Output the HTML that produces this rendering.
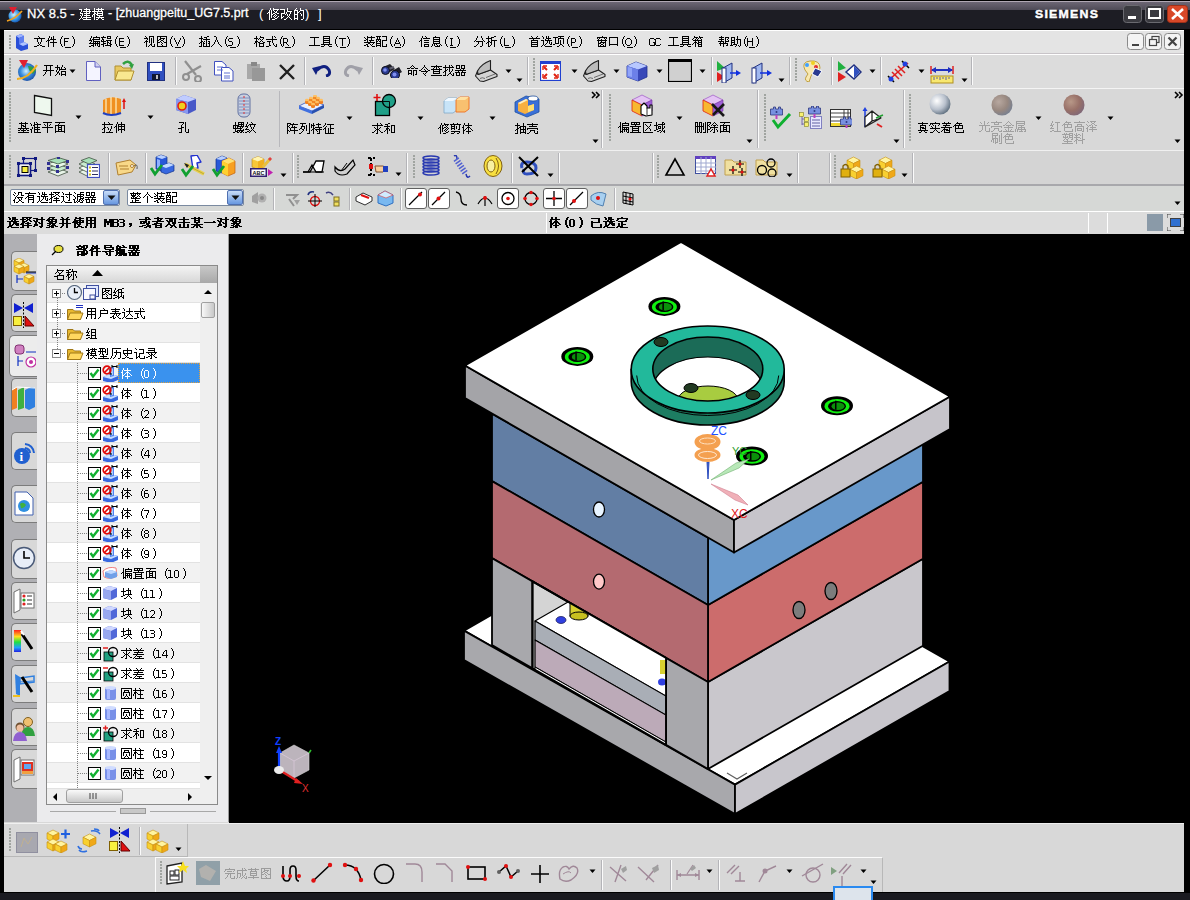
<!DOCTYPE html>
<html><head><meta charset="utf-8"><style>
html,body{margin:0;padding:0;width:1190px;height:900px;overflow:hidden;background:#000}
body>div,body>svg{position:absolute}
body{font-family:"Liberation Sans",sans-serif}
</style></head><body>
<div style="left:0px;top:0px;width:1190px;height:900px;background:#000"></div>
<div style="left:0px;top:1px;width:1190px;height:1px;background:#b0a8b4"></div>
<div style="left:0px;top:2px;width:1190px;height:8px;background:linear-gradient(#6c6674,#4e4a56)"></div>
<div style="left:0px;top:10px;width:1190px;height:19px;background:#1d1d24"></div>
<svg style="left:6px;top:6px;" width="17" height="17" viewBox="0 0 17 17"><defs><radialGradient id="nxg" cx="0.4" cy="0.4" r="0.7"><stop offset="0" stop-color="#c8f0ff"/><stop offset="0.6" stop-color="#3090e0"/><stop offset="1" stop-color="#1040a0"/></radialGradient></defs><circle cx="9" cy="10" r="6.5" fill="url(#nxg)"/><path d="M1 15 Q9 13 16 5" stroke="#f0a020" stroke-width="1.8" fill="none"/><path d="M3 1 L11 1 L7 8 z" fill="#e02030"/></svg>
<div style="left:27px;top:6px;white-space:nowrap;font:13px 'Liberation Sans',sans-serif;color:#fff;-webkit-text-stroke:0.3px #fff">NX 8.5 -</div>
<svg style="left:77px;top:4px" width="34" height="30"><path fill="#fff" d="M24 4h1v1h-1zM9 4h1v1h-1zM21 4h1v1h-1zM2 5h3v1h-3zM19 5h8v1h-8zM7 5h6v1h-6zM17 4h1v3h-1zM12 6h1v1h-1zM24 6h1v1h-1zM9 6h1v1h-1zM21 6h1v1h-1zM4 6h1v2h-1zM15 7h11v1h-11zM6 7h8v1h-8zM17 8h1v1h-1zM12 8h1v1h-1zM3 8h1v1h-1zM20 8h1v1h-1zM25 8h1v1h-1zM9 8h1v1h-1zM20 9h6v1h-6zM3 9h3v1h-3zM17 9h2v1h-2zM7 9h6v1h-6zM16 10h2v1h-2zM19 10h2v1h-2zM25 10h1v1h-1zM9 10h1v1h-1zM5 10h1v2h-1zM3 11h1v1h-1zM20 11h6v1h-6zM7 11h6v1h-6zM15 11h1v2h-1zM22 12h1v1h-1zM9 12h1v1h-1zM4 12h1v2h-1zM19 13h8v1h-8zM6 13h8v1h-8zM24 14h1v1h-1zM3 14h1v1h-1zM5 14h1v1h-1zM9 14h1v1h-1zM21 14h1v1h-1zM17 11h1v5h-1zM2 15h1v1h-1zM6 15h8v1h-8zM25 15h2v1h-2zM19 15h2v1h-2z"/></svg>
<div style="left:108px;top:6px;white-space:nowrap;font:12.5px 'Liberation Sans',sans-serif;color:#fff;-webkit-text-stroke:0.3px #fff">- [zhuangpeitu_UG7.5.prt</div>
<div style="left:259px;top:6px;white-space:nowrap;font:13px 'Liberation Sans',sans-serif;color:#fff;">(</div>
<svg style="left:265px;top:4px" width="47" height="30"><path fill="#fff" d="M8 4h1v1h-1zM31 4h1v1h-1zM35 4h1v2h-1zM5 4h1v2h-1zM15 5h5v1h-5zM30 5h1v1h-1zM8 5h6v1h-6zM22 4h1v3h-1zM29 6h4v1h-4zM12 6h1v1h-1zM35 6h4v1h-4zM8 6h1v1h-1zM4 6h1v2h-1zM11 7h1v1h-1zM34 7h1v1h-1zM22 7h5v1h-5zM32 7h1v1h-1zM9 7h1v1h-1zM19 6h1v3h-1zM10 8h2v1h-2zM3 8h2v1h-2zM32 8h2v1h-2zM6 6h1v4h-1zM29 7h1v3h-1zM25 8h1v2h-1zM21 8h1v2h-1zM2 9h1v1h-1zM32 9h1v1h-1zM35 9h1v1h-1zM16 9h4v1h-4zM12 9h2v1h-2zM8 9h2v1h-2zM6 10h2v1h-2zM29 10h4v1h-4zM20 10h1v1h-1zM10 10h1v1h-1zM24 10h1v2h-1zM22 10h1v2h-1zM36 10h1v2h-1zM11 11h1v1h-1zM9 11h1v1h-1zM16 10h1v3h-1zM23 12h1v1h-1zM18 12h1v1h-1zM13 12h1v1h-1zM8 12h1v1h-1zM10 12h1v1h-1zM29 11h1v3h-1zM32 11h1v3h-1zM6 11h1v3h-1zM12 13h1v1h-1zM24 13h1v1h-1zM22 13h1v1h-1zM16 13h2v1h-2zM9 13h1v1h-1zM38 7h1v8h-1zM29 14h4v1h-4zM10 14h2v1h-2zM25 14h1v1h-1zM21 14h1v1h-1zM16 14h1v1h-1zM4 9h1v7h-1zM26 15h1v1h-1zM29 15h1v1h-1zM32 15h1v1h-1zM7 15h3v1h-3zM19 15h2v1h-2zM36 15h2v1h-2z"/></svg>
<div style="left:305px;top:6px;white-space:nowrap;font:13px 'Liberation Sans',sans-serif;color:#fff;">)</div>
<div style="left:318px;top:6px;white-space:nowrap;font:13px 'Liberation Sans',sans-serif;color:#fff;">]</div>
<div style="left:1035px;top:8px;white-space:nowrap;font:bold 11px 'Liberation Sans',sans-serif;color:#fff;letter-spacing:1.1px;-webkit-text-stroke:0.4px #fff;transform:scaleX(1.12);transform-origin:0 0">SIEMENS</div>
<svg style="left:1120px;top:3px;" width="70" height="22" viewBox="0 0 70 22"><rect x="3.5" y="2.5" width="18" height="17" rx="3" fill="#3a3a40" stroke="#6a6a70"/><rect x="8" y="13" width="8" height="3" fill="#fff"/><rect x="25.5" y="2.5" width="18" height="17" rx="3" fill="#3a3a40" stroke="#6a6a70"/><rect x="29" y="6" width="11" height="9" fill="none" stroke="#fff" stroke-width="2"/><rect x="47.5" y="2.5" width="20" height="17" rx="3" fill="#d84828" stroke="#a03018"/><path d="M52 6 L63 16 M63 6 L52 16" stroke="#fff" stroke-width="2.6"/></svg>
<div style="left:4px;top:30px;width:1180px;height:862px;background:#d8d8d8"></div>
<div style="left:4px;top:30px;width:1180px;height:1px;background:#fff"></div>
<div style="left:4px;top:31px;width:1180px;height:22px;background:#e4e4e4"></div>
<div style="left:4px;top:53px;width:1180px;height:1px;background:#c8c4c8"></div>
<svg style="left:7px;top:33px;" width="24" height="18" viewBox="0 0 24 18"><rect x="2" y="2" width="2" height="2" fill="#a0a4a0"/><rect x="2" y="5" width="2" height="2" fill="#a0a4a0"/><rect x="2" y="8" width="2" height="2" fill="#a0a4a0"/><rect x="2" y="11" width="2" height="2" fill="#a0a4a0"/><rect x="2" y="14" width="2" height="2" fill="#a0a4a0"/><rect x="0" y="0" width="4" height="18" fill="none"/><path d="M9 3 L14 1 L17 3 L17 9 L21 11 L21 16 L14 18 L9 15 z" fill="#2a50d8"/><path d="M9 3 L14 1 L17 3 L12 5 z" fill="#9fb4ff"/><path d="M12 5 L17 3 L17 9 L12 11 z" fill="#6080f0"/><path d="M12 11 L17 9 L21 11 L16 13 z" fill="#b0c4ff"/></svg>
<svg style="left:32px;top:32px" width="50" height="28"><path fill="#000" d="M40 4h1v1h-1zM30 4h1v1h-1zM6 4h1v1h-1zM17 4h1v2h-1zM7 5h1v1h-1zM21 4h1v3h-1zM29 5h1v2h-1zM19 5h1v2h-1zM41 5h1v2h-1zM32 6h5v1h-5zM2 6h11v1h-11zM16 6h1v2h-1zM18 7h6v1h-6zM32 7h1v2h-1zM15 8h3v1h-3zM5 7h1v3h-1zM9 7h1v3h-1zM21 8h1v2h-1zM14 9h1v1h-1zM32 9h4v1h-4zM18 10h7v1h-7zM28 7h1v5h-1zM42 7h1v5h-1zM8 10h1v2h-1zM6 10h1v2h-1zM7 12h1v1h-1zM32 10h1v4h-1zM29 12h1v2h-1zM41 12h1v2h-1zM5 13h2v1h-2zM8 13h2v1h-2zM16 9h1v6h-1zM21 11h1v4h-1zM40 14h1v1h-1zM30 14h1v1h-1zM2 14h3v1h-3zM10 14h3v1h-3zM33 15h6v1h-6z"/></svg>
<svg style="left:87px;top:32px" width="50" height="28"><path fill="#000" d="M40 4h1v1h-1zM30 4h1v1h-1zM20 4h4v1h-4zM9 4h1v1h-1zM16 4h1v1h-1zM4 4h1v2h-1zM23 5h1v1h-1zM20 5h1v1h-1zM6 5h7v1h-7zM14 5h5v1h-5zM29 5h1v2h-1zM41 5h1v2h-1zM12 6h1v1h-1zM32 6h5v1h-5zM20 6h4v1h-4zM6 6h1v1h-1zM15 6h1v1h-1zM3 6h1v2h-1zM5 7h8v1h-8zM15 7h2v1h-2zM32 7h1v2h-1zM14 8h1v1h-1zM6 8h1v1h-1zM19 8h6v1h-6zM2 8h3v1h-3zM16 8h1v1h-1zM32 9h5v1h-5zM20 9h1v1h-1zM6 9h7v1h-7zM4 9h1v1h-1zM14 9h5v1h-5zM23 9h1v2h-1zM12 10h1v1h-1zM8 10h1v1h-1zM3 10h1v1h-1zM6 10h1v1h-1zM10 10h1v1h-1zM20 10h2v1h-2zM16 10h1v1h-1zM28 7h1v5h-1zM42 7h1v5h-1zM22 11h2v1h-2zM16 11h3v1h-3zM2 11h11v1h-11zM32 10h1v3h-1zM20 11h1v2h-1zM6 12h1v1h-1zM14 12h3v1h-3zM23 12h2v1h-2zM12 12h1v2h-1zM29 12h1v2h-1zM8 12h1v2h-1zM41 12h1v2h-1zM10 12h1v2h-1zM32 13h5v1h-5zM4 13h3v1h-3zM18 13h6v1h-6zM16 13h1v2h-1zM23 14h1v1h-1zM40 14h1v1h-1zM30 14h1v1h-1zM6 14h1v1h-1zM11 14h2v1h-2zM2 14h2v1h-2zM33 15h6v1h-6z"/></svg>
<svg style="left:142px;top:32px" width="50" height="28"><path fill="#000" d="M40 4h1v1h-1zM30 4h1v1h-1zM3 4h1v1h-1zM15 4h10v1h-10zM7 4h5v1h-5zM18 5h1v1h-1zM4 5h1v1h-1zM29 5h1v2h-1zM41 5h1v2h-1zM2 6h4v1h-4zM18 6h5v1h-5zM15 5h1v3h-1zM38 6h1v2h-1zM32 6h1v2h-1zM5 7h1v1h-1zM17 7h2v1h-2zM21 7h1v1h-1zM19 8h2v1h-2zM4 8h1v1h-1zM15 8h2v1h-2zM24 5h1v5h-1zM33 8h1v2h-1zM37 8h1v2h-1zM18 9h1v1h-1zM15 9h1v1h-1zM3 9h3v1h-3zM21 9h1v1h-1zM11 5h1v6h-1zM7 5h1v6h-1zM2 10h1v1h-1zM19 10h1v1h-1zM15 10h3v1h-3zM22 10h3v1h-3zM9 6h1v6h-1zM28 7h1v5h-1zM42 7h1v5h-1zM34 10h1v2h-1zM36 10h1v2h-1zM20 11h1v1h-1zM19 12h1v1h-1zM8 12h2v1h-2zM24 11h1v3h-1zM15 11h1v3h-1zM12 12h1v2h-1zM29 12h1v2h-1zM35 12h1v2h-1zM41 12h1v2h-1zM7 13h1v1h-1zM20 13h1v1h-1zM9 13h1v1h-1zM4 10h1v5h-1zM40 14h1v1h-1zM30 14h1v1h-1zM6 14h1v1h-1zM15 14h10v1h-10zM10 14h3v1h-3zM33 15h6v1h-6z"/></svg>
<svg style="left:197px;top:32px" width="50" height="28"><path fill="#000" d="M40 4h1v1h-1zM30 4h1v1h-1zM17 4h2v1h-2zM10 4h2v1h-2zM4 4h1v2h-1zM7 5h3v1h-3zM29 5h1v2h-1zM41 5h1v2h-1zM2 6h4v1h-4zM32 6h4v1h-4zM9 6h1v1h-1zM19 5h1v3h-1zM6 7h7v1h-7zM31 7h1v2h-1zM4 7h1v2h-1zM18 8h1v2h-1zM20 8h1v2h-1zM7 9h1v1h-1zM4 9h2v1h-2zM11 9h2v1h-2zM32 9h3v1h-3zM12 10h1v1h-1zM6 10h1v1h-1zM3 10h2v1h-2zM28 7h1v5h-1zM42 7h1v5h-1zM17 10h1v2h-1zM21 10h1v2h-1zM6 11h2v1h-2zM2 11h1v1h-1zM11 11h2v1h-2zM35 10h1v3h-1zM22 12h1v1h-1zM16 12h1v1h-1zM9 8h1v6h-1zM4 11h1v3h-1zM12 12h1v2h-1zM29 12h1v2h-1zM6 12h1v2h-1zM41 12h1v2h-1zM23 13h1v1h-1zM31 13h4v1h-4zM15 13h1v1h-1zM40 14h1v1h-1zM24 14h1v1h-1zM30 14h1v1h-1zM14 14h1v1h-1zM2 14h3v1h-3zM6 14h7v1h-7zM33 15h6v1h-6z"/></svg>
<svg style="left:252px;top:32px" width="50" height="28"><path fill="#000" d="M40 4h1v1h-1zM30 4h1v1h-1zM22 4h1v1h-1zM8 4h1v1h-1zM4 4h1v2h-1zM23 5h1v1h-1zM8 5h4v1h-4zM20 4h1v3h-1zM29 5h1v2h-1zM41 5h1v2h-1zM11 6h1v1h-1zM2 6h4v1h-4zM7 6h1v1h-1zM31 6h4v1h-4zM8 7h1v1h-1zM6 7h1v1h-1zM10 7h1v1h-1zM14 7h11v1h-11zM4 7h1v2h-1zM9 8h1v1h-1zM35 7h1v3h-1zM31 7h1v3h-1zM8 9h1v1h-1zM15 9h4v1h-4zM10 9h1v1h-1zM3 9h3v1h-3zM20 8h1v3h-1zM6 10h2v1h-2zM31 10h4v1h-4zM11 10h2v1h-2zM3 10h2v1h-2zM28 7h1v5h-1zM42 7h1v5h-1zM34 11h1v1h-1zM2 11h1v1h-1zM7 11h5v1h-5zM17 10h1v3h-1zM21 11h1v2h-1zM35 12h1v1h-1zM31 11h1v3h-1zM11 12h1v2h-1zM7 12h1v2h-1zM29 12h1v2h-1zM24 12h1v2h-1zM41 12h1v2h-1zM22 13h1v1h-1zM36 13h1v1h-1zM17 13h2v1h-2zM4 11h1v4h-1zM40 14h1v1h-1zM30 14h1v1h-1zM14 14h3v1h-3zM23 14h2v1h-2zM7 14h5v1h-5zM33 15h6v1h-6z"/></svg>
<svg style="left:307px;top:32px" width="50" height="28"><path fill="#000" d="M16 4h7v1h-7zM40 4h1v1h-1zM30 4h1v1h-1zM22 5h1v1h-1zM3 5h9v1h-9zM16 5h1v1h-1zM29 5h1v2h-1zM41 5h1v2h-1zM16 6h7v1h-7zM32 6h7v1h-7zM22 7h1v1h-1zM16 7h1v1h-1zM16 8h7v1h-7zM22 9h1v1h-1zM16 9h1v1h-1zM16 10h7v1h-7zM28 7h1v5h-1zM42 7h1v5h-1zM22 11h1v1h-1zM16 11h1v1h-1zM7 6h1v7h-1zM14 12h11v1h-11zM35 7h1v7h-1zM29 12h1v2h-1zM41 12h1v2h-1zM17 13h1v1h-1zM2 13h11v1h-11zM21 13h1v1h-1zM22 14h3v1h-3zM14 14h3v1h-3zM40 14h1v1h-1zM30 14h1v1h-1zM33 15h6v1h-6z"/></svg>
<svg style="left:362px;top:32px" width="50" height="28"><path fill="#000" d="M20 4h5v1h-5zM40 4h1v1h-1zM30 4h1v1h-1zM5 4h1v1h-1zM9 4h1v1h-1zM14 4h5v1h-5zM2 5h1v1h-1zM5 5h8v1h-8zM17 5h1v2h-1zM29 5h1v2h-1zM41 5h1v2h-1zM15 5h1v2h-1zM3 6h1v1h-1zM5 6h1v1h-1zM24 5h1v3h-1zM35 6h1v2h-1zM9 6h1v2h-1zM4 7h2v1h-2zM14 7h5v1h-5zM20 8h5v1h-5zM18 8h1v1h-1zM14 8h1v1h-1zM2 8h2v1h-2zM7 8h5v1h-5zM16 8h1v1h-1zM34 8h1v2h-1zM36 8h1v2h-1zM5 8h1v2h-1zM8 9h1v1h-1zM17 9h2v1h-2zM14 9h2v1h-2zM33 10h1v1h-1zM18 10h1v1h-1zM14 10h1v1h-1zM2 10h11v1h-11zM37 10h1v1h-1zM28 7h1v5h-1zM42 7h1v5h-1zM11 11h1v1h-1zM6 11h2v1h-2zM33 11h5v1h-5zM14 11h5v1h-5zM18 12h1v1h-1zM8 12h1v1h-1zM14 12h1v1h-1zM10 12h1v1h-1zM4 12h2v1h-2zM20 9h1v5h-1zM38 12h1v2h-1zM29 12h1v2h-1zM24 12h1v2h-1zM32 12h1v2h-1zM41 12h1v2h-1zM5 13h1v1h-1zM2 13h2v1h-2zM9 13h1v1h-1zM14 13h5v1h-5zM20 14h5v1h-5zM18 14h1v1h-1zM40 14h1v1h-1zM30 14h1v1h-1zM14 14h1v1h-1zM10 14h3v1h-3zM5 14h2v1h-2zM33 15h6v1h-6z"/></svg>
<svg style="left:417px;top:32px" width="50" height="28"><path fill="#000" d="M18 4h1v1h-1zM40 4h1v1h-1zM30 4h1v1h-1zM8 4h1v1h-1zM5 4h1v2h-1zM16 5h7v1h-7zM9 5h1v1h-1zM29 5h1v2h-1zM41 5h1v2h-1zM22 6h1v1h-1zM33 6h3v1h-3zM6 6h7v1h-7zM16 6h1v1h-1zM4 6h1v2h-1zM16 7h7v1h-7zM7 8h5v1h-5zM22 8h1v1h-1zM3 8h2v1h-2zM16 8h1v1h-1zM16 9h7v1h-7zM2 9h1v1h-1zM22 10h1v1h-1zM7 10h5v1h-5zM16 10h1v1h-1zM28 7h1v5h-1zM42 7h1v5h-1zM16 11h7v1h-7zM34 7h1v6h-1zM23 12h1v1h-1zM19 12h1v1h-1zM7 12h5v1h-5zM17 12h1v2h-1zM29 12h1v2h-1zM41 12h1v2h-1zM15 12h1v2h-1zM11 13h1v1h-1zM7 13h1v1h-1zM24 13h1v1h-1zM22 13h1v1h-1zM20 13h1v1h-1zM33 13h3v1h-3zM4 9h1v6h-1zM40 14h1v1h-1zM18 14h5v1h-5zM30 14h1v1h-1zM14 14h1v1h-1zM7 14h5v1h-5zM33 15h6v1h-6z"/></svg>
<svg style="left:472px;top:32px" width="50" height="28"><path fill="#000" d="M22 4h2v1h-2zM40 4h1v1h-1zM30 4h1v1h-1zM5 4h1v2h-1zM9 4h1v2h-1zM16 4h1v2h-1zM19 5h3v1h-3zM29 5h1v2h-1zM41 5h1v2h-1zM14 6h6v1h-6zM10 6h1v2h-1zM4 6h1v2h-1zM19 7h1v1h-1zM16 7h1v2h-1zM11 8h1v1h-1zM3 8h1v1h-1zM19 8h6v1h-6zM12 9h1v1h-1zM2 9h1v1h-1zM19 9h1v1h-1zM16 9h2v1h-2zM4 9h7v1h-7zM18 10h2v1h-2zM15 10h2v1h-2zM28 7h1v5h-1zM42 7h1v5h-1zM6 10h1v2h-1zM14 11h1v1h-1zM32 6h1v7h-1zM19 11h1v2h-1zM5 12h1v1h-1zM10 10h1v4h-1zM16 11h1v3h-1zM29 12h1v2h-1zM41 12h1v2h-1zM32 13h5v1h-5zM18 13h1v1h-1zM4 13h1v1h-1zM22 9h1v6h-1zM40 14h1v1h-1zM30 14h1v1h-1zM16 14h2v1h-2zM2 14h2v1h-2zM8 14h2v1h-2zM33 15h6v1h-6z"/></svg>
<svg style="left:527px;top:32px" width="62" height="28"><path fill="#000" d="M52 4h1v1h-1zM42 4h1v1h-1zM15 4h1v1h-1zM10 4h1v1h-1zM31 4h6v1h-6zM4 4h1v1h-1zM19 4h1v2h-1zM21 4h1v2h-1zM26 5h5v1h-5zM33 5h1v1h-1zM5 5h1v1h-1zM9 5h1v1h-1zM53 5h1v2h-1zM41 5h1v2h-1zM16 5h1v2h-1zM31 6h6v1h-6zM2 6h11v1h-11zM19 6h5v1h-5zM44 6h4v1h-4zM18 7h1v1h-1zM6 7h1v1h-1zM21 7h1v1h-1zM18 8h7v1h-7zM14 8h3v1h-3zM4 8h7v1h-7zM44 7h1v3h-1zM48 7h1v3h-1zM10 9h1v1h-1zM4 9h1v1h-1zM28 6h1v5h-1zM31 7h1v4h-1zM20 9h1v2h-1zM4 10h7v1h-7zM44 10h4v1h-4zM40 7h1v5h-1zM36 7h1v5h-1zM54 7h1v5h-1zM33 8h1v4h-1zM22 9h1v3h-1zM24 10h1v2h-1zM19 11h1v1h-1zM10 11h1v1h-1zM28 11h4v1h-4zM4 11h1v1h-1zM16 9h1v4h-1zM18 12h1v1h-1zM33 12h2v1h-2zM23 12h2v1h-2zM26 12h2v1h-2zM4 12h7v1h-7zM44 11h1v3h-1zM53 12h1v2h-1zM41 12h1v2h-1zM17 13h1v1h-1zM32 13h1v1h-1zM35 13h1v1h-1zM15 13h1v1h-1zM10 13h1v1h-1zM4 13h1v1h-1zM52 14h1v1h-1zM18 14h7v1h-7zM14 14h1v1h-1zM36 14h1v1h-1zM30 14h2v1h-2zM42 14h1v1h-1zM4 14h7v1h-7zM45 15h6v1h-6z"/></svg>
<svg style="left:594px;top:32px" width="50" height="28"><path fill="#000" d="M30 4h1v1h-1zM40 4h1v1h-1zM8 4h1v1h-1zM3 5h10v1h-10zM15 5h9v1h-9zM41 5h1v2h-1zM29 5h1v2h-1zM12 6h1v1h-1zM3 6h1v1h-1zM10 6h1v1h-1zM5 6h1v1h-1zM33 6h3v1h-3zM11 7h1v1h-1zM7 7h1v1h-1zM32 7h1v1h-1zM36 7h1v1h-1zM4 7h1v1h-1zM3 8h10v1h-10zM11 9h1v1h-1zM7 9h1v1h-1zM4 9h1v2h-1zM6 10h6v1h-6zM23 6h1v6h-1zM15 6h1v6h-1zM28 7h1v5h-1zM42 7h1v5h-1zM31 8h1v4h-1zM37 8h1v4h-1zM4 11h3v1h-3zM9 11h1v1h-1zM32 12h1v1h-1zM36 12h1v1h-1zM7 12h2v1h-2zM15 12h9v1h-9zM11 11h1v3h-1zM29 12h1v2h-1zM41 12h1v2h-1zM4 12h1v2h-1zM23 13h1v1h-1zM6 13h1v1h-1zM15 13h1v1h-1zM33 13h3v1h-3zM9 13h1v1h-1zM40 14h1v1h-1zM4 14h8v1h-8zM30 14h1v1h-1zM33 15h6v1h-6z"/></svg>
<svg style="left:716px;top:32px" width="50" height="28"><path fill="#000" d="M40 4h1v1h-1zM5 4h1v1h-1zM30 4h1v1h-1zM15 5h4v1h-4zM3 5h5v1h-5zM9 5h4v1h-4zM21 4h1v3h-1zM29 5h1v2h-1zM41 5h1v2h-1zM12 6h1v1h-1zM5 6h1v1h-1zM18 6h1v2h-1zM15 6h1v2h-1zM11 7h1v1h-1zM20 7h5v1h-5zM3 7h5v1h-5zM36 6h1v3h-1zM31 6h1v3h-1zM9 6h1v3h-1zM12 8h1v1h-1zM15 8h4v1h-4zM5 8h1v1h-1zM18 9h1v1h-1zM15 9h1v1h-1zM31 9h6v1h-6zM2 9h6v1h-6zM9 9h4v1h-4zM7 10h1v1h-1zM15 10h4v1h-4zM9 10h1v1h-1zM4 10h1v1h-1zM28 7h1v5h-1zM42 7h1v5h-1zM21 8h1v4h-1zM18 11h1v1h-1zM3 11h9v1h-9zM15 11h1v2h-1zM11 12h1v1h-1zM17 12h4v1h-4zM24 8h1v6h-1zM36 10h1v4h-1zM31 10h1v4h-1zM29 12h1v2h-1zM41 12h1v2h-1zM4 12h1v2h-1zM22 13h1v1h-1zM20 13h1v1h-1zM14 13h3v1h-3zM10 13h2v1h-2zM7 12h1v3h-1zM23 14h1v1h-1zM40 14h1v1h-1zM30 14h1v1h-1zM19 14h1v1h-1zM33 15h6v1h-6z"/></svg>
<svg style="left:648px;top:32px" width="62" height="28"><path fill="#000" d="M51 4h1v1h-1zM34 4h7v1h-7zM46 4h1v1h-1zM34 5h1v1h-1zM40 5h1v1h-1zM46 5h4v1h-4zM21 5h9v1h-9zM51 5h4v1h-4zM52 6h1v1h-1zM2 6h4v1h-4zM50 6h1v1h-1zM45 6h1v1h-1zM8 6h4v1h-4zM34 6h7v1h-7zM48 6h1v1h-1zM49 7h1v1h-1zM44 7h1v1h-1zM6 7h2v1h-2zM12 7h1v1h-1zM34 7h1v1h-1zM40 7h1v1h-1zM47 7h1v1h-1zM53 7h1v1h-1zM34 8h7v1h-7zM45 8h9v1h-9zM7 8h1v2h-1zM47 9h1v1h-1zM50 9h1v1h-1zM34 9h1v1h-1zM40 9h1v1h-1zM53 9h1v1h-1zM50 10h4v1h-4zM34 10h7v1h-7zM46 10h3v1h-3zM5 10h3v1h-3zM34 11h1v1h-1zM40 11h1v1h-1zM45 11h1v1h-1zM53 11h1v1h-1zM49 11h2v1h-2zM25 6h1v7h-1zM1 7h1v6h-1zM6 11h2v2h-2zM50 12h4v1h-4zM44 12h1v1h-1zM12 12h1v1h-1zM32 12h11v1h-11zM20 13h11v1h-11zM50 13h1v1h-1zM8 13h4v1h-4zM53 13h1v1h-1zM35 13h1v1h-1zM39 13h1v1h-1zM2 13h5v1h-5zM47 11h1v4h-1zM32 14h3v1h-3zM40 14h3v1h-3zM50 14h4v1h-4z"/></svg>
<svg style="left:1125px;top:31px;" width="60" height="22" viewBox="0 0 60 22"><rect x="2.5" y="2.5" width="16" height="16" rx="3" fill="#f4f4f4" stroke="#8a8a8a"/><rect x="20.5" y="2.5" width="16" height="16" rx="3" fill="#f4f4f4" stroke="#8a8a8a"/><rect x="39.5" y="2.5" width="16" height="16" rx="3" fill="#f4f4f4" stroke="#8a8a8a"/><rect x="7" y="13" width="7" height="2" fill="#444"/><rect x="27" y="5.5" width="7" height="6" fill="none" stroke="#444" stroke-width="1.2"/><rect x="24.5" y="8.5" width="7" height="6" fill="#f4f4f4" stroke="#444" stroke-width="1.2"/><path d="M43.5 6.5 L51.5 14.5 M51.5 6.5 L43.5 14.5" stroke="#444" stroke-width="2.2"/></svg>
<div style="left:4px;top:54px;width:1180px;height:1px;background:#fff"></div>
<div style="left:4px;top:55px;width:1180px;height:33px;background:#dcdcdc"></div>
<div style="left:4px;top:88px;width:1180px;height:1px;background:#f4f4f4"></div>
<div style="left:4px;top:89px;width:1180px;height:61px;background:#d8d8d8"></div>
<div style="left:4px;top:150px;width:1180px;height:1px;background:#f0f0f0"></div>
<div style="left:4px;top:151px;width:1180px;height:33px;background:#d4d4d4"></div>
<div style="left:4px;top:184px;width:1180px;height:2px;background:#a8a8ac"></div>
<div style="left:4px;top:186px;width:1180px;height:25px;background:#d6d8d6"></div>
<div style="left:4px;top:211px;width:1180px;height:1px;background:#fff"></div>
<div style="left:4px;top:212px;width:1180px;height:22px;background:#dcdcdc"></div>
<svg style="left:8px;top:58px" width="4" height="26" viewBox="0 0 4 26"><rect x="1" y="0" width="2" height="2" fill="#a0a4a0"/><rect x="1" y="3" width="2" height="2" fill="#a0a4a0"/><rect x="1" y="6" width="2" height="2" fill="#a0a4a0"/><rect x="1" y="9" width="2" height="2" fill="#a0a4a0"/><rect x="1" y="12" width="2" height="2" fill="#a0a4a0"/><rect x="1" y="15" width="2" height="2" fill="#a0a4a0"/><rect x="1" y="18" width="2" height="2" fill="#a0a4a0"/><rect x="1" y="21" width="2" height="2" fill="#a0a4a0"/></svg><svg style="left:16px;top:60px" width="22" height="22" viewBox="0 0 22 22"><defs><radialGradient id="stg" cx="0.45" cy="0.45" r="0.6"><stop offset="0" stop-color="#d0f0ff"/><stop offset="0.5" stop-color="#3a90e0"/><stop offset="1" stop-color="#1a4aa0"/></radialGradient></defs><circle cx="11" cy="12" r="9" fill="url(#stg)"/><path d="M12 6 Q17 6 20 10 L17 14 Q13 12 12 6z" fill="#30a040"/><path d="M1 19 Q12 19 21 5" stroke="#f0b020" stroke-width="2.2" fill="none"/><path d="M3 0 L12 0 L8 8 z" fill="#e02030"/></svg><svg style="left:41px;top:61px" width="32" height="28"><path fill="#000" d="M3 4h9v1h-9zM21 4h1v2h-1zM16 4h1v2h-1zM23 6h1v1h-1zM14 6h5v1h-5zM20 6h1v2h-1zM18 7h1v1h-1zM24 7h1v1h-1zM9 5h1v4h-1zM5 5h1v4h-1zM16 7h1v2h-1zM18 8h7v1h-7zM2 9h11v1h-11zM18 9h1v1h-1zM15 9h1v2h-1zM20 10h5v1h-5zM17 10h1v1h-1zM5 10h1v1h-1zM16 11h2v1h-2zM24 11h1v2h-1zM20 11h1v2h-1zM4 11h1v2h-1zM16 12h1v1h-1zM18 12h1v2h-1zM20 13h5v1h-5zM3 13h1v1h-1zM15 13h1v1h-1zM9 10h1v5h-1zM2 14h1v1h-1zM24 14h1v1h-1zM14 14h1v1h-1zM20 14h1v1h-1z"/></svg><svg style="left:69px;top:69px" width="7" height="5" viewBox="0 0 7 5"><path d="M0.5 0.5h6l-3 3.5z" fill="#000"/></svg><svg style="left:85px;top:61px" width="17" height="21" viewBox="0 0 17 21"><path d="M1.5 0.5 H10 L15.5 6 V19.5 H1.5 z" fill="#f4f4ff" stroke="#6060c0"/><path d="M10 0.5 V6 H15.5" fill="#d0d0f0" stroke="#6060c0"/></svg><svg style="left:114px;top:60px" width="21" height="22" viewBox="0 0 21 22"><path d="M1 6 H7 L9 8 H17 V20 H1 z" fill="#e8c860" stroke="#b09030"/><path d="M1 20 L4 11 H20 L17 20 z" fill="#f8e890" stroke="#b09030"/><path d="M9 4 Q14 -1 18 5" stroke="#30a040" stroke-width="2.5" fill="none"/><path d="M15 5 L20 4 L18 9z" fill="#30a040"/></svg><svg style="left:147px;top:62px" width="18" height="19" viewBox="0 0 18 19"><rect x="0.5" y="0.5" width="17" height="18" fill="#3050c0" stroke="#203080"/><rect x="3" y="1" width="12" height="8" fill="#fff"/><rect x="5" y="12" width="8" height="6" fill="#101830"/><rect x="9" y="13" width="2" height="4" fill="#c0c0c0"/></svg><div style="left:175px;top:57px;width:1px;height:28px;background:#b4b4b8"></div><div style="left:176px;top:57px;width:1px;height:28px;background:#fbfbfb"></div><svg style="left:181px;top:60px" width="24" height="22" viewBox="0 0 24 22"><path d="M4 1 L15 15 M20 6 L6 14" stroke="#909090" stroke-width="2.2"/><circle cx="5" cy="17" r="3" fill="none" stroke="#909090" stroke-width="2"/><circle cx="17" cy="19" r="3" fill="none" stroke="#909090" stroke-width="2"/></svg><svg style="left:214px;top:61px" width="20" height="21" viewBox="0 0 20 21"><path d="M0.5 0.5 H8 L12 4 V14 H0.5z" fill="#fff" stroke="#4050c0"/><path d="M7.5 6.5 H15 L19 10 V20 H7.5z" fill="#fff" stroke="#4050c0"/><path d="M3 6h6M3 9h6M10 12h6M10 15h6M10 17h6" stroke="#6070d0"/></svg><svg style="left:246px;top:61px" width="20" height="21" viewBox="0 0 20 21"><rect x="1" y="3" width="13" height="15" fill="#a8a8a8"/><rect x="6" y="7" width="13" height="13" fill="#989898"/><rect x="5" y="1" width="6" height="4" fill="#888"/></svg><svg style="left:278px;top:63px" width="18" height="18" viewBox="0 0 18 18"><path d="M2 2 L16 16 M16 2 L2 16" stroke="#202020" stroke-width="2.4"/></svg><div style="left:304px;top:57px;width:1px;height:28px;background:#b4b4b8"></div><div style="left:305px;top:57px;width:1px;height:28px;background:#fbfbfb"></div><svg style="left:312px;top:63px" width="21" height="14" viewBox="0 0 21 14"><path d="M5 7 Q13 0 17 7 Q19 12 14 13" stroke="#102080" stroke-width="3" fill="none"/><path d="M0 5 L8 3 L4 12z" fill="#102080"/></svg><svg style="left:343px;top:63px" width="21" height="14" viewBox="0 0 21 14"><path d="M15 7 Q7 0 3 7 Q1 12 6 13" stroke="#a0a0a8" stroke-width="3" fill="none"/><path d="M20 5 L12 3 L16 12z" fill="#a0a0a8"/></svg><div style="left:372px;top:57px;width:1px;height:28px;background:#b4b4b8"></div><div style="left:373px;top:57px;width:1px;height:28px;background:#fbfbfb"></div><svg style="left:380px;top:63px" width="22" height="15" viewBox="0 0 22 15"><path d="M3 4 L10 1 L15 6 L8 10z" fill="#202028"/><path d="M12 8 L19 4 L22 9 L15 13z" fill="#202028"/><path d="M9 6 L14 4" stroke="#606070" stroke-width="2"/><ellipse cx="5.5" cy="7.5" rx="4" ry="4" fill="#2a3a90" stroke="#101018"/><ellipse cx="15" cy="12" rx="4.5" ry="4.5" fill="#2a3a90" stroke="#101018"/><circle cx="5" cy="7" r="1.8" fill="#8090f0"/><circle cx="14.5" cy="11.5" r="2" fill="#8090f0"/></svg><svg style="left:405px;top:61px" width="68" height="28"><path fill="#000" d="M56 4h4v1h-4zM7 4h1v1h-1zM46 4h1v1h-1zM31 4h1v1h-1zM51 4h4v1h-4zM44 4h1v2h-1zM40 4h1v2h-1zM19 4h1v2h-1zM26 5h11v1h-11zM47 5h1v1h-1zM8 5h1v1h-1zM6 5h1v1h-1zM56 5h1v2h-1zM51 5h1v2h-1zM59 5h1v2h-1zM54 5h1v2h-1zM33 6h1v1h-1zM18 6h1v1h-1zM29 6h1v1h-1zM20 6h1v1h-1zM5 6h1v1h-1zM38 6h11v1h-11zM9 6h1v1h-1zM31 6h1v2h-1zM17 7h1v1h-1zM28 7h1v1h-1zM34 7h1v1h-1zM56 7h4v1h-4zM2 7h3v1h-3zM51 7h4v1h-4zM10 7h3v1h-3zM6 7h3v1h-3zM21 7h1v1h-1zM40 7h1v2h-1zM26 8h11v1h-11zM58 8h1v1h-1zM19 8h1v1h-1zM22 8h1v1h-1zM55 8h1v1h-1zM42 8h1v1h-1zM16 8h1v1h-1zM47 8h1v2h-1zM50 9h11v1h-11zM28 9h1v1h-1zM8 9h4v1h-4zM3 9h4v1h-4zM34 9h1v1h-1zM20 9h1v1h-1zM23 9h2v1h-2zM40 9h2v1h-2zM14 9h2v1h-2zM44 7h1v4h-1zM16 10h7v1h-7zM28 10h7v1h-7zM39 10h2v1h-2zM53 10h1v1h-1zM57 10h1v1h-1zM46 10h1v1h-1zM3 10h1v2h-1zM6 10h1v2h-1zM38 11h1v1h-1zM28 11h1v1h-1zM34 11h1v1h-1zM45 11h1v1h-1zM50 11h5v1h-5zM56 11h5v1h-5zM21 11h1v1h-1zM11 10h1v3h-1zM28 12h7v1h-7zM18 12h1v1h-1zM3 12h4v1h-4zM20 12h1v1h-1zM44 12h2v1h-2zM40 11h1v3h-1zM48 12h1v2h-1zM56 12h1v2h-1zM51 12h1v2h-1zM59 12h1v2h-1zM54 12h1v2h-1zM43 13h1v1h-1zM19 13h1v1h-1zM3 13h1v1h-1zM6 13h1v1h-1zM46 13h1v1h-1zM10 13h2v1h-2zM8 10h1v5h-1zM56 14h4v1h-4zM26 14h11v1h-11zM20 14h1v1h-1zM38 14h3v1h-3zM51 14h4v1h-4zM47 14h2v1h-2zM42 14h1v1h-1z"/></svg><svg style="left:472px;top:57px" width="28" height="28" viewBox="0 0 28 28"><path d="M3.5 19 L5.5 14 L6 17.5 L18.5 13 L25 17.5 L25 19.5 L11.5 24.5 L8 24 z" fill="#d4d4d4" stroke="#202020" stroke-width="1.1" stroke-linejoin="round"/><path d="M5.5 14 Q9 7 18.5 3.5 V13 L6 17.5 z" fill="#bcbcbc" stroke="#202020" stroke-width="1.1" stroke-linejoin="round"/><path d="M8 21.5 Q10 20 13 21.5 M14 20.5 L23 17" stroke="#505050" fill="none" stroke-width="0.8"/></svg><svg style="left:505px;top:69px" width="7" height="5" viewBox="0 0 7 5"><path d="M0.5 0.5h6l-3 3.5z" fill="#000"/></svg><svg style="left:516px;top:78px" width="7" height="5" viewBox="0 0 7 5"><path d="M0.5 0.5h6l-3 3.5z" fill="#000"/></svg><div style="left:527px;top:57px;width:1px;height:28px;background:#b4b4b8"></div><div style="left:528px;top:57px;width:1px;height:28px;background:#fbfbfb"></div><svg style="left:532px;top:58px" width="4" height="26" viewBox="0 0 4 26"><rect x="1" y="0" width="2" height="2" fill="#a0a4a0"/><rect x="1" y="3" width="2" height="2" fill="#a0a4a0"/><rect x="1" y="6" width="2" height="2" fill="#a0a4a0"/><rect x="1" y="9" width="2" height="2" fill="#a0a4a0"/><rect x="1" y="12" width="2" height="2" fill="#a0a4a0"/><rect x="1" y="15" width="2" height="2" fill="#a0a4a0"/><rect x="1" y="18" width="2" height="2" fill="#a0a4a0"/><rect x="1" y="21" width="2" height="2" fill="#a0a4a0"/></svg><svg style="left:540px;top:61px" width="21" height="20" viewBox="0 0 21 20"><rect x="0.5" y="0.5" width="20" height="19" fill="#fff" stroke="#2040d0" stroke-width="1.2"/><rect x="1" y="1" width="19" height="2" fill="#2040d0"/><path d="M4 6 L7 9 M17 6 L14 9 M4 16 L7 13 M17 16 L14 13" stroke="#e02010" stroke-width="2"/><path d="M3 5h4M3 5v4M18 5h-4M18 5v4M3 17h4M3 17v-4M18 17h-4M18 17v-4" stroke="#e02010" stroke-width="1.4"/></svg><svg style="left:571px;top:69px" width="7" height="5" viewBox="0 0 7 5"><path d="M0.5 0.5h6l-3 3.5z" fill="#000"/></svg><svg style="left:580px;top:57px" width="28" height="28" viewBox="0 0 28 28"><path d="M3.5 19 L5.5 14 L6 17.5 L18.5 13 L25 17.5 L25 19.5 L11.5 24.5 L8 24 z" fill="#d4d4d4" stroke="#202020" stroke-width="1.1" stroke-linejoin="round"/><path d="M5.5 14 Q9 7 18.5 3.5 V13 L6 17.5 z" fill="#bcbcbc" stroke="#202020" stroke-width="1.1" stroke-linejoin="round"/><path d="M8 21.5 Q10 20 13 21.5 M14 20.5 L23 17" stroke="#505050" fill="none" stroke-width="0.8"/></svg><svg style="left:613px;top:69px" width="7" height="5" viewBox="0 0 7 5"><path d="M0.5 0.5h6l-3 3.5z" fill="#000"/></svg><svg style="left:626px;top:60px" width="22" height="22" viewBox="0 0 22 22"><path d="M1 6 L10 2 L21 6 L21 17 L12 21 L1 17z" fill="#3848b8" stroke="#203090" stroke-width="0.8"/><path d="M1 6 L10 2 L21 6 L12 9.5z" fill="#b8c8ff"/><path d="M1 6 L12 9.5 L12 21 L1 17z" fill="#6c80e8"/><path d="M2 7 L6 8 L6 17 L2 16z" fill="#90a4f8"/></svg><svg style="left:656px;top:69px" width="7" height="5" viewBox="0 0 7 5"><path d="M0.5 0.5h6l-3 3.5z" fill="#000"/></svg><svg style="left:668px;top:59px" width="24" height="23" viewBox="0 0 24 23"><rect x="0.5" y="0.5" width="23" height="22" fill="#d0d0d0" stroke="#000" stroke-width="1.2"/><rect x="0" y="0" width="24" height="3" fill="#000"/></svg><svg style="left:699px;top:69px" width="7" height="5" viewBox="0 0 7 5"><path d="M0.5 0.5h6l-3 3.5z" fill="#000"/></svg><div style="left:711px;top:57px;width:1px;height:28px;background:#b4b4b8"></div><div style="left:712px;top:57px;width:1px;height:28px;background:#fbfbfb"></div><svg style="left:717px;top:61px" width="25" height="22" viewBox="0 0 25 22"><path d="M0 0 L8 7 L0 10z" fill="#20b040"/><path d="M0 11 L8 16 L0 21z" fill="#e02020"/><path d="M6 7 L15 2 L15 17 L6 22z" fill="#a0b8f0" stroke="#203080"/><rect x="5" y="7" width="4" height="15" fill="#fff" stroke="#203080"/><path d="M13 12 H22" stroke="#1030e0" stroke-width="1.5"/><path d="M24 12 L19 9 L19 15z" fill="#1030e0"/></svg><svg style="left:751px;top:62px" width="22" height="22" viewBox="0 0 22 22"><path d="M2 6 L11 1 L11 16 L2 21z" fill="#a0b8f0" stroke="#203080"/><rect x="1" y="6" width="4" height="15" fill="#fff" stroke="#203080"/><path d="M9 11 H18" stroke="#1030e0" stroke-width="1.5"/><path d="M21 11 L16 8 L16 14z" fill="#1030e0"/></svg><svg style="left:778px;top:78px" width="7" height="5" viewBox="0 0 7 5"><path d="M0.5 0.5h6l-3 3.5z" fill="#000"/></svg><div style="left:789px;top:57px;width:1px;height:28px;background:#b4b4b8"></div><div style="left:790px;top:57px;width:1px;height:28px;background:#fbfbfb"></div><svg style="left:794px;top:58px" width="4" height="26" viewBox="0 0 4 26"><rect x="1" y="0" width="2" height="2" fill="#a0a4a0"/><rect x="1" y="3" width="2" height="2" fill="#a0a4a0"/><rect x="1" y="6" width="2" height="2" fill="#a0a4a0"/><rect x="1" y="9" width="2" height="2" fill="#a0a4a0"/><rect x="1" y="12" width="2" height="2" fill="#a0a4a0"/><rect x="1" y="15" width="2" height="2" fill="#a0a4a0"/><rect x="1" y="18" width="2" height="2" fill="#a0a4a0"/><rect x="1" y="21" width="2" height="2" fill="#a0a4a0"/></svg><svg style="left:801px;top:60px" width="22" height="22" viewBox="0 0 22 22"><path d="M4 10 Q0 2 9 1 Q19 0 19 8 Q18 12 13 11 L10 16 L8 22 Q3 21 5 17 L7 14z" fill="#f8e8b0" stroke="#c0a040"/><circle cx="6" cy="5" r="2" fill="#40a0ff"/><circle cx="12" cy="3" r="2" fill="#f0d020"/><circle cx="15" cy="7" r="2" fill="#e03030"/><path d="M14 8 L21 11 L17 17 L11 14z" fill="#2a3a90" stroke="#fff"/></svg><div style="left:831px;top:57px;width:1px;height:28px;background:#b4b4b8"></div><div style="left:832px;top:57px;width:1px;height:28px;background:#fbfbfb"></div><svg style="left:838px;top:61px" width="24" height="22" viewBox="0 0 24 22"><path d="M0 0 L8 7 L0 10z" fill="#20b040"/><path d="M0 11 L8 16 L0 21z" fill="#e02020"/><path d="M8 11 L16 4 L23 11 L16 18z" fill="#fff" stroke="#203080" stroke-width="1.5"/><path d="M16 5 L22 11 L16 17z" fill="#3050c0"/></svg><svg style="left:869px;top:69px" width="7" height="5" viewBox="0 0 7 5"><path d="M0.5 0.5h6l-3 3.5z" fill="#000"/></svg><div style="left:880px;top:57px;width:1px;height:28px;background:#b4b4b8"></div><div style="left:881px;top:57px;width:1px;height:28px;background:#fbfbfb"></div><svg style="left:887px;top:60px" width="23" height="23" viewBox="0 0 23 23"><path d="M3 19 L21 3" stroke="#e02020" stroke-width="1.5"/><path d="M5 12 L12 19 M8 9 L15 16 M11 6 L18 13" stroke="#e02020" stroke-width="1.5"/><path d="M1 16 L7 22 M15 1 L22 8" stroke="#000" stroke-width="1.5"/><circle cx="4" cy="19" r="2.5" fill="#2040e0"/><circle cx="18" cy="4" r="2.5" fill="#2040e0"/></svg><svg style="left:918px;top:69px" width="7" height="5" viewBox="0 0 7 5"><path d="M0.5 0.5h6l-3 3.5z" fill="#000"/></svg><svg style="left:930px;top:65px" width="24" height="19" viewBox="0 0 24 19"><path d="M1 1 V9 M23 1 V9" stroke="#e02020" stroke-width="1.5"/><path d="M2 5 H22" stroke="#2030c0" stroke-width="2"/><path d="M1 5 L6 2 L6 8z M23 5 L18 2 L18 8z" fill="#2030c0"/><rect x="1" y="11" width="22" height="7" fill="#f8e870" stroke="#b09020"/><path d="M4 12v3M7 12v2M10 12v3M13 12v2M16 12v3M19 12v2" stroke="#6060a0"/></svg><svg style="left:961px;top:78px" width="7" height="5" viewBox="0 0 7 5"><path d="M0.5 0.5h6l-3 3.5z" fill="#000"/></svg><div style="left:971px;top:57px;width:1px;height:28px;background:#b4b4b8"></div><div style="left:972px;top:57px;width:1px;height:28px;background:#fbfbfb"></div>
<svg style="left:8px;top:92px" width="4" height="54" viewBox="0 0 4 54"><rect x="1" y="0" width="2" height="2" fill="#a0a4a0"/><rect x="1" y="3" width="2" height="2" fill="#a0a4a0"/><rect x="1" y="6" width="2" height="2" fill="#a0a4a0"/><rect x="1" y="9" width="2" height="2" fill="#a0a4a0"/><rect x="1" y="12" width="2" height="2" fill="#a0a4a0"/><rect x="1" y="15" width="2" height="2" fill="#a0a4a0"/><rect x="1" y="18" width="2" height="2" fill="#a0a4a0"/><rect x="1" y="21" width="2" height="2" fill="#a0a4a0"/><rect x="1" y="24" width="2" height="2" fill="#a0a4a0"/><rect x="1" y="27" width="2" height="2" fill="#a0a4a0"/><rect x="1" y="30" width="2" height="2" fill="#a0a4a0"/><rect x="1" y="33" width="2" height="2" fill="#a0a4a0"/><rect x="1" y="36" width="2" height="2" fill="#a0a4a0"/><rect x="1" y="39" width="2" height="2" fill="#a0a4a0"/><rect x="1" y="42" width="2" height="2" fill="#a0a4a0"/><rect x="1" y="45" width="2" height="2" fill="#a0a4a0"/><rect x="1" y="48" width="2" height="2" fill="#a0a4a0"/></svg><svg style="left:33px;top:94px" width="20" height="23" viewBox="0 0 20 23"><path d="M1.5 1.5 L18.5 4.5 L18.5 21.5 L1.5 18.5z" fill="#eef8ee" stroke="#101010" stroke-width="1.3"/></svg><svg style="left:16px;top:118px" width="56" height="28"><path fill="#000" d="M20 4h1v1h-1zM5 4h1v1h-1zM39 4h10v1h-10zM27 4h9v1h-9zM9 4h1v1h-1zM18 4h1v2h-1zM43 5h1v1h-1zM14 5h1v1h-1zM3 5h9v1h-9zM21 5h1v1h-1zM28 6h1v1h-1zM34 6h1v1h-1zM18 6h7v1h-7zM5 6h1v1h-1zM42 6h1v1h-1zM15 6h1v2h-1zM9 6h1v2h-1zM33 7h1v1h-1zM29 7h1v1h-1zM17 7h2v1h-2zM39 7h10v1h-10zM5 7h3v1h-3zM31 5h1v4h-1zM21 7h1v2h-1zM18 8h1v1h-1zM45 8h1v1h-1zM7 8h3v1h-3zM42 8h1v1h-1zM5 8h1v2h-1zM26 9h11v1h-11zM18 9h6v1h-6zM42 9h4v1h-4zM9 9h1v1h-1zM16 9h1v2h-1zM18 10h1v1h-1zM45 10h1v1h-1zM42 10h1v1h-1zM2 10h11v1h-11zM21 10h1v1h-1zM7 11h1v1h-1zM10 11h1v1h-1zM18 11h6v1h-6zM42 11h4v1h-4zM14 11h2v1h-2zM4 11h1v1h-1zM48 8h1v5h-1zM39 8h1v5h-1zM5 12h5v1h-5zM45 12h1v1h-1zM11 12h2v1h-2zM2 12h2v1h-2zM42 12h1v1h-1zM18 12h1v2h-1zM21 12h1v2h-1zM7 13h1v1h-1zM39 13h10v1h-10zM31 10h1v5h-1zM15 12h1v3h-1zM18 14h7v1h-7zM48 14h1v1h-1zM39 14h1v1h-1zM2 14h11v1h-11z"/></svg><svg style="left:75px;top:115px" width="7" height="5" viewBox="0 0 7 5"><path d="M0.5 0.5h6l-3 3.5z" fill="#000"/></svg><svg style="left:102px;top:95px" width="25" height="22" viewBox="0 0 25 22"><path d="M1 5 Q9 0 19 4 L19 18 Q9 22 1 18z" fill="#f09020"/><path d="M4 4 L4 19 M9 2 L9 20 M14 2 L14 20" stroke="#fff0c0" stroke-width="1.2"/><path d="M1 18 Q9 22 19 18" stroke="#2040c0" stroke-width="2" fill="none"/><path d="M22 6 V14" stroke="#e01010" stroke-width="1.5"/><path d="M22 3 L20 7 H24z" fill="#e01010"/></svg><svg style="left:100px;top:118px" width="32" height="28"><path fill="#000" d="M8 4h1v1h-1zM17 4h1v2h-1zM4 4h1v2h-1zM21 4h1v2h-1zM9 5h1v1h-1zM2 6h11v1h-11zM18 6h7v1h-7zM16 6h1v2h-1zM18 7h1v1h-1zM24 7h1v1h-1zM21 7h1v1h-1zM4 7h1v2h-1zM15 8h2v1h-2zM18 8h7v1h-7zM7 9h1v1h-1zM14 9h1v1h-1zM4 9h2v1h-2zM11 8h1v3h-1zM18 9h1v2h-1zM24 9h1v2h-1zM21 9h1v2h-1zM3 10h2v1h-2zM8 10h1v2h-1zM2 11h1v1h-1zM18 11h7v1h-7zM10 11h1v2h-1zM18 12h1v1h-1zM24 12h1v1h-1zM4 11h1v3h-1zM9 13h1v1h-1zM16 9h1v6h-1zM21 12h1v3h-1zM2 14h3v1h-3zM6 14h7v1h-7z"/></svg><svg style="left:147px;top:115px" width="7" height="5" viewBox="0 0 7 5"><path d="M0.5 0.5h6l-3 3.5z" fill="#000"/></svg><svg style="left:175px;top:94px" width="22" height="21" viewBox="0 0 22 21"><path d="M1 5 L9 1 L21 5 L21 16 L13 20 L1 16z" fill="#4858c8"/><path d="M1 5 L9 1 L21 5 L13 8z" fill="#c0ccff"/><path d="M1 5 L13 8 L13 20 L1 16z" fill="#8898f0"/><circle cx="7" cy="12" r="4" fill="#f0d020" stroke="#e02010" stroke-width="1.6"/></svg><svg style="left:176px;top:118px" width="20" height="28"><path fill="#000" d="M3 4h5v1h-5zM7 5h1v1h-1zM6 6h1v1h-1zM5 7h1v2h-1zM5 9h3v1h-3zM2 10h4v1h-4zM9 4h1v10h-1zM12 11h1v3h-1zM5 11h1v3h-1zM3 14h3v1h-3zM10 14h3v1h-3z"/></svg><svg style="left:237px;top:93px" width="14" height="25" viewBox="0 0 14 25"><rect x="1" y="1" width="12" height="23" rx="5" fill="#c8d0e0" stroke="#6070a0"/><path d="M2 5h10M2 8h10M2 11h10M2 14h10M2 17h10M2 20h10" stroke="#8090c0"/><path d="M7 3v19" stroke="#e03030" stroke-dasharray="2 2"/></svg><svg style="left:231px;top:118px" width="32" height="28"><path fill="#000" d="M20 4h1v1h-1zM7 4h6v1h-6zM16 4h1v2h-1zM12 5h1v1h-1zM7 5h1v1h-1zM10 5h1v1h-1zM21 5h1v1h-1zM4 4h1v3h-1zM7 6h6v1h-6zM18 6h7v1h-7zM15 6h1v2h-1zM17 7h1v1h-1zM12 7h1v1h-1zM10 7h1v1h-1zM2 7h6v1h-6zM23 7h1v2h-1zM19 7h1v2h-1zM6 8h7v1h-7zM14 8h3v1h-3zM2 8h1v2h-1zM4 8h1v2h-1zM11 9h1v1h-1zM6 9h1v1h-1zM9 9h1v1h-1zM16 9h1v1h-1zM22 9h1v2h-1zM20 9h1v2h-1zM2 10h9v1h-9zM15 10h1v1h-1zM12 11h1v1h-1zM14 11h4v1h-4zM9 11h1v1h-1zM21 11h1v1h-1zM4 11h1v2h-1zM18 12h1v1h-1zM22 12h1v1h-1zM20 12h1v1h-1zM6 12h7v1h-7zM23 13h1v1h-1zM8 13h1v1h-1zM19 13h1v1h-1zM4 13h3v1h-3zM16 13h2v1h-2zM10 13h2v1h-2zM6 14h2v1h-2zM12 14h1v1h-1zM18 14h1v1h-1zM24 14h1v1h-1zM9 14h2v1h-2zM2 14h2v1h-2zM14 14h2v1h-2z"/></svg><div style="left:279px;top:91px;width:1px;height:56px;background:#b8b8bc"></div><svg style="left:298px;top:95px" width="27" height="20" viewBox="0 0 27 20"><path d="M1 11 L13 5 L26 10 L14 16z" fill="#e8f0ff" stroke="#3050c0" stroke-width="0.8"/><path d="M1 11 L14 16 L14 19 L1 14z" fill="#4070e0"/><path d="M14 16 L26 10 L26 13 L14 19z" fill="#2850b0"/><rect x="7" y="5" width="4" height="4" rx="1.5" fill="#f08020"/><ellipse cx="9" cy="5" rx="2" ry="1.2" fill="#ffc060"/><rect x="11" y="3" width="4" height="4" rx="1.5" fill="#f08020"/><ellipse cx="13" cy="3" rx="2" ry="1.2" fill="#ffc060"/><rect x="15" y="1" width="4" height="4" rx="1.5" fill="#f08020"/><ellipse cx="17" cy="1" rx="2" ry="1.2" fill="#ffc060"/><rect x="10" y="7" width="4" height="4" rx="1.5" fill="#f08020"/><ellipse cx="12" cy="7" rx="2" ry="1.2" fill="#ffc060"/><rect x="14" y="5" width="4" height="4" rx="1.5" fill="#f08020"/><ellipse cx="16" cy="5" rx="2" ry="1.2" fill="#ffc060"/><rect x="18" y="3" width="4" height="4" rx="1.5" fill="#f08020"/><ellipse cx="20" cy="3" rx="2" ry="1.2" fill="#ffc060"/><rect x="13" y="9" width="4" height="4" rx="1.5" fill="#f08020"/><ellipse cx="15" cy="9" rx="2" ry="1.2" fill="#ffc060"/><rect x="17" y="7" width="4" height="4" rx="1.5" fill="#f08020"/><ellipse cx="19" cy="7" rx="2" ry="1.2" fill="#ffc060"/><rect x="21" y="5" width="4" height="4" rx="1.5" fill="#f08020"/><ellipse cx="23" cy="5" rx="2" ry="1.2" fill="#ffc060"/></svg><svg style="left:285px;top:119px" width="56" height="28"><path fill="#000" d="M33 4h1v1h-1zM2 4h4v1h-4zM8 4h1v1h-1zM15 4h6v1h-6zM28 4h1v2h-1zM40 4h1v2h-1zM31 5h5v1h-5zM26 5h1v1h-1zM5 5h8v1h-8zM42 5h7v1h-7zM17 5h1v2h-1zM2 5h1v2h-1zM26 6h4v1h-4zM39 6h1v1h-1zM4 6h1v1h-1zM33 6h1v2h-1zM7 6h1v2h-1zM38 7h1v1h-1zM41 7h1v1h-1zM2 7h2v1h-2zM9 7h1v1h-1zM16 7h4v1h-4zM45 6h1v3h-1zM28 7h1v2h-1zM26 7h1v2h-1zM30 8h7v1h-7zM40 8h1v1h-1zM6 8h6v1h-6zM4 8h1v1h-1zM16 8h1v1h-1zM19 8h1v2h-1zM45 9h4v1h-4zM39 9h2v1h-2zM34 9h1v1h-1zM28 9h2v1h-2zM15 9h2v1h-2zM2 8h1v3h-1zM5 9h1v2h-1zM9 9h1v2h-1zM27 10h2v1h-2zM38 10h1v1h-1zM14 10h1v1h-1zM30 10h7v1h-7zM17 10h2v1h-2zM21 6h1v6h-1zM18 11h1v1h-1zM26 11h1v1h-1zM5 11h8v1h-8zM31 11h1v1h-1zM2 11h2v1h-2zM17 12h1v1h-1zM32 12h1v1h-1zM4 12h1v1h-1zM24 4h1v10h-1zM43 9h1v5h-1zM45 10h1v4h-1zM40 10h1v4h-1zM34 11h1v3h-1zM16 13h1v1h-1zM28 11h1v4h-1zM2 12h1v3h-1zM9 12h1v3h-1zM14 14h2v1h-2zM40 14h9v1h-9zM32 14h3v1h-3zM22 14h3v1h-3z"/></svg><svg style="left:346px;top:116px" width="7" height="5" viewBox="0 0 7 5"><path d="M0.5 0.5h6l-3 3.5z" fill="#000"/></svg><svg style="left:373px;top:93px" width="24" height="24" viewBox="0 0 24 24"><path d="M4 1 V8 M0.5 4.5 H7.5" stroke="#e01010" stroke-width="1.6"/><rect x="2.5" y="8.5" width="14" height="14" fill="#20a088" stroke="#000" stroke-width="1.3"/><circle cx="16" cy="8" r="6.5" fill="#20a088" stroke="#000" stroke-width="1.3"/><path d="M10 8.5 H16.5 V15" fill="none" stroke="#000" stroke-width="0.9"/></svg><svg style="left:370px;top:119px" width="32" height="28"><path fill="#000" d="M10 4h1v1h-1zM18 4h2v1h-2zM7 4h1v2h-1zM11 5h1v1h-1zM15 5h3v1h-3zM17 6h1v1h-1zM21 6h4v1h-4zM2 6h11v1h-11zM14 7h6v1h-6zM17 8h1v1h-1zM10 8h1v1h-1zM4 8h1v1h-1zM7 7h1v3h-1zM16 9h3v1h-3zM5 9h1v1h-1zM9 9h1v1h-1zM16 10h2v1h-2zM6 10h3v1h-3zM19 10h1v2h-1zM15 11h1v1h-1zM5 11h1v1h-1zM9 11h1v1h-1zM24 7h1v6h-1zM21 7h1v6h-1zM14 12h1v1h-1zM10 12h1v1h-1zM4 12h1v1h-1zM7 11h1v3h-1zM11 13h2v1h-2zM2 13h2v1h-2zM21 13h4v1h-4zM17 11h1v4h-1zM6 14h2v1h-2z"/></svg><svg style="left:417px;top:116px" width="7" height="5" viewBox="0 0 7 5"><path d="M0.5 0.5h6l-3 3.5z" fill="#000"/></svg><svg style="left:442px;top:95px" width="28" height="20" viewBox="0 0 28 20"><path d="M2 6 L6 3 L15 3 L15 15 L11 18 L2 18z" fill="#c8e4f8" stroke="#80a8c8" stroke-width="0.8"/><path d="M2 6 L6 3 L15 3 L11 6z" fill="#f0f8ff"/><path d="M14 5 L18 2 L27 2 L27 14 L23 17 L14 17z" fill="#f8c070" stroke="#f07020" stroke-width="0.9"/><path d="M14 5 L18 2 L27 2 L23 5z" fill="#ffe0a0"/></svg><svg style="left:436px;top:119px" width="44" height="28"><path fill="#000" d="M17 4h1v1h-1zM8 4h1v1h-1zM21 4h1v1h-1zM28 4h1v2h-1zM32 4h1v2h-1zM5 4h1v2h-1zM8 5h5v1h-5zM14 5h11v1h-11zM11 6h1v1h-1zM6 6h2v1h-2zM18 6h1v1h-1zM29 6h7v1h-7zM15 6h1v1h-1zM9 6h1v1h-1zM27 6h1v2h-1zM4 6h1v2h-1zM32 7h1v1h-1zM15 7h4v1h-4zM10 7h1v1h-1zM6 7h1v2h-1zM11 8h1v1h-1zM18 8h1v1h-1zM15 8h1v1h-1zM31 8h3v1h-3zM8 8h2v1h-2zM3 8h2v1h-2zM26 8h2v1h-2zM23 6h1v4h-1zM20 7h1v3h-1zM6 9h2v1h-2zM12 9h1v1h-1zM2 9h1v1h-1zM15 9h4v1h-4zM30 9h1v1h-1zM34 9h1v1h-1zM10 9h1v1h-1zM27 9h1v2h-1zM11 10h1v1h-1zM22 10h2v1h-2zM18 10h1v1h-1zM29 10h1v1h-1zM35 10h1v1h-1zM15 10h1v1h-1zM9 10h1v1h-1zM32 9h1v3h-1zM27 11h2v1h-2zM8 11h1v1h-1zM36 11h1v1h-1zM10 11h1v1h-1zM6 10h1v3h-1zM12 12h1v1h-1zM15 12h9v1h-9zM9 12h1v1h-1zM30 12h5v1h-5zM23 13h1v1h-1zM18 13h1v1h-1zM10 13h2v1h-2zM4 9h1v6h-1zM27 12h1v3h-1zM32 13h1v2h-1zM7 14h3v1h-3zM21 14h2v1h-2zM15 14h3v1h-3z"/></svg><svg style="left:489px;top:116px" width="7" height="5" viewBox="0 0 7 5"><path d="M0.5 0.5h6l-3 3.5z" fill="#000"/></svg><svg style="left:514px;top:93px" width="26" height="25" viewBox="0 0 26 25"><path d="M1 9 L12 3 L25 6 L25 19 L13 24 L1 19z" fill="#3a70d8" stroke="#2050a0" stroke-width="0.8"/><path d="M4 10 L12 6 L14 7 L14 13 L20 11 L20 17 L11 21 L4 18z" fill="#f8b040"/><path d="M14 13 L20 11 L20 17 L14 19z" fill="#ffe070"/><path d="M4 10 L12 6 L14 7 L6 11z" fill="#fff0c0"/><ellipse cx="19" cy="5.5" rx="5" ry="2.5" fill="#fff" stroke="#2050a0" stroke-width="0.8"/></svg><svg style="left:513px;top:119px" width="32" height="28"><path fill="#000" d="M19 4h1v1h-1zM4 4h1v2h-1zM14 5h11v1h-11zM10 4h1v3h-1zM2 6h5v1h-5zM19 6h1v1h-1zM16 7h8v1h-8zM7 7h6v1h-6zM4 7h1v2h-1zM6 8h2v1h-2zM10 8h1v2h-1zM12 8h1v2h-1zM7 9h1v1h-1zM4 9h2v1h-2zM14 9h11v1h-11zM14 10h1v1h-1zM3 10h2v1h-2zM7 10h6v1h-6zM24 10h1v1h-1zM2 11h1v1h-1zM17 11h5v1h-5zM12 11h1v2h-1zM7 11h1v2h-1zM10 11h1v2h-1zM17 12h1v1h-1zM4 11h1v3h-1zM24 12h1v2h-1zM21 12h1v2h-1zM7 13h6v1h-6zM16 13h1v1h-1zM12 14h1v1h-1zM7 14h1v1h-1zM22 14h3v1h-3zM2 14h3v1h-3zM14 14h2v1h-2z"/></svg><svg style="left:591px;top:91px" width="10" height="9" viewBox="0 0 10 9"><path d="M1 1 L4 4 L1 7 M5 1 L8 4 L5 7" stroke="#000" stroke-width="1.6" fill="none"/></svg><svg style="left:592px;top:139px" width="7" height="5" viewBox="0 0 7 5"><path d="M0.5 0.5h6l-3 3.5z" fill="#000"/></svg><div style="left:601px;top:90px;width:1px;height:58px;background:#b4b4b8"></div><div style="left:602px;top:90px;width:1px;height:58px;background:#fbfbfb"></div><svg style="left:608px;top:94px" width="4" height="50" viewBox="0 0 4 50"><rect x="1" y="0" width="2" height="2" fill="#a0a4a0"/><rect x="1" y="3" width="2" height="2" fill="#a0a4a0"/><rect x="1" y="6" width="2" height="2" fill="#a0a4a0"/><rect x="1" y="9" width="2" height="2" fill="#a0a4a0"/><rect x="1" y="12" width="2" height="2" fill="#a0a4a0"/><rect x="1" y="15" width="2" height="2" fill="#a0a4a0"/><rect x="1" y="18" width="2" height="2" fill="#a0a4a0"/><rect x="1" y="21" width="2" height="2" fill="#a0a4a0"/><rect x="1" y="24" width="2" height="2" fill="#a0a4a0"/><rect x="1" y="27" width="2" height="2" fill="#a0a4a0"/><rect x="1" y="30" width="2" height="2" fill="#a0a4a0"/><rect x="1" y="33" width="2" height="2" fill="#a0a4a0"/><rect x="1" y="36" width="2" height="2" fill="#a0a4a0"/><rect x="1" y="39" width="2" height="2" fill="#a0a4a0"/><rect x="1" y="42" width="2" height="2" fill="#a0a4a0"/><rect x="1" y="45" width="2" height="2" fill="#a0a4a0"/></svg><svg style="left:631px;top:94px" width="23" height="23" viewBox="0 0 23 23"><path d="M1 6 L11 1 L21 6 L11 11z" fill="#e4c4f4" stroke="#9040c0" stroke-width="0.6"/><path d="M1 6 L11 11 L11 22 L1 17z" fill="#f8b830" stroke="#e02010" stroke-width="0.8"/><path d="M11 11 L21 6 L21 17 L11 22z" fill="#a060d8" stroke="#7030a0" stroke-width="0.6"/><path d="M10 12 L13 9 L16 12 V14 H19 V11 H21 V21 L15 22 L10 20z" fill="#fff" stroke="#000" stroke-width="1.1" stroke-linejoin="round"/><path d="M16 14 V21" stroke="#000" stroke-width="0.8"/></svg><svg style="left:616px;top:118px" width="56" height="28"><path fill="#000" d="M15 4h9v1h-9zM46 4h2v1h-2zM27 4h9v1h-9zM9 4h1v1h-1zM23 5h1v1h-1zM18 5h1v1h-1zM48 5h1v1h-1zM46 5h1v1h-1zM20 5h1v1h-1zM15 5h1v1h-1zM6 5h7v1h-7zM40 4h1v3h-1zM12 6h1v1h-1zM29 6h1v1h-1zM6 6h1v1h-1zM15 6h9v1h-9zM42 6h7v1h-7zM4 4h1v4h-1zM34 6h1v2h-1zM30 7h1v1h-1zM19 7h1v1h-1zM6 7h7v1h-7zM38 7h4v1h-4zM33 8h1v1h-1zM42 8h3v1h-3zM6 8h1v1h-1zM31 8h1v1h-1zM3 8h2v1h-2zM14 8h11v1h-11zM46 7h1v3h-1zM48 8h1v2h-1zM44 9h1v1h-1zM2 9h1v1h-1zM32 9h1v1h-1zM22 9h1v1h-1zM42 9h1v1h-1zM6 9h7v1h-7zM16 9h1v1h-1zM40 8h1v3h-1zM16 10h7v1h-7zM33 10h1v1h-1zM12 10h1v1h-1zM8 10h1v1h-1zM6 10h1v1h-1zM31 10h1v1h-1zM42 10h3v1h-3zM10 10h1v1h-1zM46 10h2v1h-2zM22 11h1v1h-1zM30 11h1v1h-1zM6 11h7v1h-7zM40 11h2v1h-2zM16 11h1v1h-1zM4 9h1v4h-1zM34 11h1v2h-1zM46 11h1v2h-1zM16 12h7v1h-7zM29 12h1v1h-1zM48 12h1v1h-1zM6 12h1v1h-1zM38 12h2v1h-2zM43 12h2v1h-2zM27 5h1v9h-1zM12 12h1v2h-1zM8 12h1v2h-1zM10 12h1v2h-1zM45 13h1v1h-1zM4 13h3v1h-3zM22 13h1v1h-1zM41 13h2v1h-2zM47 13h2v1h-2zM16 13h1v1h-1zM44 14h1v1h-1zM48 14h1v1h-1zM6 14h1v1h-1zM11 14h2v1h-2zM27 14h10v1h-10zM4 14h1v1h-1zM14 14h11v1h-11z"/></svg><svg style="left:676px;top:116px" width="7" height="5" viewBox="0 0 7 5"><path d="M0.5 0.5h6l-3 3.5z" fill="#000"/></svg><svg style="left:702px;top:94px" width="23" height="23" viewBox="0 0 23 23"><path d="M1 6 L11 1 L21 6 L11 11z" fill="#e4c4f4" stroke="#9040c0" stroke-width="0.6"/><path d="M1 6 L11 11 L11 22 L1 17z" fill="#f8b830" stroke="#e02010" stroke-width="0.8"/><path d="M11 11 L21 6 L21 17 L11 22z" fill="#a060d8" stroke="#7030a0" stroke-width="0.6"/><path d="M10 10 L22 22 M22 10 L11 21" stroke="#181818" stroke-width="2.6"/></svg><svg style="left:693px;top:118px" width="44" height="28"><path fill="#000" d="M14 4h4v1h-4zM2 4h3v1h-3zM27 4h10v1h-10zM6 4h3v1h-3zM21 4h1v1h-1zM17 5h1v1h-1zM20 5h1v1h-1zM22 5h1v1h-1zM31 5h1v1h-1zM14 5h1v2h-1zM23 6h1v1h-1zM19 6h1v1h-1zM30 6h1v1h-1zM16 6h1v1h-1zM2 5h1v3h-1zM8 5h1v3h-1zM6 5h1v3h-1zM10 5h1v3h-1zM4 5h1v3h-1zM18 7h1v1h-1zM24 7h1v1h-1zM27 7h10v1h-10zM20 7h3v1h-3zM14 7h2v1h-2zM33 8h1v1h-1zM30 8h1v1h-1zM2 8h9v1h-9zM21 8h1v1h-1zM16 8h1v1h-1zM30 9h4v1h-4zM17 9h8v1h-8zM14 8h1v3h-1zM33 10h1v1h-1zM17 10h1v1h-1zM30 10h1v1h-1zM10 9h1v3h-1zM23 11h1v1h-1zM30 11h4v1h-4zM19 11h1v1h-1zM14 11h3v1h-3zM27 8h1v5h-1zM36 8h1v5h-1zM33 12h1v1h-1zM18 12h1v1h-1zM30 12h1v1h-1zM12 4h1v10h-1zM8 9h1v5h-1zM6 9h1v5h-1zM4 9h1v5h-1zM21 10h1v4h-1zM24 12h1v2h-1zM17 13h1v1h-1zM27 13h10v1h-10zM2 9h1v6h-1zM14 12h1v3h-1zM27 14h1v1h-1zM36 14h1v1h-1zM4 14h2v1h-2zM7 14h2v1h-2zM10 14h3v1h-3zM20 14h2v1h-2z"/></svg><svg style="left:746px;top:139px" width="7" height="5" viewBox="0 0 7 5"><path d="M0.5 0.5h6l-3 3.5z" fill="#000"/></svg><div style="left:757px;top:90px;width:1px;height:58px;background:#b4b4b8"></div><div style="left:758px;top:90px;width:1px;height:58px;background:#fbfbfb"></div><svg style="left:763px;top:94px" width="4" height="50" viewBox="0 0 4 50"><rect x="1" y="0" width="2" height="2" fill="#a0a4a0"/><rect x="1" y="3" width="2" height="2" fill="#a0a4a0"/><rect x="1" y="6" width="2" height="2" fill="#a0a4a0"/><rect x="1" y="9" width="2" height="2" fill="#a0a4a0"/><rect x="1" y="12" width="2" height="2" fill="#a0a4a0"/><rect x="1" y="15" width="2" height="2" fill="#a0a4a0"/><rect x="1" y="18" width="2" height="2" fill="#a0a4a0"/><rect x="1" y="21" width="2" height="2" fill="#a0a4a0"/><rect x="1" y="24" width="2" height="2" fill="#a0a4a0"/><rect x="1" y="27" width="2" height="2" fill="#a0a4a0"/><rect x="1" y="30" width="2" height="2" fill="#a0a4a0"/><rect x="1" y="33" width="2" height="2" fill="#a0a4a0"/><rect x="1" y="36" width="2" height="2" fill="#a0a4a0"/><rect x="1" y="39" width="2" height="2" fill="#a0a4a0"/><rect x="1" y="42" width="2" height="2" fill="#a0a4a0"/><rect x="1" y="45" width="2" height="2" fill="#a0a4a0"/></svg><svg style="left:769px;top:106px" width="24" height="24" viewBox="0 0 24 24"><path d="M1.5 3 h3 v-2 h2 v2 h3 v-2 h2 v2 h2 v6 h-12z" fill="#7890e0" stroke="#303880" stroke-width="0.8"/><circle cx="7.5" cy="6" r="1" fill="#303880"/><rect x="6.5" y="9" width="2" height="4" fill="#c040c0"/><path d="M4 14 L9 21 L21 8" stroke="#10b030" stroke-width="3" fill="none"/></svg><svg style="left:799px;top:106px" width="24" height="24" viewBox="0 0 24 24"><path d="M3 8 V19 M3 13 H7 M3 18 H7" stroke="#6050a0" stroke-width="0.8"/><rect x="0.5" y="6.5" width="4" height="4" fill="#f8f070" stroke="#808020" stroke-width="0.6"/><rect x="5.5" y="11.5" width="4" height="4" fill="#f8f070" stroke="#808020" stroke-width="0.6"/><rect x="5.5" y="16.5" width="4" height="4" fill="#f8f070" stroke="#808020" stroke-width="0.6"/><rect x="11.5" y="10.5" width="11" height="12" fill="#e8e8ff" stroke="#8080c0"/><path d="M13 14h8M13 17h8M13 20h8" stroke="#6060a0"/><path d="M9.5 2 h3 v-2 h2 v2 h3 v-2 h2 v2 h2 v6 h-12z" fill="#7890e0" stroke="#303880" stroke-width="0.8"/><circle cx="15.5" cy="5" r="1" fill="#303880"/><rect x="14.5" y="8" width="2" height="4" fill="#c040c0"/></svg><svg style="left:830px;top:108px" width="22" height="20" viewBox="0 0 22 20"><rect x="0.5" y="1.5" width="20" height="17" fill="#fff" stroke="#303030"/><path d="M1 5h20M1 9h20M1 13h20M14 1v17M18 1v17" stroke="#303030" stroke-width="0.9"/><rect x="1" y="15" width="19" height="3" fill="#f0d830"/><path d="M10.5 11 h3 v-2 h2 v2 h3 v-2 h2 v2 h2 v6 h-12z" fill="#7890e0" stroke="#303880" stroke-width="0.8"/><circle cx="16.5" cy="14" r="1" fill="#303880"/><rect x="15.5" y="17" width="2" height="4" fill="#c040c0"/></svg><svg style="left:862px;top:107px" width="23" height="23" viewBox="0 0 23 23"><path d="M3 20 V3" stroke="#2040e0" stroke-width="1.5"/><path d="M3 0 L0.5 4 H5.5z" fill="#2040e0"/><path d="M3 10 L10 4 L10 14 L3 20z M10 4 L19 11 L10 14 M3 20 L19 11" fill="#fff" stroke="#202020" stroke-width="1.2" stroke-linejoin="round"/><path d="M14 11 L21 8" stroke="#20a030" stroke-width="1.5"/><path d="M15 17 L20 20" stroke="#e02020" stroke-width="2"/></svg><svg style="left:893px;top:139px" width="7" height="5" viewBox="0 0 7 5"><path d="M0.5 0.5h6l-3 3.5z" fill="#000"/></svg><div style="left:903px;top:90px;width:1px;height:58px;background:#b4b4b8"></div><div style="left:904px;top:90px;width:1px;height:58px;background:#fbfbfb"></div><svg style="left:908px;top:94px" width="4" height="50" viewBox="0 0 4 50"><rect x="1" y="0" width="2" height="2" fill="#a0a4a0"/><rect x="1" y="3" width="2" height="2" fill="#a0a4a0"/><rect x="1" y="6" width="2" height="2" fill="#a0a4a0"/><rect x="1" y="9" width="2" height="2" fill="#a0a4a0"/><rect x="1" y="12" width="2" height="2" fill="#a0a4a0"/><rect x="1" y="15" width="2" height="2" fill="#a0a4a0"/><rect x="1" y="18" width="2" height="2" fill="#a0a4a0"/><rect x="1" y="21" width="2" height="2" fill="#a0a4a0"/><rect x="1" y="24" width="2" height="2" fill="#a0a4a0"/><rect x="1" y="27" width="2" height="2" fill="#a0a4a0"/><rect x="1" y="30" width="2" height="2" fill="#a0a4a0"/><rect x="1" y="33" width="2" height="2" fill="#a0a4a0"/><rect x="1" y="36" width="2" height="2" fill="#a0a4a0"/><rect x="1" y="39" width="2" height="2" fill="#a0a4a0"/><rect x="1" y="42" width="2" height="2" fill="#a0a4a0"/><rect x="1" y="45" width="2" height="2" fill="#a0a4a0"/></svg><svg style="left:929px;top:93px" width="22" height="22" viewBox="0 0 22 22"><defs><radialGradient id="spb8c0cc" cx="0.35" cy="0.35" r="0.7"><stop offset="0" stop-color="#ffffff"/><stop offset="0.6" stop-color="#b8c0cc"/><stop offset="1" stop-color="#607080"/></radialGradient></defs><circle cx="11" cy="11" r="10.5" fill="url(#spb8c0cc)"/></svg><svg style="left:915px;top:118px" width="56" height="28"><path fill="#000" d="M33 4h1v1h-1zM7 4h1v1h-1zM29 4h1v1h-1zM20 4h1v1h-1zM42 4h1v1h-1zM15 5h10v1h-10zM27 5h9v1h-9zM3 5h10v1h-10zM41 5h6v1h-6zM44 6h1v1h-1zM17 6h1v1h-1zM7 6h1v1h-1zM40 6h1v1h-1zM24 6h1v1h-1zM31 6h1v1h-1zM15 6h1v1h-1zM23 7h1v1h-1zM18 7h1v1h-1zM28 7h7v1h-7zM14 7h1v1h-1zM5 7h6v1h-6zM39 7h9v1h-9zM38 8h1v1h-1zM30 8h1v1h-1zM5 8h1v1h-1zM16 8h1v1h-1zM20 7h1v3h-1zM47 8h1v2h-1zM40 8h1v2h-1zM43 8h1v2h-1zM10 8h1v2h-1zM17 9h1v1h-1zM26 9h11v1h-11zM5 9h4v1h-4zM7 10h4v1h-4zM29 10h1v1h-1zM15 10h10v1h-10zM40 10h8v1h-8zM34 10h1v2h-1zM5 10h1v2h-1zM20 11h1v1h-1zM10 11h1v1h-1zM28 11h5v1h-5zM27 12h1v1h-1zM19 12h1v1h-1zM31 12h4v1h-4zM3 12h10v1h-10zM21 12h1v1h-1zM40 11h1v3h-1zM29 12h1v2h-1zM48 12h1v2h-1zM18 13h1v1h-1zM26 13h1v1h-1zM34 13h1v1h-1zM22 13h1v1h-1zM6 13h1v1h-1zM9 13h1v1h-1zM41 14h8v1h-8zM29 14h6v1h-6zM4 14h2v1h-2zM23 14h2v1h-2zM15 14h3v1h-3zM10 14h2v1h-2z"/></svg><svg style="left:991px;top:94px" width="22" height="22" viewBox="0 0 22 22"><defs><radialGradient id="sp988880" cx="0.35" cy="0.35" r="0.7"><stop offset="0" stop-color="#b8a8a0"/><stop offset="0.6" stop-color="#988880"/><stop offset="1" stop-color="#788090"/></radialGradient></defs><circle cx="11" cy="11" r="10.5" fill="url(#sp988880)"/></svg><svg style="left:977px;top:117px" width="56" height="28"><path fill="#a0a0a0" d="M31 4h1v1h-1zM39 4h9v1h-9zM19 4h1v1h-1zM11 5h1v1h-1zM47 5h1v1h-1zM32 5h1v1h-1zM30 5h1v1h-1zM3 5h1v1h-1zM39 5h1v1h-1zM14 5h11v1h-11zM33 6h1v1h-1zM17 6h1v1h-1zM29 6h1v1h-1zM10 6h1v1h-1zM4 6h1v1h-1zM39 6h9v1h-9zM21 6h1v1h-1zM7 4h1v4h-1zM28 7h1v1h-1zM47 7h1v1h-1zM34 7h1v1h-1zM17 7h5v1h-5zM41 8h6v1h-6zM35 8h2v1h-2zM29 8h5v1h-5zM2 8h11v1h-11zM26 8h2v1h-2zM44 9h1v1h-1zM31 9h1v1h-1zM14 9h11v1h-11zM24 10h1v1h-1zM14 10h1v1h-1zM41 10h7v1h-7zM27 10h9v1h-9zM39 7h1v5h-1zM44 11h1v1h-1zM47 11h1v1h-1zM41 11h1v1h-1zM17 11h5v1h-5zM5 9h1v4h-1zM17 12h1v1h-1zM28 12h1v1h-1zM34 12h1v1h-1zM40 12h9v1h-9zM8 9h1v5h-1zM12 11h1v3h-1zM31 11h1v3h-1zM21 12h1v2h-1zM33 13h1v1h-1zM44 13h1v1h-1zM29 13h1v1h-1zM24 13h1v1h-1zM48 13h1v1h-1zM4 13h1v1h-1zM16 13h1v1h-1zM38 12h1v3h-1zM40 13h1v2h-1zM26 14h11v1h-11zM22 14h3v1h-3zM2 14h2v1h-2zM42 14h4v1h-4zM14 14h2v1h-2zM47 14h2v1h-2zM9 14h4v1h-4z"/></svg><svg style="left:989px;top:129px" width="32" height="28"><path fill="#a0a0a0" d="M18 4h1v1h-1zM3 4h6v1h-6zM3 5h1v1h-1zM17 5h6v1h-6zM8 5h1v1h-1zM20 6h1v1h-1zM3 6h6v1h-6zM16 6h1v1h-1zM15 7h9v1h-9zM3 7h1v2h-1zM6 7h1v2h-1zM14 8h1v1h-1zM23 8h1v2h-1zM19 8h1v2h-1zM16 8h1v2h-1zM3 9h6v1h-6zM16 10h8v1h-8zM3 10h2v1h-2zM10 6h1v7h-1zM8 10h1v3h-1zM6 10h1v3h-1zM2 11h1v2h-1zM12 4h1v10h-1zM4 11h1v3h-1zM16 11h1v3h-1zM24 12h1v2h-1zM6 13h3v1h-3zM6 14h1v1h-1zM17 14h8v1h-8zM10 14h3v1h-3z"/></svg><svg style="left:1035px;top:116px" width="7" height="5" viewBox="0 0 7 5"><path d="M0.5 0.5h6l-3 3.5z" fill="#000"/></svg><svg style="left:1063px;top:94px" width="22" height="22" viewBox="0 0 22 22"><defs><radialGradient id="sp987068" cx="0.35" cy="0.35" r="0.7"><stop offset="0" stop-color="#b89888"/><stop offset="0.6" stop-color="#987068"/><stop offset="1" stop-color="#806878"/></radialGradient></defs><circle cx="11" cy="11" r="10.5" fill="url(#sp987068)"/></svg><svg style="left:1048px;top:117px" width="56" height="28"><path fill="#a0a0a0" d="M18 4h1v1h-1zM39 4h1v1h-1zM31 4h1v1h-1zM42 4h6v1h-6zM4 4h1v2h-1zM26 5h11v1h-11zM40 5h1v1h-1zM43 5h1v1h-1zM46 5h1v1h-1zM17 5h6v1h-6zM7 5h5v1h-5zM20 6h1v1h-1zM44 6h2v1h-2zM16 6h1v1h-1zM3 6h1v2h-1zM38 7h1v1h-1zM43 7h1v1h-1zM46 7h1v1h-1zM5 7h1v1h-1zM29 7h5v1h-5zM15 7h9v1h-9zM33 8h1v1h-1zM29 8h1v1h-1zM14 8h1v1h-1zM39 8h1v1h-1zM2 8h3v1h-3zM47 8h2v1h-2zM41 8h2v1h-2zM44 8h1v2h-1zM23 8h1v2h-1zM19 8h1v2h-1zM16 8h1v2h-1zM40 9h1v1h-1zM27 9h9v1h-9zM4 9h1v1h-1zM3 10h1v1h-1zM39 10h1v1h-1zM42 10h6v1h-6zM16 10h8v1h-8zM44 11h1v1h-1zM2 11h4v1h-4zM38 11h2v1h-2zM29 11h5v1h-5zM33 12h1v1h-1zM41 12h8v1h-8zM29 12h1v1h-1zM9 6h1v8h-1zM35 10h1v4h-1zM16 11h1v3h-1zM24 12h1v2h-1zM4 13h2v1h-2zM29 13h5v1h-5zM27 10h1v5h-1zM39 12h1v3h-1zM44 13h1v2h-1zM6 14h7v1h-7zM34 14h2v1h-2zM2 14h2v1h-2zM17 14h8v1h-8z"/></svg><svg style="left:1060px;top:129px" width="32" height="28"><path fill="#a0a0a0" d="M6 4h1v1h-1zM9 4h4v1h-4zM4 4h1v1h-1zM16 4h1v2h-1zM12 5h1v1h-1zM2 5h8v1h-8zM14 5h1v1h-1zM18 5h2v1h-2zM20 6h1v1h-1zM15 6h3v1h-3zM9 6h4v1h-4zM5 6h1v2h-1zM12 7h1v1h-1zM7 7h1v1h-1zM3 7h1v1h-1zM9 7h1v1h-1zM16 7h1v1h-1zM14 8h6v1h-6zM3 8h5v1h-5zM9 8h4v1h-4zM22 4h1v6h-1zM12 9h1v1h-1zM8 9h1v1h-1zM20 9h1v1h-1zM5 9h1v1h-1zM16 9h1v1h-1zM6 10h2v1h-2zM16 10h2v1h-2zM11 10h2v1h-2zM22 10h3v1h-3zM4 10h1v1h-1zM3 11h1v1h-1zM18 11h5v1h-5zM7 11h1v1h-1zM15 11h2v1h-2zM14 12h1v1h-1zM4 12h8v1h-8zM7 13h1v1h-1zM22 12h1v3h-1zM16 12h1v3h-1zM2 14h11v1h-11z"/></svg><svg style="left:1107px;top:116px" width="7" height="5" viewBox="0 0 7 5"><path d="M0.5 0.5h6l-3 3.5z" fill="#000"/></svg><svg style="left:1174px;top:91px" width="10" height="9" viewBox="0 0 10 9"><path d="M1 1 L4 4 L1 7 M5 1 L8 4 L5 7" stroke="#000" stroke-width="1.6" fill="none"/></svg><svg style="left:1174px;top:139px" width="7" height="5" viewBox="0 0 7 5"><path d="M0.5 0.5h6l-3 3.5z" fill="#000"/></svg><svg style="left:8px;top:155px" width="4" height="26" viewBox="0 0 4 26"><rect x="1" y="0" width="2" height="2" fill="#a0a4a0"/><rect x="1" y="3" width="2" height="2" fill="#a0a4a0"/><rect x="1" y="6" width="2" height="2" fill="#a0a4a0"/><rect x="1" y="9" width="2" height="2" fill="#a0a4a0"/><rect x="1" y="12" width="2" height="2" fill="#a0a4a0"/><rect x="1" y="15" width="2" height="2" fill="#a0a4a0"/><rect x="1" y="18" width="2" height="2" fill="#a0a4a0"/><rect x="1" y="21" width="2" height="2" fill="#a0a4a0"/></svg><svg style="left:15px;top:155px" width="24" height="24" viewBox="0 0 24 24"><rect x="8.5" y="3.5" width="12" height="12" fill="none" stroke="#101880" stroke-width="1.2"/><rect x="3.5" y="8.5" width="12" height="12" fill="#f0f0f0" stroke="#101880" stroke-width="1.6"/><rect x="7" y="11.5" width="6" height="6" fill="#f8f040" stroke="#000" stroke-width="1"/><rect x="7" y="2" width="3" height="3" fill="#101880"/><rect x="19" y="2" width="3" height="3" fill="#101880"/><rect x="19" y="14" width="3" height="3" fill="#101880"/><rect x="2" y="7" width="3" height="3" fill="#101880"/><rect x="14" y="7" width="3" height="3" fill="#101880"/><rect x="2" y="19" width="3" height="3" fill="#101880"/><rect x="14" y="19" width="3" height="3" fill="#101880"/></svg><svg style="left:47px;top:157px" width="22" height="21" viewBox="0 0 22 21"><path d="M1 15 L11 11 L21 15 L11 19z" fill="#e8f4e8" stroke="#405040" stroke-width="0.8"/><path d="M1 11 L11 7 L21 11 L11 15z" fill="#c8ecd0" stroke="#405040" stroke-width="0.8"/><path d="M1 7 L11 3 L21 7 L11 11z" fill="#e8f8e8" stroke="#405040" stroke-width="0.8"/><path d="M1 3.5 L11 0.5 L21 3.5 L11 7z" fill="#a8e0b8" stroke="#405040" stroke-width="0.8"/><rect x="0" y="5" width="3" height="3" fill="#303090"/><rect x="19" y="3" width="3" height="3" fill="#303090"/><rect x="9" y="8" width="3" height="3" fill="#303090"/><rect x="0" y="10" width="3" height="3" fill="#303090"/><rect x="19" y="9" width="3" height="3" fill="#303090"/><rect x="9" y="13" width="3" height="3" fill="#303090"/><rect x="10" y="0" width="3" height="2" fill="#303090"/></svg><svg style="left:78px;top:157px" width="22" height="21" viewBox="0 0 22 21"><path d="M1 15 L9 11 L17 15 L9 19z" fill="#e8f4e8" stroke="#405040" stroke-width="0.8"/><path d="M1 11 L9 7 L17 11 L9 15z" fill="#f4fff4" stroke="#405040" stroke-width="0.8"/><path d="M1 7 L9 3 L17 7 L9 11z" fill="#c8ecd0" stroke="#405040" stroke-width="0.8"/><path d="M3 3.5 L11 0.5 L19 3.5 L11 7z" fill="#a8e0b8" stroke="#405040" stroke-width="0.8"/><rect x="9.5" y="7.5" width="12" height="13" fill="#fff" stroke="#4050c0" stroke-width="1.2"/><rect x="11" y="9.5" width="2" height="2" fill="#d0c020"/><rect x="11" y="13" width="2" height="2" fill="#d0c020"/><rect x="11" y="16.5" width="2" height="2" fill="#d0c020"/><path d="M14 10.5h6M14 14h6M14 17.5h6" stroke="#303060"/></svg><div style="left:108px;top:153px;width:1px;height:30px;background:#b4b4b8"></div><div style="left:109px;top:153px;width:1px;height:30px;background:#fbfbfb"></div><svg style="left:115px;top:157px" width="23" height="19" viewBox="0 0 23 19"><path d="M1 6 L15 3 L21 8 L17 15 L3 18z" fill="#f8d888" stroke="#b08030"/><path d="M4 9h9M5 12h9" stroke="#b08030"/><circle cx="17" cy="9" r="1.5" fill="#fff" stroke="#b08030"/><path d="M19 9 Q23 6 22 12" stroke="#606060" fill="none"/></svg><div style="left:145px;top:153px;width:1px;height:30px;background:#b4b4b8"></div><div style="left:146px;top:153px;width:1px;height:30px;background:#fbfbfb"></div><svg style="left:149px;top:154px" width="26" height="24" viewBox="0 0 26 24"><path d="M7 3 L12 1 L18 3 L18 15 L13 17 L7 15z" fill="#2858d8" stroke="#10308a" stroke-width="0.7"/><path d="M7 3 L12 1 L18 3 L13 5z" fill="#b8d0ff"/><path d="M8 5 L11 6 L11 15 L8 14z" fill="#90b0ff"/><path d="M12 12 L20 9 L25 11 L25 17 L17 20 L12 18z" fill="#3868e0" stroke="#10308a" stroke-width="0.7"/><path d="M12 12 L20 9 L25 11 L17 14z" fill="#c0d8ff"/><path d="M2 14 L6 20 L13 11" stroke="#10a030" stroke-width="2.8" fill="none"/></svg><svg style="left:180px;top:155px" width="26" height="24" viewBox="0 0 26 24"><path d="M11 1 L17 0 L21 7 L17 8 L18 13 L13 14z" fill="#fff" stroke="#2030d0" stroke-width="1.4" stroke-linejoin="round"/><path d="M5 9 L24 19" stroke="#e8d050" stroke-width="3.5"/><path d="M5 9 L24 19" stroke="#a09020" stroke-width="0.6"/><path d="M4 8 L9 10 L7 13" fill="#202020"/><path d="M2 14 L6 20 L13 11" stroke="#10a030" stroke-width="2.8" fill="none"/></svg><svg style="left:211px;top:155px" width="26" height="24" viewBox="0 0 26 24"><path d="M5 4 L11 1 L16 3 L16 16 L10 18 L5 16z" fill="#2858d8" stroke="#10308a" stroke-width="0.7"/><path d="M5 4 L11 1 L16 3 L10 5z" fill="#b8d0ff"/><path d="M11 6 L18 3 L24 6 L24 18 L17 21 L11 18z" fill="#f8a020" stroke="#c06010" stroke-width="0.7"/><path d="M11 6 L18 3 L24 6 L17 9z" fill="#ffe070"/><path d="M11 6 L17 9 L17 21 L11 18z" fill="#ffd030"/><path d="M2 14 L6 20 L13 11" stroke="#10a030" stroke-width="2.8" fill="none"/></svg><div style="left:242px;top:153px;width:1px;height:30px;background:#b4b4b8"></div><div style="left:243px;top:153px;width:1px;height:30px;background:#fbfbfb"></div><svg style="left:250px;top:156px" width="24" height="22" viewBox="0 0 24 22"><path d="M2 3 L8 0.5 L14 3 L14 11 L8 13.5 L2 11z" fill="#f8c838" stroke="#b08020" stroke-width="0.6"/><path d="M2 3 L8 0.5 L14 3 L8 5.5z" fill="#fff4b0"/><path d="M8 5.5 L14 3 L14 11 L8 13.5z" fill="#f0b020"/><path d="M13 11 L20 3" stroke="#e8c040" stroke-width="3"/><path d="M19 2 L21 4" stroke="#e04040" stroke-width="3"/><rect x="0.75" y="12.75" width="15.5" height="7.5" fill="#fff" stroke="#302070" stroke-width="1.5"/><text x="2.5" y="18.8" font-family="Liberation Sans" font-weight="bold" font-size="6" textLength="12" lengthAdjust="spacingAndGlyphs" fill="#101010">ABC</text><path d="M18 13 L23 16.5 L18 20z" fill="#c020b0"/></svg><svg style="left:280px;top:173px" width="7" height="5" viewBox="0 0 7 5"><path d="M0.5 0.5h6l-3 3.5z" fill="#000"/></svg><div style="left:292px;top:153px;width:1px;height:30px;background:#b4b4b8"></div><div style="left:293px;top:153px;width:1px;height:30px;background:#fbfbfb"></div><svg style="left:296px;top:155px" width="4" height="26" viewBox="0 0 4 26"><rect x="1" y="0" width="2" height="2" fill="#a0a4a0"/><rect x="1" y="3" width="2" height="2" fill="#a0a4a0"/><rect x="1" y="6" width="2" height="2" fill="#a0a4a0"/><rect x="1" y="9" width="2" height="2" fill="#a0a4a0"/><rect x="1" y="12" width="2" height="2" fill="#a0a4a0"/><rect x="1" y="15" width="2" height="2" fill="#a0a4a0"/><rect x="1" y="18" width="2" height="2" fill="#a0a4a0"/><rect x="1" y="21" width="2" height="2" fill="#a0a4a0"/></svg><svg style="left:302px;top:159px" width="23" height="15" viewBox="0 0 23 15"><path d="M1 13 L8 13 L14 2 L22 2 L20 13 L14 13 L10 6 L6 13" fill="#fff" stroke="#000" stroke-width="1.3"/><path d="M1 13 H22" stroke="#000"/></svg><svg style="left:333px;top:157px" width="24" height="20" viewBox="0 0 24 20"><path d="M2 10 Q7 16 12 12 L20 3 L22 8 L14 17 Q6 20 2 14z" fill="#d0d0d0" stroke="#000" stroke-width="1.2"/><path d="M8 14 L14 6" stroke="#000"/></svg><svg style="left:366px;top:157px" width="23" height="19" viewBox="0 0 23 19"><path d="M2 1h7M2 18h7M5 1v17" stroke="#000" stroke-width="2" stroke-dasharray="3 2"/><rect x="3" y="7" width="4" height="5" fill="#e01010"/><path d="M9 9 H17 L21 11 L17 15 H10z" fill="#f8d0a0" stroke="#805030"/><rect x="17" y="9" width="5" height="6" fill="#2040c0"/></svg><svg style="left:395px;top:172px" width="7" height="5" viewBox="0 0 7 5"><path d="M0.5 0.5h6l-3 3.5z" fill="#000"/></svg><div style="left:406px;top:153px;width:1px;height:30px;background:#b4b4b8"></div><div style="left:407px;top:153px;width:1px;height:30px;background:#fbfbfb"></div><svg style="left:412px;top:155px" width="4" height="26" viewBox="0 0 4 26"><rect x="1" y="0" width="2" height="2" fill="#a0a4a0"/><rect x="1" y="3" width="2" height="2" fill="#a0a4a0"/><rect x="1" y="6" width="2" height="2" fill="#a0a4a0"/><rect x="1" y="9" width="2" height="2" fill="#a0a4a0"/><rect x="1" y="12" width="2" height="2" fill="#a0a4a0"/><rect x="1" y="15" width="2" height="2" fill="#a0a4a0"/><rect x="1" y="18" width="2" height="2" fill="#a0a4a0"/><rect x="1" y="21" width="2" height="2" fill="#a0a4a0"/></svg><svg style="left:421px;top:155px" width="20" height="22" viewBox="0 0 20 22"><ellipse cx="10" cy="3" rx="8" ry="2" fill="none" stroke="#2838b0" stroke-width="1.6"/><ellipse cx="10" cy="6" rx="8" ry="2" fill="none" stroke="#2838b0" stroke-width="1.6"/><ellipse cx="10" cy="9" rx="8" ry="2" fill="none" stroke="#2838b0" stroke-width="1.6"/><ellipse cx="10" cy="12" rx="8" ry="2" fill="none" stroke="#2838b0" stroke-width="1.6"/><ellipse cx="10" cy="15" rx="8" ry="2" fill="none" stroke="#2838b0" stroke-width="1.6"/><ellipse cx="10" cy="18" rx="8" ry="2" fill="none" stroke="#2838b0" stroke-width="1.6"/></svg><svg style="left:451px;top:155px" width="21" height="24" viewBox="0 0 21 24"><path d="M3 1 Q6 -1 6 4" stroke="#2838b0" fill="none" stroke-width="1.5"/><path d="M5 4 L15 19" stroke="#5060d0" stroke-width="6" stroke-dasharray="1.5 1.5"/><path d="M15 19 Q16 24 19 21" stroke="#2838b0" fill="none" stroke-width="1.5"/></svg><svg style="left:482px;top:155px" width="22" height="22" viewBox="0 0 22 22"><ellipse cx="11" cy="11" rx="9" ry="10.5" fill="#f8e040" stroke="#806010"/><ellipse cx="9" cy="11" rx="4" ry="6" fill="#f8f0a0" stroke="#806010"/><path d="M14 3 Q19 11 14 19" stroke="#806010" fill="none"/></svg><div style="left:511px;top:153px;width:1px;height:30px;background:#b4b4b8"></div><div style="left:512px;top:153px;width:1px;height:30px;background:#fbfbfb"></div><svg style="left:518px;top:156px" width="22" height="22" viewBox="0 0 22 22"><path d="M4 12 Q2 6 9 6 Q18 6 18 12 Q18 18 9 18 Q4 18 6 13" stroke="#3050c0" stroke-width="3" fill="none"/><path d="M1 1 L20 20 M20 1 L4 16" stroke="#000" stroke-width="2"/></svg><svg style="left:547px;top:173px" width="7" height="5" viewBox="0 0 7 5"><path d="M0.5 0.5h6l-3 3.5z" fill="#000"/></svg><div style="left:558px;top:153px;width:1px;height:30px;background:#b4b4b8"></div><div style="left:559px;top:153px;width:1px;height:30px;background:#fbfbfb"></div><div style="left:652px;top:153px;width:1px;height:30px;background:#b4b4b8"></div><div style="left:653px;top:153px;width:1px;height:30px;background:#fbfbfb"></div><svg style="left:656px;top:155px" width="4" height="26" viewBox="0 0 4 26"><rect x="1" y="0" width="2" height="2" fill="#a0a4a0"/><rect x="1" y="3" width="2" height="2" fill="#a0a4a0"/><rect x="1" y="6" width="2" height="2" fill="#a0a4a0"/><rect x="1" y="9" width="2" height="2" fill="#a0a4a0"/><rect x="1" y="12" width="2" height="2" fill="#a0a4a0"/><rect x="1" y="15" width="2" height="2" fill="#a0a4a0"/><rect x="1" y="18" width="2" height="2" fill="#a0a4a0"/><rect x="1" y="21" width="2" height="2" fill="#a0a4a0"/></svg><svg style="left:664px;top:157px" width="23" height="20" viewBox="0 0 23 20"><path d="M2 18 L11 2 L20 18z" fill="none" stroke="#000" stroke-width="1.6"/></svg><svg style="left:695px;top:156px" width="22" height="22" viewBox="0 0 22 22"><rect x="0.5" y="0.5" width="20" height="17" fill="#fff" stroke="#4050a0"/><rect x="0" y="0" width="21" height="3" fill="#6040c0"/><path d="M1 7h20M1 11h20M1 15h20M6 1v17M11 1v17M16 1v17" stroke="#a0a8d0"/><path d="M12 20 L16 13 L20 20z" fill="#fff" stroke="#e02020" stroke-width="1.5"/></svg><svg style="left:724px;top:156px" width="24" height="21" viewBox="0 0 24 21"><path d="M1 4 H8 L10 6 H22 V19 H1z" fill="#f0e0a0" stroke="#c0a050"/><path d="M5 14h8M9 10v8M12 8h8M16 4v8M14 16h8M18 12v8" stroke="#000" stroke-width="1.2"/><circle cx="9" cy="14" r="1.6" fill="#e01010"/><circle cx="16" cy="8" r="1.6" fill="#e01010"/><circle cx="18" cy="16" r="1.6" fill="#e01010"/></svg><svg style="left:755px;top:156px" width="23" height="21" viewBox="0 0 23 21"><path d="M1 4 H8 L10 6 H22 V19 H1z" fill="#f0e0a0" stroke="#c0a050"/><circle cx="7" cy="14" r="4.5" fill="none" stroke="#000" stroke-width="1.3"/><circle cx="16" cy="7" r="4" fill="none" stroke="#000" stroke-width="1.3"/><circle cx="17" cy="17" r="4" fill="none" stroke="#000" stroke-width="1.3"/></svg><svg style="left:786px;top:173px" width="7" height="5" viewBox="0 0 7 5"><path d="M0.5 0.5h6l-3 3.5z" fill="#000"/></svg><div style="left:797px;top:153px;width:1px;height:30px;background:#b4b4b8"></div><div style="left:798px;top:153px;width:1px;height:30px;background:#fbfbfb"></div><div style="left:829px;top:153px;width:1px;height:30px;background:#b4b4b8"></div><div style="left:830px;top:153px;width:1px;height:30px;background:#fbfbfb"></div><svg style="left:833px;top:155px" width="4" height="26" viewBox="0 0 4 26"><rect x="1" y="0" width="2" height="2" fill="#a0a4a0"/><rect x="1" y="3" width="2" height="2" fill="#a0a4a0"/><rect x="1" y="6" width="2" height="2" fill="#a0a4a0"/><rect x="1" y="9" width="2" height="2" fill="#a0a4a0"/><rect x="1" y="12" width="2" height="2" fill="#a0a4a0"/><rect x="1" y="15" width="2" height="2" fill="#a0a4a0"/><rect x="1" y="18" width="2" height="2" fill="#a0a4a0"/><rect x="1" y="21" width="2" height="2" fill="#a0a4a0"/></svg><svg style="left:840px;top:156px" width="24" height="23" viewBox="0 0 24 23"><path d="M7 4.25 L13.5 1 L20.0 4.25 L13.5 7.5z" fill="#fff4a0" stroke="#c89010" stroke-width="0.6"/><path d="M7 4.25 L13.5 7.5 L13.5 14.0 L7 10.75z" fill="#f8d030" stroke="#c89010" stroke-width="0.6"/><path d="M13.5 7.5 L20.0 4.25 L20.0 10.75 L13.5 14.0z" fill="#f0a818" stroke="#c89010" stroke-width="0.6"/><path d="M10 13.25 L16.5 10 L23.0 13.25 L16.5 16.5z" fill="#fff4a0" stroke="#c89010" stroke-width="0.6"/><path d="M10 13.25 L16.5 16.5 L16.5 23.0 L10 19.75z" fill="#f8d030" stroke="#c89010" stroke-width="0.6"/><path d="M16.5 16.5 L23.0 13.25 L23.0 19.75 L16.5 23.0z" fill="#f0a818" stroke="#c89010" stroke-width="0.6"/><rect x="1" y="13" width="9" height="8" fill="#e0b010" stroke="#806000"/><path d="M3 13 V10 Q5.5 7 8 10 V13" stroke="#806000" fill="none" stroke-width="1.3"/></svg><svg style="left:872px;top:156px" width="24" height="23" viewBox="0 0 24 23"><path d="M7 4.25 L13.5 1 L20.0 4.25 L13.5 7.5z" fill="#fff4a0" stroke="#c89010" stroke-width="0.6"/><path d="M7 4.25 L13.5 7.5 L13.5 14.0 L7 10.75z" fill="#f8d030" stroke="#c89010" stroke-width="0.6"/><path d="M13.5 7.5 L20.0 4.25 L20.0 10.75 L13.5 14.0z" fill="#f0a818" stroke="#c89010" stroke-width="0.6"/><path d="M10 13.25 L16.5 10 L23.0 13.25 L16.5 16.5z" fill="#fff4a0" stroke="#c89010" stroke-width="0.6"/><path d="M10 13.25 L16.5 16.5 L16.5 23.0 L10 19.75z" fill="#f8d030" stroke="#c89010" stroke-width="0.6"/><path d="M16.5 16.5 L23.0 13.25 L23.0 19.75 L16.5 23.0z" fill="#f0a818" stroke="#c89010" stroke-width="0.6"/><rect x="1" y="13" width="9" height="8" fill="#e0b010" stroke="#806000"/><path d="M3 13 V10 Q5.5 7 8 10 V13" stroke="#806000" fill="none" stroke-width="1.3"/></svg><svg style="left:901px;top:173px" width="7" height="5" viewBox="0 0 7 5"><path d="M0.5 0.5h6l-3 3.5z" fill="#000"/></svg><div style="left:912px;top:153px;width:1px;height:30px;background:#b4b4b8"></div><div style="left:913px;top:153px;width:1px;height:30px;background:#fbfbfb"></div><div style="left:10px;top:189px;width:110px;height:17px;background:#fff;border:1px solid #7a8aa0;border-radius:2px;box-sizing:border-box"></div><div style="left:103px;top:190px;width:16px;height:15px;background:linear-gradient(#c8dcf8,#6898e0);border:1px solid #5070b0;border-radius:2px;box-sizing:border-box"></div><svg style="left:107px;top:195px" width="9" height="6" viewBox="0 0 9 6"><path d="M0.5 0.5 H8.5 L4.5 5z" fill="#101010"/></svg><svg style="left:11px;top:188px" width="92" height="28"><path fill="#000" d="M7 4h4v1h-4zM18 4h1v1h-1zM27 4h1v1h-1zM3 4h1v1h-1zM69 4h4v1h-4zM80 4h4v1h-4zM75 4h4v1h-4zM51 4h1v1h-1zM63 4h1v1h-1zM42 4h7v1h-7zM33 4h1v2h-1zM58 4h1v2h-1zM40 4h1v2h-1zM31 4h1v2h-1zM44 5h1v1h-1zM47 5h1v1h-1zM64 5h1v1h-1zM69 5h1v1h-1zM4 5h1v1h-1zM14 5h11v1h-11zM28 5h1v2h-1zM7 5h1v2h-1zM52 5h1v2h-1zM10 5h1v2h-1zM80 5h1v2h-1zM83 5h1v2h-1zM75 5h1v2h-1zM78 5h1v2h-1zM31 6h5v1h-5zM17 6h1v1h-1zM2 6h1v1h-1zM54 6h7v1h-7zM66 6h7v1h-7zM38 6h5v1h-5zM45 6h2v1h-2zM33 7h1v1h-1zM44 7h1v1h-1zM47 7h1v1h-1zM66 7h1v1h-1zM30 7h1v1h-1zM3 7h1v1h-1zM6 7h1v1h-1zM69 7h1v1h-1zM72 7h1v1h-1zM80 7h4v1h-4zM17 7h6v1h-6zM10 7h3v1h-3zM75 7h4v1h-4zM62 7h1v1h-1zM40 7h1v2h-1zM79 8h1v1h-1zM48 8h1v1h-1zM22 8h1v1h-1zM30 8h7v1h-7zM55 8h1v1h-1zM66 8h6v1h-6zM5 8h1v1h-1zM42 8h2v1h-2zM50 8h3v1h-3zM16 8h2v1h-2zM82 8h1v1h-1zM26 8h3v1h-3zM63 8h1v1h-1zM74 9h11v1h-11zM45 9h1v1h-1zM56 9h1v1h-1zM69 9h1v1h-1zM15 9h1v1h-1zM72 9h1v1h-1zM17 9h6v1h-6zM40 9h2v1h-2zM6 9h6v1h-6zM32 9h1v2h-1zM64 9h1v2h-1zM4 9h1v2h-1zM69 10h4v1h-4zM14 10h1v1h-1zM39 10h2v1h-2zM7 10h1v1h-1zM22 10h1v1h-1zM77 10h1v1h-1zM43 10h5v1h-5zM81 10h1v1h-1zM17 10h1v1h-1zM58 7h1v5h-1zM34 9h1v3h-1zM36 10h1v2h-1zM10 10h1v2h-1zM45 11h1v1h-1zM3 11h1v1h-1zM17 11h6v1h-6zM68 11h2v1h-2zM38 11h1v1h-1zM71 11h1v1h-1zM31 11h1v1h-1zM74 11h5v1h-5zM80 11h5v1h-5zM8 11h1v1h-1zM62 11h2v1h-2zM52 9h1v4h-1zM28 9h1v4h-1zM66 9h1v4h-1zM2 12h2v1h-2zM35 12h2v1h-2zM57 12h2v1h-2zM8 12h2v1h-2zM42 12h7v1h-7zM68 12h1v1h-1zM72 12h1v1h-1zM70 12h1v1h-1zM30 12h1v1h-1zM40 11h1v3h-1zM80 12h1v2h-1zM22 12h1v2h-1zM75 12h1v2h-1zM83 12h1v2h-1zM63 12h1v2h-1zM78 12h1v2h-1zM27 13h1v1h-1zM51 13h1v1h-1zM71 13h1v1h-1zM7 13h1v1h-1zM29 13h1v1h-1zM53 13h1v1h-1zM67 13h2v1h-2zM65 13h1v1h-1zM10 13h1v1h-1zM17 12h1v3h-1zM45 13h1v2h-1zM3 13h1v2h-1zM54 14h7v1h-7zM50 14h1v1h-1zM26 14h1v1h-1zM66 14h1v1h-1zM80 14h4v1h-4zM30 14h7v1h-7zM38 14h3v1h-3zM63 14h2v1h-2zM21 14h2v1h-2zM11 14h2v1h-2zM69 14h3v1h-3zM75 14h4v1h-4zM5 14h2v1h-2z"/></svg><div style="left:127px;top:189px;width:117px;height:17px;background:#fff;border:1px solid #7a8aa0;border-radius:2px;box-sizing:border-box"></div><div style="left:227px;top:190px;width:16px;height:15px;background:linear-gradient(#c8dcf8,#6898e0);border:1px solid #5070b0;border-radius:2px;box-sizing:border-box"></div><svg style="left:231px;top:195px" width="9" height="6" viewBox="0 0 9 6"><path d="M0.5 0.5 H8.5 L4.5 5z" fill="#101010"/></svg><svg style="left:128px;top:188px" width="56" height="28"><path fill="#000" d="M33 4h1v1h-1zM29 4h1v1h-1zM5 4h1v1h-1zM38 4h5v1h-5zM44 4h5v1h-5zM9 4h1v1h-1zM19 4h1v2h-1zM26 5h1v1h-1zM2 5h11v1h-11zM29 5h8v1h-8zM41 5h1v2h-1zM39 5h1v2h-1zM11 6h1v1h-1zM7 6h1v1h-1zM18 6h1v1h-1zM29 6h1v1h-1zM27 6h1v1h-1zM3 6h1v1h-1zM20 6h1v1h-1zM5 6h1v1h-1zM9 6h1v1h-1zM48 5h1v3h-1zM33 6h1v2h-1zM17 7h1v1h-1zM10 7h1v1h-1zM28 7h2v1h-2zM38 7h5v1h-5zM3 7h5v1h-5zM21 7h1v1h-1zM11 8h1v1h-1zM31 8h5v1h-5zM38 8h1v1h-1zM40 8h1v1h-1zM4 8h3v1h-3zM22 8h1v1h-1zM44 8h5v1h-5zM9 8h1v1h-1zM42 8h1v1h-1zM26 8h2v1h-2zM16 8h1v1h-1zM29 8h1v2h-1zM12 9h1v1h-1zM32 9h1v1h-1zM3 9h1v1h-1zM15 9h1v1h-1zM5 9h1v1h-1zM38 9h2v1h-2zM23 9h2v1h-2zM7 9h2v1h-2zM41 9h2v1h-2zM38 10h1v1h-1zM26 10h11v1h-11zM3 10h9v1h-9zM42 10h1v1h-1zM7 11h1v1h-1zM35 11h1v1h-1zM38 11h5v1h-5zM30 11h2v1h-2zM38 12h1v1h-1zM7 12h4v1h-4zM34 12h1v1h-1zM32 12h1v1h-1zM42 12h1v1h-1zM28 12h2v1h-2zM44 9h1v5h-1zM48 12h1v2h-1zM4 12h1v2h-1zM33 13h1v1h-1zM7 13h1v1h-1zM29 13h1v1h-1zM38 13h5v1h-5zM26 13h2v1h-2zM19 8h1v7h-1zM38 14h1v1h-1zM42 14h1v1h-1zM34 14h3v1h-3zM29 14h2v1h-2zM2 14h11v1h-11zM44 14h5v1h-5z"/></svg><svg style="left:250px;top:190px" width="17" height="17" viewBox="0 0 17 17"><path d="M2 6 L8 2 L8 14 L2 12z" fill="#a0a0a0"/><circle cx="12" cy="8" r="4.5" fill="#b0b0b0"/><circle cx="12" cy="8" r="2" fill="#888"/></svg><div style="left:273px;top:188px;width:1px;height:22px;background:#b4b4b8"></div><div style="left:274px;top:188px;width:1px;height:22px;background:#fbfbfb"></div><svg style="left:285px;top:190px" width="17" height="17" viewBox="0 0 17 17"><path d="M1 5 H12 L8 9 M4 9 L9 16" stroke="#909090" stroke-width="2" fill="none"/><path d="M9 10 L15 10 L12 15z" fill="#a0a0a0"/></svg><svg style="left:306px;top:190px" width="16" height="17" viewBox="0 0 16 17"><path d="M2 5 Q3 1 8 2" stroke="#203080" stroke-width="1.5" fill="none"/><circle cx="9" cy="11" r="4.5" fill="none" stroke="#e01010" stroke-width="1.4"/><path d="M9 4 V17 M2 11 H16" stroke="#000"/></svg><svg style="left:325px;top:190px" width="16" height="17" viewBox="0 0 16 17"><path d="M1 3 Q5 1 8 5" stroke="#404080" stroke-width="1.5" fill="none"/><rect x="9" y="7" width="5" height="4" fill="#f0e060" stroke="#807020"/><rect x="9" y="12" width="5" height="4" fill="#f0e060" stroke="#807020"/></svg><div style="left:349px;top:188px;width:1px;height:22px;background:#b4b4b8"></div><div style="left:350px;top:188px;width:1px;height:22px;background:#fbfbfb"></div><svg style="left:355px;top:191px" width="18" height="15" viewBox="0 0 18 15"><path d="M1 6 L8 2 L17 6 L17 10 L10 14 L1 10z" fill="#fff" stroke="#303030"/><path d="M6 4 L14 7" stroke="#e01010" stroke-width="2"/></svg><svg style="left:377px;top:190px" width="17" height="17" viewBox="0 0 17 17"><path d="M1 5 L8 1 L16 5 L16 13 L9 16 L1 13z" fill="#78b8f0" stroke="#3070c0"/><path d="M1 5 L8 1 L16 5 L9 8z" fill="#d0ecff" stroke="#e04040" stroke-width="0.6"/></svg><div style="left:400px;top:188px;width:1px;height:22px;background:#b4b4b8"></div><div style="left:401px;top:188px;width:1px;height:22px;background:#fbfbfb"></div><div style="left:405px;top:188px;width:22px;height:21px;background:#fff;border:1px solid #606060;border-radius:3px;box-sizing:border-box"></div><svg style="left:407px;top:190px" width="18" height="17" viewBox="0 0 18 17"><path d="M2 15 L15 2" stroke="#000" stroke-width="1.2"/><circle cx="13" cy="4.5" r="2" fill="#e01010"/></svg><div style="left:428px;top:188px;width:22px;height:21px;background:#fff;border:1px solid #606060;border-radius:3px;box-sizing:border-box"></div><svg style="left:430px;top:190px" width="18" height="17" viewBox="0 0 18 17"><path d="M2 15 L15 2" stroke="#000" stroke-width="1.2"/><circle cx="8.5" cy="8.5" r="2" fill="#e01010"/></svg><svg style="left:453px;top:190px" width="18" height="17" viewBox="0 0 18 17"><path d="M3 2 Q8 3 8 9 Q8 15 14 15" stroke="#000" stroke-width="1.3" fill="none"/></svg><svg style="left:476px;top:190px" width="18" height="17" viewBox="0 0 18 17"><path d="M2 14 Q9 2 16 14 M9 6 V16" stroke="#000" stroke-width="1.2" fill="none"/><circle cx="9" cy="8" r="2" fill="#e01010"/></svg><div style="left:497px;top:188px;width:22px;height:21px;background:#fff;border:1px solid #606060;border-radius:3px;box-sizing:border-box"></div><svg style="left:499px;top:190px" width="18" height="17" viewBox="0 0 18 17"><circle cx="9" cy="8.5" r="6" fill="none" stroke="#000" stroke-width="1.3"/><circle cx="9" cy="8.5" r="1.8" fill="#e01010"/></svg><svg style="left:522px;top:190px" width="18" height="17" viewBox="0 0 18 17"><circle cx="9" cy="8.5" r="6" fill="none" stroke="#000" stroke-width="1.3"/><circle cx="9" cy="2.5" r="1.8" fill="#e01010"/><circle cx="3" cy="8.5" r="1.8" fill="#e01010"/><circle cx="15" cy="8.5" r="1.8" fill="#e01010"/><circle cx="9" cy="14.5" r="1.8" fill="#e01010"/></svg><div style="left:543px;top:188px;width:22px;height:21px;background:#fff;border:1px solid #606060;border-radius:3px;box-sizing:border-box"></div><svg style="left:545px;top:190px" width="18" height="17" viewBox="0 0 18 17"><path d="M9 1 V16 M1 8.5 H17" stroke="#000" stroke-width="1.3"/><circle cx="9" cy="8.5" r="1.8" fill="#e01010"/></svg><div style="left:566px;top:188px;width:22px;height:21px;background:#fff;border:1px solid #606060;border-radius:3px;box-sizing:border-box"></div><svg style="left:568px;top:190px" width="18" height="17" viewBox="0 0 18 17"><path d="M2 15 L15 2" stroke="#000" stroke-width="1.2"/><circle cx="6" cy="11" r="2" fill="#e01010"/></svg><svg style="left:590px;top:190px" width="18" height="17" viewBox="0 0 18 17"><path d="M1 6 Q8 0 16 4 L13 16 Q6 15 1 10z" fill="#a8d0f0" stroke="#5080b0"/><circle cx="8" cy="8" r="2" fill="#e01010"/></svg><div style="left:614px;top:188px;width:1px;height:22px;background:#b4b4b8"></div><div style="left:615px;top:188px;width:1px;height:22px;background:#fbfbfb"></div><svg style="left:622px;top:190px" width="13" height="16" viewBox="0 0 13 16"><path d="M1 2 L11 4 L11 15 L1 13z M1 6 L11 8 M1 10 L11 12 M4 3 V14 M8 3.5 V15" fill="none" stroke="#000"/><circle cx="8" cy="9" r="1.5" fill="#e01010"/></svg><svg style="left:1174px;top:201px" width="7" height="5" viewBox="0 0 7 5"><path d="M0.5 0.5h6l-3 3.5z" fill="#000"/></svg><div style="left:1147px;top:214px;width:16px;height:17px;background:#8a9aa8"></div><svg style="left:1167px;top:214px" width="17" height="17" viewBox="0 0 17 17"><rect x="3.5" y="4.5" width="10" height="8" fill="#3070d0" stroke="#404040"/><path d="M0 4V0h4M13 0h4v4M0 13v4h4M13 17h4v-4" stroke="#404040" fill="none"/></svg>
<svg style="left:5px;top:213px" width="244" height="28"><path fill="#000" d="M152 4h2v1h-2zM193 4h2v1h-2zM17 4h10v1h-10zM140 4h4v1h-4zM44 4h6v1h-6zM81 4h10v1h-10zM70 4h2v1h-2zM189 4h2v1h-2zM56 4h2v1h-2zM228 4h6v1h-6zM62 4h2v1h-2zM74 4h2v1h-2zM3 4h2v1h-2zM7 4h4v2h-4zM220 4h2v2h-2zM36 4h2v2h-2zM178 4h2v2h-2zM231 5h2v1h-2zM143 5h2v1h-2zM70 5h9v1h-9zM149 5h9v1h-9zM160 5h12v1h-12zM24 5h2v1h-2zM57 5h2v1h-2zM186 5h12v1h-12zM17 5h2v1h-2zM61 5h2v1h-2zM28 5h5v1h-5zM140 5h2v1h-2zM43 5h2v1h-2zM21 5h2v1h-2zM47 5h2v1h-2zM212 5h5v1h-5zM227 5h2v1h-2zM81 5h2v2h-2zM4 5h2v2h-2zM85 5h2v2h-2zM89 5h2v2h-2zM152 6h2v1h-2zM134 6h12v1h-12zM215 6h9v1h-9zM114 6h5v1h-5zM189 6h2v1h-2zM193 6h2v1h-2zM174 6h10v1h-10zM55 6h10v1h-10zM74 6h2v1h-2zM42 6h10v1h-10zM104 6h9v1h-9zM7 6h6v1h-6zM31 6h9v1h-9zM155 6h2v1h-2zM22 6h3v1h-3zM69 6h2v1h-2zM226 6h10v1h-10zM15 6h6v1h-6zM99 6h3v2h-3zM164 6h4v2h-4zM9 7h2v1h-2zM69 7h10v1h-10zM24 7h2v1h-2zM46 7h2v1h-2zM6 7h2v1h-2zM225 7h4v1h-4zM152 7h4v1h-4zM17 7h2v1h-2zM28 7h2v1h-2zM50 7h2v1h-2zM215 7h2v1h-2zM140 7h2v1h-2zM81 7h10v1h-10zM21 7h2v1h-2zM230 7h2v1h-2zM212 7h2v1h-2zM41 7h4v1h-4zM189 7h6v1h-6zM234 7h2v1h-2zM104 7h5v1h-5zM161 7h2v1h-2zM31 7h2v1h-2zM169 6h2v3h-2zM112 7h2v2h-2zM178 7h2v2h-2zM118 7h2v2h-2zM77 8h2v1h-2zM135 8h7v1h-7zM162 8h6v1h-6zM43 8h9v1h-9zM68 8h5v1h-5zM189 8h2v1h-2zM193 8h2v1h-2zM29 8h4v1h-4zM17 8h5v1h-5zM74 8h2v1h-2zM99 8h10v1h-10zM227 8h9v1h-9zM208 8h2v1h-2zM213 8h4v1h-4zM25 8h2v1h-2zM2 8h12v1h-12zM147 8h12v1h-12zM57 7h2v3h-2zM220 7h2v3h-2zM61 7h2v3h-2zM36 7h2v3h-2zM143 8h2v2h-2zM81 8h2v2h-2zM85 8h2v2h-2zM89 8h2v2h-2zM22 9h2v1h-2zM17 9h3v1h-3zM33 9h2v1h-2zM173 9h12v1h-12zM99 9h14v1h-14zM115 9h4v1h-4zM199 9h12v1h-12zM50 9h2v1h-2zM67 9h12v1h-12zM151 9h2v1h-2zM44 9h4v1h-4zM217 9h2v1h-2zM135 9h2v1h-2zM138 9h4v1h-4zM8 9h4v1h-4zM228 9h4v1h-4zM189 9h6v1h-6zM234 9h2v1h-2zM163 9h2v2h-2zM30 9h2v2h-2zM167 9h4v2h-4zM214 9h2v2h-2zM34 10h4v1h-4zM69 10h4v1h-4zM8 10h6v1h-6zM226 10h9v1h-9zM141 10h4v1h-4zM218 10h4v1h-4zM54 10h12v1h-12zM191 10h2v1h-2zM149 10h8v1h-8zM74 10h2v1h-2zM16 10h3v1h-3zM81 10h10v1h-10zM20 10h6v1h-6zM135 10h5v1h-5zM42 10h9v1h-9zM4 9h2v3h-2zM124 10h3v2h-3zM102 10h2v2h-2zM22 11h2v1h-2zM44 11h2v1h-2zM186 11h12v1h-12zM147 11h5v1h-5zM47 11h3v1h-3zM228 11h2v1h-2zM15 11h4v1h-4zM72 11h4v1h-4zM141 11h3v1h-3zM155 11h2v1h-2zM231 11h3v1h-3zM168 11h2v1h-2zM10 11h4v1h-4zM162 11h4v1h-4zM7 11h2v1h-2zM112 10h2v3h-2zM118 10h2v3h-2zM105 10h4v3h-4zM57 11h2v2h-2zM220 11h2v2h-2zM81 11h2v2h-2zM29 11h4v2h-4zM36 11h2v2h-2zM213 11h4v2h-4zM226 12h3v1h-3zM165 12h5v1h-5zM46 12h5v1h-5zM137 12h4v1h-4zM150 12h7v1h-7zM125 12h2v1h-2zM230 12h5v1h-5zM4 12h4v1h-4zM17 12h10v1h-10zM42 12h3v1h-3zM11 12h3v1h-3zM189 12h6v1h-6zM73 12h2v1h-2zM161 12h2v1h-2zM142 12h4v1h-4zM99 10h2v4h-2zM178 10h2v4h-2zM174 11h2v3h-2zM182 11h2v3h-2zM89 11h2v3h-2zM69 11h2v3h-2zM34 13h4v1h-4zM3 13h4v1h-4zM50 13h3v1h-3zM44 13h5v1h-5zM114 13h5v1h-5zM169 13h2v1h-2zM72 13h5v1h-5zM218 13h4v1h-4zM28 13h2v1h-2zM17 13h2v1h-2zM105 13h8v1h-8zM160 13h2v1h-2zM228 13h5v1h-5zM234 13h3v1h-3zM56 13h2v1h-2zM134 13h4v1h-4zM155 13h2v1h-2zM166 13h2v1h-2zM124 13h2v1h-2zM188 13h2v1h-2zM212 13h2v1h-2zM150 13h2v1h-2zM194 13h2v1h-2zM141 13h5v1h-5zM61 11h2v4h-2zM85 11h2v4h-2zM22 13h2v2h-2zM191 13h2v2h-2zM80 13h2v2h-2zM55 14h2v1h-2zM69 14h4v1h-4zM195 14h3v1h-3zM76 14h3v1h-3zM186 14h3v1h-3zM165 14h2v1h-2zM2 14h2v1h-2zM35 14h2v1h-2zM225 14h4v1h-4zM230 14h3v1h-3zM6 14h8v1h-8zM150 14h7v1h-7zM174 14h10v1h-10zM219 14h2v1h-2zM15 14h4v1h-4zM139 14h3v1h-3zM144 14h2v1h-2zM41 14h4v1h-4zM88 14h3v1h-3zM46 14h3v1h-3zM170 14h2v1h-2z"/></svg>
<svg style="left:547px;top:213px" width="88" height="28"><path fill="#000" d="M74 4h2v1h-2zM20 4h2v1h-2zM57 4h2v1h-2zM32 4h2v1h-2zM61 4h4v2h-4zM4 4h2v2h-2zM8 4h2v2h-2zM44 5h9v1h-9zM70 5h11v1h-11zM33 5h2v2h-2zM58 5h2v2h-2zM19 5h2v2h-2zM23 6h4v1h-4zM61 6h6v1h-6zM3 6h10v1h-10zM70 6h2v1h-2zM79 6h2v1h-2zM60 7h2v1h-2zM78 7h2v1h-2zM63 7h2v1h-2zM8 7h2v1h-2zM3 7h2v1h-2zM69 7h2v1h-2zM51 6h2v3h-2zM7 8h4v1h-4zM71 8h9v1h-9zM2 8h3v1h-3zM44 8h2v1h-2zM56 8h12v1h-12zM62 9h4v1h-4zM44 9h9v1h-9zM6 9h6v1h-6zM3 9h2v1h-2zM74 9h2v2h-2zM3 10h4v1h-4zM62 10h6v1h-6zM11 10h2v1h-2zM18 7h2v5h-2zM34 7h2v5h-2zM58 9h2v3h-2zM8 10h2v2h-2zM64 11h4v1h-4zM3 11h3v1h-3zM12 11h2v1h-2zM61 11h2v1h-2zM74 11h5v1h-5zM22 7h2v6h-2zM26 7h2v6h-2zM71 10h2v3h-2zM58 12h4v1h-4zM65 12h3v1h-3zM6 12h6v1h-6zM74 12h2v1h-2zM44 10h2v4h-2zM53 11h2v3h-2zM33 12h2v2h-2zM19 12h2v2h-2zM23 13h4v1h-4zM57 13h4v1h-4zM70 13h6v1h-6zM3 12h2v3h-2zM8 13h2v2h-2zM60 14h8v1h-8zM73 14h8v1h-8zM69 14h2v1h-2zM45 14h10v1h-10zM56 14h2v1h-2zM20 14h2v1h-2zM32 14h2v1h-2z"/></svg>
<div style="left:546px;top:213px;width:1px;height:20px;background:#fff"></div>
<div style="left:1088px;top:213px;width:1px;height:20px;background:#fff"></div>
<div style="left:1107px;top:213px;width:1px;height:20px;background:#fff"></div>
<div style="left:4px;top:234px;width:33px;height:588px;background:#b0b0b4"></div><div style="left:11px;top:251px;width:26px;height:40px;background:#d8d8d8;border:1px solid #7c7c7c;border-right:none;border-radius:5px 0 0 5px;box-sizing:border-box"></div><div style="left:11px;top:294px;width:26px;height:38px;background:#d8d8d8;border:1px solid #7c7c7c;border-right:none;border-radius:5px 0 0 5px;box-sizing:border-box"></div><div style="left:9px;top:335px;width:28px;height:42px;background:#ececec;border:1px solid #7c7c7c;border-right:none;border-radius:5px 0 0 5px;box-sizing:border-box"></div><div style="left:11px;top:378px;width:26px;height:39px;background:#d8d8d8;border:1px solid #7c7c7c;border-right:none;border-radius:5px 0 0 5px;box-sizing:border-box"></div><div style="left:11px;top:432px;width:26px;height:38px;background:#d8d8d8;border:1px solid #7c7c7c;border-right:none;border-radius:5px 0 0 5px;box-sizing:border-box"></div><div style="left:11px;top:485px;width:26px;height:38px;background:#d8d8d8;border:1px solid #7c7c7c;border-right:none;border-radius:5px 0 0 5px;box-sizing:border-box"></div><div style="left:11px;top:539px;width:26px;height:40px;background:#d8d8d8;border:1px solid #7c7c7c;border-right:none;border-radius:5px 0 0 5px;box-sizing:border-box"></div><div style="left:11px;top:582px;width:26px;height:38px;background:#d8d8d8;border:1px solid #7c7c7c;border-right:none;border-radius:5px 0 0 5px;box-sizing:border-box"></div><div style="left:11px;top:623px;width:26px;height:38px;background:#d8d8d8;border:1px solid #7c7c7c;border-right:none;border-radius:5px 0 0 5px;box-sizing:border-box"></div><div style="left:11px;top:665px;width:26px;height:38px;background:#d8d8d8;border:1px solid #7c7c7c;border-right:none;border-radius:5px 0 0 5px;box-sizing:border-box"></div><div style="left:11px;top:708px;width:26px;height:38px;background:#d8d8d8;border:1px solid #7c7c7c;border-right:none;border-radius:5px 0 0 5px;box-sizing:border-box"></div><div style="left:11px;top:749px;width:26px;height:40px;background:#d8d8d8;border:1px solid #7c7c7c;border-right:none;border-radius:5px 0 0 5px;box-sizing:border-box"></div>
<svg style="left:12px;top:258px" width="24" height="28" viewBox="0 0 24 28"><path d="M2 2.5 L7 0 L12 2.5 L7 5.0z" fill="#fff4a0" stroke="#c89010" stroke-width="0.6"/><path d="M2 2.5 L7 5.0 L7 10.0 L2 7.5z" fill="#f8d030" stroke="#c89010" stroke-width="0.6"/><path d="M7 5.0 L12 2.5 L12 7.5 L7 10.0z" fill="#f0a818" stroke="#c89010" stroke-width="0.6"/><path d="M7 7.5 L12 5 L17 7.5 L12 10.0z" fill="#fff4a0" stroke="#c89010" stroke-width="0.6"/><path d="M7 7.5 L12 10.0 L12 15.0 L7 12.5z" fill="#f8d030" stroke="#c89010" stroke-width="0.6"/><path d="M12 10.0 L17 7.5 L17 12.5 L12 15.0z" fill="#f0a818" stroke="#c89010" stroke-width="0.6"/><path d="M2 8.5 L7 6 L12 8.5 L7 11.0z" fill="#fff4a0" stroke="#c89010" stroke-width="0.6"/><path d="M2 8.5 L7 11.0 L7 16.0 L2 13.5z" fill="#f8d030" stroke="#c89010" stroke-width="0.6"/><path d="M7 11.0 L12 8.5 L12 13.5 L7 16.0z" fill="#f0a818" stroke="#c89010" stroke-width="0.6"/><path d="M5 17 V25 M5 21 H11 M14 15 H24" stroke="#1030c0" stroke-width="1.2"/><path d="M14 14 H24" stroke="#000" stroke-width="1"/><path d="M12 18.5 L17 16 L22 18.5 L17 21.0z" fill="#fff4a0" stroke="#c89010" stroke-width="0.6"/><path d="M12 18.5 L17 21.0 L17 26.0 L12 23.5z" fill="#f8d030" stroke="#c89010" stroke-width="0.6"/><path d="M17 21.0 L22 18.5 L22 23.5 L17 26.0z" fill="#f0a818" stroke="#c89010" stroke-width="0.6"/></svg><svg style="left:12px;top:302px" width="24" height="26" viewBox="0 0 24 26"><path d="M2 1 L11 6 L2 11z M21 1 L12 6 L21 11z" fill="#1020d0"/><path d="M11.5 0 V26" stroke="#000" stroke-dasharray="2 1.5"/><rect x="1.5" y="14.5" width="8" height="9" fill="#f8f040" stroke="#806000"/><path d="M13 24 L13 14 L22 24z" fill="#e01010" stroke="#600000"/></svg><svg style="left:12px;top:344px" width="24" height="26" viewBox="0 0 24 26"><rect x="3" y="1" width="9" height="9" rx="3" fill="#d080c0" stroke="#803070"/><path d="M6 12 V22 M6 17 H11 M14 8 H24" stroke="#1030c0" stroke-width="1.2"/><circle cx="19" cy="18" r="5" fill="#fff" stroke="#c030a0" stroke-width="1.2"/><circle cx="19" cy="18" r="2" fill="#c030a0"/></svg><svg style="left:11px;top:384px" width="25" height="28" viewBox="0 0 25 28"><path d="M1 6 L6 3 L6 24 L1 26z" fill="#f08020"/><path d="M7 6 L13 3 L13 24 L7 26z" fill="#40b040"/><path d="M14 6 L20 3 L24 4 L24 23 L18 26 L14 24z" fill="#3080e0"/><path d="M1 6 L6 3 L24 4" stroke="#fff" fill="none"/></svg><svg style="left:12px;top:440px" width="24" height="26" viewBox="0 0 24 26"><circle cx="10" cy="16" r="8" fill="#2060d0"/><text x="7.5" y="21" font-family="Liberation Serif" font-weight="bold" font-size="13" fill="#fff">i</text><path d="M13 4 Q21 5 22 13 M13 8 Q18 9 18 13" stroke="#2060d0" stroke-width="2" fill="none"/></svg><svg style="left:13px;top:491px" width="22" height="26" viewBox="0 0 22 26"><path d="M2 1 H14 L20 7 V24 H2z" fill="#fff" stroke="#4060b0"/><circle cx="11" cy="15" r="6" fill="#3090e0"/><path d="M7 13 Q10 10 13 14 Q11 18 8 17z" fill="#40b040"/></svg><svg style="left:12px;top:545px" width="24" height="26" viewBox="0 0 24 26"><circle cx="12" cy="13" r="10.5" fill="#e8eef8" stroke="#4a5a78" stroke-width="1.5"/><path d="M12 6 V13 H18" stroke="#000" stroke-width="1.6" fill="none"/></svg><svg style="left:13px;top:588px" width="22" height="26" viewBox="0 0 22 26"><path d="M1 4 L7 1 L7 22 L1 25z" fill="#fff" stroke="#707070"/><rect x="8" y="5" width="13" height="15" fill="#fff" stroke="#707070"/><circle cx="11" cy="8" r="1.6" fill="#e02020"/><circle cx="11" cy="12" r="1.6" fill="#20a020"/><circle cx="11" cy="16" r="1.6" fill="#e02020"/><path d="M14 8h5M14 12h5M14 16h5" stroke="#303030"/></svg><svg style="left:12px;top:628px" width="24" height="28" viewBox="0 0 24 28"><defs><linearGradient id="rbw" x1="0" y1="0" x2="0" y2="1"><stop offset="0" stop-color="#ff2020"/><stop offset="0.3" stop-color="#ffe020"/><stop offset="0.55" stop-color="#20e040"/><stop offset="0.8" stop-color="#20a0ff"/><stop offset="1" stop-color="#2020e0"/></linearGradient></defs><rect x="2" y="2" width="7" height="22" fill="url(#rbw)"/><path d="M10 6 L20 21" stroke="#000" stroke-width="3"/><path d="M9 3 L12 7" stroke="#fff" stroke-width="2"/></svg><svg style="left:12px;top:672px" width="24" height="28" viewBox="0 0 24 28"><path d="M3 2 L8 5 L8 24 L4 22z" fill="#3080e0"/><path d="M8 6 L22 4 L22 10 L8 12z" fill="none" stroke="#3080e0" stroke-width="1.5"/><path d="M8 10 L21 9" stroke="#3080e0"/><path d="M10 5 L20 20" stroke="#000" stroke-width="3"/><path d="M1 24 L8 24" stroke="#f0c020" stroke-width="2"/></svg><svg style="left:12px;top:714px" width="24" height="28" viewBox="0 0 24 28"><circle cx="16" cy="8" r="4.5" fill="#f0c070" stroke="#806020"/><path d="M9 22 Q10 13 16 13 Q22 13 23 22z" fill="#30a040"/><circle cx="8" cy="13" r="4.5" fill="#705030"/><circle cx="8" cy="14" r="3.5" fill="#f0c0a0"/><path d="M1 27 Q2 18 8 18 Q14 18 15 27z" fill="#9060d0"/></svg><svg style="left:13px;top:755px" width="22" height="28" viewBox="0 0 22 28"><path d="M1 5 L7 2 L7 24 L1 27z" fill="#fff" stroke="#707070"/><rect x="8" y="5" width="13" height="15" fill="#fff" stroke="#707070"/><rect x="9" y="7" width="11" height="9" fill="#e03020"/><path d="M11 9h7v5h-7z" fill="#60a8f0"/><rect x="9" y="16" width="11" height="3" fill="#f0a040"/></svg>
<div style="left:37px;top:234px;width:192px;height:588px;background:#ebebed"></div><div style="left:228px;top:234px;width:1px;height:588px;background:#9a9a9a"></div><svg style="left:51px;top:244px" width="13" height="12" viewBox="0 0 13 12"><ellipse cx="7.5" cy="5" rx="4.5" ry="3.5" fill="#e8e040" stroke="#000"/><path d="M1 11 L5 7" stroke="#000" stroke-width="1.2"/></svg><svg style="left:74px;top:241px" width="73" height="28"><path fill="#000" d="M30 4h8v1h-8zM22 4h2v1h-2zM9 4h5v1h-5zM43 4h2v1h-2zM55 4h10v1h-10zM18 4h2v1h-2zM48 4h2v1h-2zM5 4h2v1h-2zM2 5h9v1h-9zM42 5h5v1h-5zM18 5h6v1h-6zM49 5h2v1h-2zM30 5h2v1h-2zM36 5h2v1h-2zM55 5h2v2h-2zM58 5h4v2h-4zM63 5h2v2h-2zM12 5h2v2h-2zM7 6h4v1h-4zM20 6h4v1h-4zM30 6h10v1h-10zM42 6h2v1h-2zM17 6h2v1h-2zM3 6h2v1h-2zM45 6h8v1h-8zM4 7h4v1h-4zM17 7h9v1h-9zM38 7h2v1h-2zM42 7h5v1h-5zM55 7h10v1h-10zM30 7h2v1h-2zM9 7h4v1h-4zM42 8h9v1h-9zM2 8h10v1h-10zM59 8h2v1h-2zM31 8h9v1h-9zM62 8h2v1h-2zM16 8h4v1h-4zM22 8h2v2h-2zM15 9h4v1h-4zM41 9h10v1h-10zM54 9h12v1h-12zM35 9h2v1h-2zM9 9h4v1h-4zM3 10h8v1h-8zM17 10h10v1h-10zM45 10h6v1h-6zM42 10h2v1h-2zM28 10h12v1h-12zM61 10h2v1h-2zM57 10h2v1h-2zM12 10h2v2h-2zM7 11h4v1h-4zM42 11h9v1h-9zM54 11h12v1h-12zM31 11h2v1h-2zM3 11h2v2h-2zM7 12h7v1h-7zM42 12h11v1h-11zM35 11h2v3h-2zM55 12h2v2h-2zM58 12h4v2h-4zM63 12h2v2h-2zM32 12h2v2h-2zM3 13h10v1h-10zM42 13h2v1h-2zM45 13h8v1h-8zM22 11h2v4h-2zM17 11h2v4h-2zM7 14h4v1h-4zM41 14h2v1h-2zM34 14h3v1h-3zM55 14h10v1h-10zM3 14h2v1h-2zM49 14h4v1h-4zM44 14h4v1h-4z"/></svg><div style="left:46px;top:265px;width:172px;height:540px;background:#f6f6f6;border:1px solid #8a8a8a;box-sizing:border-box"></div><div style="left:47px;top:266px;width:153px;height:17px;background:linear-gradient(#f4f4f4,#d8d8d8);border-bottom:1px solid #b8b8b8;box-sizing:border-box"></div><div style="left:200px;top:266px;width:17px;height:17px;background:linear-gradient(#c8c8c8,#a8a8a8)"></div><svg style="left:52px;top:265px" width="32" height="28"><path fill="#000" d="M17 4h2v1h-2zM5 4h1v1h-1zM20 4h1v2h-1zM14 5h3v1h-3zM5 5h7v1h-7zM19 6h6v1h-6zM10 6h1v1h-1zM5 6h1v1h-1zM16 6h1v1h-1zM24 7h1v1h-1zM6 7h1v1h-1zM9 7h1v1h-1zM4 7h1v1h-1zM14 7h5v1h-5zM3 8h1v1h-1zM7 8h2v1h-2zM16 8h1v1h-1zM7 9h1v1h-1zM15 9h3v1h-3zM23 9h1v2h-1zM19 9h1v2h-1zM5 10h7v1h-7zM15 10h2v1h-2zM2 11h4v1h-4zM18 11h1v1h-1zM14 11h1v1h-1zM16 11h1v1h-1zM24 11h1v2h-1zM16 12h2v1h-2zM21 7h1v7h-1zM11 11h1v3h-1zM5 12h1v2h-1zM16 13h1v2h-1zM20 14h2v1h-2zM5 14h7v1h-7z"/></svg><svg style="left:91px;top:269px" width="13" height="8" viewBox="0 0 13 8"><path d="M1 7 L6.5 1 L12 7z" fill="#000"/></svg><div style="left:47px;top:283px;width:153px;height:20px;background:#f2f2f2;border-bottom:1px solid #e2e2e2;box-sizing:border-box"></div><div style="left:47px;top:303px;width:153px;height:20px;background:#ffffff;border-bottom:1px solid #e2e2e2;box-sizing:border-box"></div><div style="left:47px;top:323px;width:153px;height:20px;background:#f2f2f2;border-bottom:1px solid #e2e2e2;box-sizing:border-box"></div><div style="left:47px;top:343px;width:153px;height:20px;background:#ffffff;border-bottom:1px solid #e2e2e2;box-sizing:border-box"></div><div style="left:47px;top:363px;width:153px;height:20px;background:#f2f2f2;border-bottom:1px solid #e2e2e2;box-sizing:border-box"></div><div style="left:47px;top:383px;width:153px;height:20px;background:#ffffff;border-bottom:1px solid #e2e2e2;box-sizing:border-box"></div><div style="left:47px;top:403px;width:153px;height:20px;background:#f2f2f2;border-bottom:1px solid #e2e2e2;box-sizing:border-box"></div><div style="left:47px;top:423px;width:153px;height:20px;background:#ffffff;border-bottom:1px solid #e2e2e2;box-sizing:border-box"></div><div style="left:47px;top:443px;width:153px;height:20px;background:#f2f2f2;border-bottom:1px solid #e2e2e2;box-sizing:border-box"></div><div style="left:47px;top:463px;width:153px;height:20px;background:#ffffff;border-bottom:1px solid #e2e2e2;box-sizing:border-box"></div><div style="left:47px;top:483px;width:153px;height:20px;background:#f2f2f2;border-bottom:1px solid #e2e2e2;box-sizing:border-box"></div><div style="left:47px;top:503px;width:153px;height:20px;background:#ffffff;border-bottom:1px solid #e2e2e2;box-sizing:border-box"></div><div style="left:47px;top:523px;width:153px;height:20px;background:#f2f2f2;border-bottom:1px solid #e2e2e2;box-sizing:border-box"></div><div style="left:47px;top:543px;width:153px;height:20px;background:#ffffff;border-bottom:1px solid #e2e2e2;box-sizing:border-box"></div><div style="left:47px;top:563px;width:153px;height:20px;background:#f2f2f2;border-bottom:1px solid #e2e2e2;box-sizing:border-box"></div><div style="left:47px;top:583px;width:153px;height:20px;background:#ffffff;border-bottom:1px solid #e2e2e2;box-sizing:border-box"></div><div style="left:47px;top:603px;width:153px;height:20px;background:#f2f2f2;border-bottom:1px solid #e2e2e2;box-sizing:border-box"></div><div style="left:47px;top:623px;width:153px;height:20px;background:#ffffff;border-bottom:1px solid #e2e2e2;box-sizing:border-box"></div><div style="left:47px;top:643px;width:153px;height:20px;background:#f2f2f2;border-bottom:1px solid #e2e2e2;box-sizing:border-box"></div><div style="left:47px;top:663px;width:153px;height:20px;background:#ffffff;border-bottom:1px solid #e2e2e2;box-sizing:border-box"></div><div style="left:47px;top:683px;width:153px;height:20px;background:#f2f2f2;border-bottom:1px solid #e2e2e2;box-sizing:border-box"></div><div style="left:47px;top:703px;width:153px;height:20px;background:#ffffff;border-bottom:1px solid #e2e2e2;box-sizing:border-box"></div><div style="left:47px;top:723px;width:153px;height:20px;background:#f2f2f2;border-bottom:1px solid #e2e2e2;box-sizing:border-box"></div><div style="left:47px;top:743px;width:153px;height:20px;background:#ffffff;border-bottom:1px solid #e2e2e2;box-sizing:border-box"></div><div style="left:47px;top:763px;width:153px;height:20px;background:#f2f2f2;border-bottom:1px solid #e2e2e2;box-sizing:border-box"></div><div style="left:47px;top:783px;width:153px;height:6px;background:#ffffff;border-bottom:1px solid #e2e2e2;box-sizing:border-box"></div><svg style="left:47px;top:283px" width="153" height="506" viewBox="0 0 153 506"><rect x="10" y="15" width="1" height="1" fill="#808080"/><rect x="10" y="17" width="1" height="1" fill="#808080"/><rect x="10" y="19" width="1" height="1" fill="#808080"/><rect x="10" y="21" width="1" height="1" fill="#808080"/><rect x="10" y="23" width="1" height="1" fill="#808080"/><rect x="10" y="25" width="1" height="1" fill="#808080"/><rect x="10" y="27" width="1" height="1" fill="#808080"/><rect x="10" y="29" width="1" height="1" fill="#808080"/><rect x="10" y="31" width="1" height="1" fill="#808080"/><rect x="10" y="33" width="1" height="1" fill="#808080"/><rect x="10" y="35" width="1" height="1" fill="#808080"/><rect x="10" y="37" width="1" height="1" fill="#808080"/><rect x="10" y="39" width="1" height="1" fill="#808080"/><rect x="10" y="41" width="1" height="1" fill="#808080"/><rect x="10" y="43" width="1" height="1" fill="#808080"/><rect x="10" y="45" width="1" height="1" fill="#808080"/><rect x="10" y="47" width="1" height="1" fill="#808080"/><rect x="10" y="49" width="1" height="1" fill="#808080"/><rect x="10" y="51" width="1" height="1" fill="#808080"/><rect x="10" y="53" width="1" height="1" fill="#808080"/><rect x="10" y="55" width="1" height="1" fill="#808080"/><rect x="10" y="57" width="1" height="1" fill="#808080"/><rect x="10" y="59" width="1" height="1" fill="#808080"/><rect x="10" y="61" width="1" height="1" fill="#808080"/><rect x="10" y="63" width="1" height="1" fill="#808080"/><rect x="10" y="65" width="1" height="1" fill="#808080"/><rect x="10" y="67" width="1" height="1" fill="#808080"/><rect x="10" y="69" width="1" height="1" fill="#808080"/><rect x="15" y="10" width="1" height="1" fill="#808080"/><rect x="17" y="10" width="1" height="1" fill="#808080"/><rect x="15" y="30" width="1" height="1" fill="#808080"/><rect x="17" y="30" width="1" height="1" fill="#808080"/><rect x="15" y="50" width="1" height="1" fill="#808080"/><rect x="17" y="50" width="1" height="1" fill="#808080"/><rect x="15" y="70" width="1" height="1" fill="#808080"/><rect x="17" y="70" width="1" height="1" fill="#808080"/><rect x="30" y="80" width="1" height="1" fill="#808080"/><rect x="30" y="82" width="1" height="1" fill="#808080"/><rect x="30" y="84" width="1" height="1" fill="#808080"/><rect x="30" y="86" width="1" height="1" fill="#808080"/><rect x="30" y="88" width="1" height="1" fill="#808080"/><rect x="30" y="90" width="1" height="1" fill="#808080"/><rect x="30" y="92" width="1" height="1" fill="#808080"/><rect x="30" y="94" width="1" height="1" fill="#808080"/><rect x="30" y="96" width="1" height="1" fill="#808080"/><rect x="30" y="98" width="1" height="1" fill="#808080"/><rect x="30" y="100" width="1" height="1" fill="#808080"/><rect x="30" y="102" width="1" height="1" fill="#808080"/><rect x="30" y="104" width="1" height="1" fill="#808080"/><rect x="30" y="106" width="1" height="1" fill="#808080"/><rect x="30" y="108" width="1" height="1" fill="#808080"/><rect x="30" y="110" width="1" height="1" fill="#808080"/><rect x="30" y="112" width="1" height="1" fill="#808080"/><rect x="30" y="114" width="1" height="1" fill="#808080"/><rect x="30" y="116" width="1" height="1" fill="#808080"/><rect x="30" y="118" width="1" height="1" fill="#808080"/><rect x="30" y="120" width="1" height="1" fill="#808080"/><rect x="30" y="122" width="1" height="1" fill="#808080"/><rect x="30" y="124" width="1" height="1" fill="#808080"/><rect x="30" y="126" width="1" height="1" fill="#808080"/><rect x="30" y="128" width="1" height="1" fill="#808080"/><rect x="30" y="130" width="1" height="1" fill="#808080"/><rect x="30" y="132" width="1" height="1" fill="#808080"/><rect x="30" y="134" width="1" height="1" fill="#808080"/><rect x="30" y="136" width="1" height="1" fill="#808080"/><rect x="30" y="138" width="1" height="1" fill="#808080"/><rect x="30" y="140" width="1" height="1" fill="#808080"/><rect x="30" y="142" width="1" height="1" fill="#808080"/><rect x="30" y="144" width="1" height="1" fill="#808080"/><rect x="30" y="146" width="1" height="1" fill="#808080"/><rect x="30" y="148" width="1" height="1" fill="#808080"/><rect x="30" y="150" width="1" height="1" fill="#808080"/><rect x="30" y="152" width="1" height="1" fill="#808080"/><rect x="30" y="154" width="1" height="1" fill="#808080"/><rect x="30" y="156" width="1" height="1" fill="#808080"/><rect x="30" y="158" width="1" height="1" fill="#808080"/><rect x="30" y="160" width="1" height="1" fill="#808080"/><rect x="30" y="162" width="1" height="1" fill="#808080"/><rect x="30" y="164" width="1" height="1" fill="#808080"/><rect x="30" y="166" width="1" height="1" fill="#808080"/><rect x="30" y="168" width="1" height="1" fill="#808080"/><rect x="30" y="170" width="1" height="1" fill="#808080"/><rect x="30" y="172" width="1" height="1" fill="#808080"/><rect x="30" y="174" width="1" height="1" fill="#808080"/><rect x="30" y="176" width="1" height="1" fill="#808080"/><rect x="30" y="178" width="1" height="1" fill="#808080"/><rect x="30" y="180" width="1" height="1" fill="#808080"/><rect x="30" y="182" width="1" height="1" fill="#808080"/><rect x="30" y="184" width="1" height="1" fill="#808080"/><rect x="30" y="186" width="1" height="1" fill="#808080"/><rect x="30" y="188" width="1" height="1" fill="#808080"/><rect x="30" y="190" width="1" height="1" fill="#808080"/><rect x="30" y="192" width="1" height="1" fill="#808080"/><rect x="30" y="194" width="1" height="1" fill="#808080"/><rect x="30" y="196" width="1" height="1" fill="#808080"/><rect x="30" y="198" width="1" height="1" fill="#808080"/><rect x="30" y="200" width="1" height="1" fill="#808080"/><rect x="30" y="202" width="1" height="1" fill="#808080"/><rect x="30" y="204" width="1" height="1" fill="#808080"/><rect x="30" y="206" width="1" height="1" fill="#808080"/><rect x="30" y="208" width="1" height="1" fill="#808080"/><rect x="30" y="210" width="1" height="1" fill="#808080"/><rect x="30" y="212" width="1" height="1" fill="#808080"/><rect x="30" y="214" width="1" height="1" fill="#808080"/><rect x="30" y="216" width="1" height="1" fill="#808080"/><rect x="30" y="218" width="1" height="1" fill="#808080"/><rect x="30" y="220" width="1" height="1" fill="#808080"/><rect x="30" y="222" width="1" height="1" fill="#808080"/><rect x="30" y="224" width="1" height="1" fill="#808080"/><rect x="30" y="226" width="1" height="1" fill="#808080"/><rect x="30" y="228" width="1" height="1" fill="#808080"/><rect x="30" y="230" width="1" height="1" fill="#808080"/><rect x="30" y="232" width="1" height="1" fill="#808080"/><rect x="30" y="234" width="1" height="1" fill="#808080"/><rect x="30" y="236" width="1" height="1" fill="#808080"/><rect x="30" y="238" width="1" height="1" fill="#808080"/><rect x="30" y="240" width="1" height="1" fill="#808080"/><rect x="30" y="242" width="1" height="1" fill="#808080"/><rect x="30" y="244" width="1" height="1" fill="#808080"/><rect x="30" y="246" width="1" height="1" fill="#808080"/><rect x="30" y="248" width="1" height="1" fill="#808080"/><rect x="30" y="250" width="1" height="1" fill="#808080"/><rect x="30" y="252" width="1" height="1" fill="#808080"/><rect x="30" y="254" width="1" height="1" fill="#808080"/><rect x="30" y="256" width="1" height="1" fill="#808080"/><rect x="30" y="258" width="1" height="1" fill="#808080"/><rect x="30" y="260" width="1" height="1" fill="#808080"/><rect x="30" y="262" width="1" height="1" fill="#808080"/><rect x="30" y="264" width="1" height="1" fill="#808080"/><rect x="30" y="266" width="1" height="1" fill="#808080"/><rect x="30" y="268" width="1" height="1" fill="#808080"/><rect x="30" y="270" width="1" height="1" fill="#808080"/><rect x="30" y="272" width="1" height="1" fill="#808080"/><rect x="30" y="274" width="1" height="1" fill="#808080"/><rect x="30" y="276" width="1" height="1" fill="#808080"/><rect x="30" y="278" width="1" height="1" fill="#808080"/><rect x="30" y="280" width="1" height="1" fill="#808080"/><rect x="30" y="282" width="1" height="1" fill="#808080"/><rect x="30" y="284" width="1" height="1" fill="#808080"/><rect x="30" y="286" width="1" height="1" fill="#808080"/><rect x="30" y="288" width="1" height="1" fill="#808080"/><rect x="30" y="290" width="1" height="1" fill="#808080"/><rect x="30" y="292" width="1" height="1" fill="#808080"/><rect x="30" y="294" width="1" height="1" fill="#808080"/><rect x="30" y="296" width="1" height="1" fill="#808080"/><rect x="30" y="298" width="1" height="1" fill="#808080"/><rect x="30" y="300" width="1" height="1" fill="#808080"/><rect x="30" y="302" width="1" height="1" fill="#808080"/><rect x="30" y="304" width="1" height="1" fill="#808080"/><rect x="30" y="306" width="1" height="1" fill="#808080"/><rect x="30" y="308" width="1" height="1" fill="#808080"/><rect x="30" y="310" width="1" height="1" fill="#808080"/><rect x="30" y="312" width="1" height="1" fill="#808080"/><rect x="30" y="314" width="1" height="1" fill="#808080"/><rect x="30" y="316" width="1" height="1" fill="#808080"/><rect x="30" y="318" width="1" height="1" fill="#808080"/><rect x="30" y="320" width="1" height="1" fill="#808080"/><rect x="30" y="322" width="1" height="1" fill="#808080"/><rect x="30" y="324" width="1" height="1" fill="#808080"/><rect x="30" y="326" width="1" height="1" fill="#808080"/><rect x="30" y="328" width="1" height="1" fill="#808080"/><rect x="30" y="330" width="1" height="1" fill="#808080"/><rect x="30" y="332" width="1" height="1" fill="#808080"/><rect x="30" y="334" width="1" height="1" fill="#808080"/><rect x="30" y="336" width="1" height="1" fill="#808080"/><rect x="30" y="338" width="1" height="1" fill="#808080"/><rect x="30" y="340" width="1" height="1" fill="#808080"/><rect x="30" y="342" width="1" height="1" fill="#808080"/><rect x="30" y="344" width="1" height="1" fill="#808080"/><rect x="30" y="346" width="1" height="1" fill="#808080"/><rect x="30" y="348" width="1" height="1" fill="#808080"/><rect x="30" y="350" width="1" height="1" fill="#808080"/><rect x="30" y="352" width="1" height="1" fill="#808080"/><rect x="30" y="354" width="1" height="1" fill="#808080"/><rect x="30" y="356" width="1" height="1" fill="#808080"/><rect x="30" y="358" width="1" height="1" fill="#808080"/><rect x="30" y="360" width="1" height="1" fill="#808080"/><rect x="30" y="362" width="1" height="1" fill="#808080"/><rect x="30" y="364" width="1" height="1" fill="#808080"/><rect x="30" y="366" width="1" height="1" fill="#808080"/><rect x="30" y="368" width="1" height="1" fill="#808080"/><rect x="30" y="370" width="1" height="1" fill="#808080"/><rect x="30" y="372" width="1" height="1" fill="#808080"/><rect x="30" y="374" width="1" height="1" fill="#808080"/><rect x="30" y="376" width="1" height="1" fill="#808080"/><rect x="30" y="378" width="1" height="1" fill="#808080"/><rect x="30" y="380" width="1" height="1" fill="#808080"/><rect x="30" y="382" width="1" height="1" fill="#808080"/><rect x="30" y="384" width="1" height="1" fill="#808080"/><rect x="30" y="386" width="1" height="1" fill="#808080"/><rect x="30" y="388" width="1" height="1" fill="#808080"/><rect x="30" y="390" width="1" height="1" fill="#808080"/><rect x="30" y="392" width="1" height="1" fill="#808080"/><rect x="30" y="394" width="1" height="1" fill="#808080"/><rect x="30" y="396" width="1" height="1" fill="#808080"/><rect x="30" y="398" width="1" height="1" fill="#808080"/><rect x="30" y="400" width="1" height="1" fill="#808080"/><rect x="30" y="402" width="1" height="1" fill="#808080"/><rect x="30" y="404" width="1" height="1" fill="#808080"/><rect x="30" y="406" width="1" height="1" fill="#808080"/><rect x="30" y="408" width="1" height="1" fill="#808080"/><rect x="30" y="410" width="1" height="1" fill="#808080"/><rect x="30" y="412" width="1" height="1" fill="#808080"/><rect x="30" y="414" width="1" height="1" fill="#808080"/><rect x="30" y="416" width="1" height="1" fill="#808080"/><rect x="30" y="418" width="1" height="1" fill="#808080"/><rect x="30" y="420" width="1" height="1" fill="#808080"/><rect x="30" y="422" width="1" height="1" fill="#808080"/><rect x="30" y="424" width="1" height="1" fill="#808080"/><rect x="30" y="426" width="1" height="1" fill="#808080"/><rect x="30" y="428" width="1" height="1" fill="#808080"/><rect x="30" y="430" width="1" height="1" fill="#808080"/><rect x="30" y="432" width="1" height="1" fill="#808080"/><rect x="30" y="434" width="1" height="1" fill="#808080"/><rect x="30" y="436" width="1" height="1" fill="#808080"/><rect x="30" y="438" width="1" height="1" fill="#808080"/><rect x="30" y="440" width="1" height="1" fill="#808080"/><rect x="30" y="442" width="1" height="1" fill="#808080"/><rect x="30" y="444" width="1" height="1" fill="#808080"/><rect x="30" y="446" width="1" height="1" fill="#808080"/><rect x="30" y="448" width="1" height="1" fill="#808080"/><rect x="30" y="450" width="1" height="1" fill="#808080"/><rect x="30" y="452" width="1" height="1" fill="#808080"/><rect x="30" y="454" width="1" height="1" fill="#808080"/><rect x="30" y="456" width="1" height="1" fill="#808080"/><rect x="30" y="458" width="1" height="1" fill="#808080"/><rect x="30" y="460" width="1" height="1" fill="#808080"/><rect x="30" y="462" width="1" height="1" fill="#808080"/><rect x="30" y="464" width="1" height="1" fill="#808080"/><rect x="30" y="466" width="1" height="1" fill="#808080"/><rect x="30" y="468" width="1" height="1" fill="#808080"/><rect x="30" y="470" width="1" height="1" fill="#808080"/><rect x="30" y="472" width="1" height="1" fill="#808080"/><rect x="30" y="474" width="1" height="1" fill="#808080"/><rect x="30" y="476" width="1" height="1" fill="#808080"/><rect x="30" y="478" width="1" height="1" fill="#808080"/><rect x="30" y="480" width="1" height="1" fill="#808080"/><rect x="30" y="482" width="1" height="1" fill="#808080"/><rect x="30" y="484" width="1" height="1" fill="#808080"/><rect x="30" y="486" width="1" height="1" fill="#808080"/><rect x="30" y="488" width="1" height="1" fill="#808080"/><rect x="30" y="490" width="1" height="1" fill="#808080"/><rect x="30" y="492" width="1" height="1" fill="#808080"/><rect x="30" y="494" width="1" height="1" fill="#808080"/><rect x="30" y="496" width="1" height="1" fill="#808080"/><rect x="30" y="498" width="1" height="1" fill="#808080"/><rect x="30" y="500" width="1" height="1" fill="#808080"/><rect x="30" y="502" width="1" height="1" fill="#808080"/><rect x="30" y="504" width="1" height="1" fill="#808080"/><rect x="31" y="90" width="1" height="1" fill="#808080"/><rect x="33" y="90" width="1" height="1" fill="#808080"/><rect x="35" y="90" width="1" height="1" fill="#808080"/><rect x="37" y="90" width="1" height="1" fill="#808080"/><rect x="39" y="90" width="1" height="1" fill="#808080"/><rect x="31" y="110" width="1" height="1" fill="#808080"/><rect x="33" y="110" width="1" height="1" fill="#808080"/><rect x="35" y="110" width="1" height="1" fill="#808080"/><rect x="37" y="110" width="1" height="1" fill="#808080"/><rect x="39" y="110" width="1" height="1" fill="#808080"/><rect x="31" y="130" width="1" height="1" fill="#808080"/><rect x="33" y="130" width="1" height="1" fill="#808080"/><rect x="35" y="130" width="1" height="1" fill="#808080"/><rect x="37" y="130" width="1" height="1" fill="#808080"/><rect x="39" y="130" width="1" height="1" fill="#808080"/><rect x="31" y="150" width="1" height="1" fill="#808080"/><rect x="33" y="150" width="1" height="1" fill="#808080"/><rect x="35" y="150" width="1" height="1" fill="#808080"/><rect x="37" y="150" width="1" height="1" fill="#808080"/><rect x="39" y="150" width="1" height="1" fill="#808080"/><rect x="31" y="170" width="1" height="1" fill="#808080"/><rect x="33" y="170" width="1" height="1" fill="#808080"/><rect x="35" y="170" width="1" height="1" fill="#808080"/><rect x="37" y="170" width="1" height="1" fill="#808080"/><rect x="39" y="170" width="1" height="1" fill="#808080"/><rect x="31" y="190" width="1" height="1" fill="#808080"/><rect x="33" y="190" width="1" height="1" fill="#808080"/><rect x="35" y="190" width="1" height="1" fill="#808080"/><rect x="37" y="190" width="1" height="1" fill="#808080"/><rect x="39" y="190" width="1" height="1" fill="#808080"/><rect x="31" y="210" width="1" height="1" fill="#808080"/><rect x="33" y="210" width="1" height="1" fill="#808080"/><rect x="35" y="210" width="1" height="1" fill="#808080"/><rect x="37" y="210" width="1" height="1" fill="#808080"/><rect x="39" y="210" width="1" height="1" fill="#808080"/><rect x="31" y="230" width="1" height="1" fill="#808080"/><rect x="33" y="230" width="1" height="1" fill="#808080"/><rect x="35" y="230" width="1" height="1" fill="#808080"/><rect x="37" y="230" width="1" height="1" fill="#808080"/><rect x="39" y="230" width="1" height="1" fill="#808080"/><rect x="31" y="250" width="1" height="1" fill="#808080"/><rect x="33" y="250" width="1" height="1" fill="#808080"/><rect x="35" y="250" width="1" height="1" fill="#808080"/><rect x="37" y="250" width="1" height="1" fill="#808080"/><rect x="39" y="250" width="1" height="1" fill="#808080"/><rect x="31" y="270" width="1" height="1" fill="#808080"/><rect x="33" y="270" width="1" height="1" fill="#808080"/><rect x="35" y="270" width="1" height="1" fill="#808080"/><rect x="37" y="270" width="1" height="1" fill="#808080"/><rect x="39" y="270" width="1" height="1" fill="#808080"/><rect x="31" y="290" width="1" height="1" fill="#808080"/><rect x="33" y="290" width="1" height="1" fill="#808080"/><rect x="35" y="290" width="1" height="1" fill="#808080"/><rect x="37" y="290" width="1" height="1" fill="#808080"/><rect x="39" y="290" width="1" height="1" fill="#808080"/><rect x="31" y="310" width="1" height="1" fill="#808080"/><rect x="33" y="310" width="1" height="1" fill="#808080"/><rect x="35" y="310" width="1" height="1" fill="#808080"/><rect x="37" y="310" width="1" height="1" fill="#808080"/><rect x="39" y="310" width="1" height="1" fill="#808080"/><rect x="31" y="330" width="1" height="1" fill="#808080"/><rect x="33" y="330" width="1" height="1" fill="#808080"/><rect x="35" y="330" width="1" height="1" fill="#808080"/><rect x="37" y="330" width="1" height="1" fill="#808080"/><rect x="39" y="330" width="1" height="1" fill="#808080"/><rect x="31" y="350" width="1" height="1" fill="#808080"/><rect x="33" y="350" width="1" height="1" fill="#808080"/><rect x="35" y="350" width="1" height="1" fill="#808080"/><rect x="37" y="350" width="1" height="1" fill="#808080"/><rect x="39" y="350" width="1" height="1" fill="#808080"/><rect x="31" y="370" width="1" height="1" fill="#808080"/><rect x="33" y="370" width="1" height="1" fill="#808080"/><rect x="35" y="370" width="1" height="1" fill="#808080"/><rect x="37" y="370" width="1" height="1" fill="#808080"/><rect x="39" y="370" width="1" height="1" fill="#808080"/><rect x="31" y="390" width="1" height="1" fill="#808080"/><rect x="33" y="390" width="1" height="1" fill="#808080"/><rect x="35" y="390" width="1" height="1" fill="#808080"/><rect x="37" y="390" width="1" height="1" fill="#808080"/><rect x="39" y="390" width="1" height="1" fill="#808080"/><rect x="31" y="410" width="1" height="1" fill="#808080"/><rect x="33" y="410" width="1" height="1" fill="#808080"/><rect x="35" y="410" width="1" height="1" fill="#808080"/><rect x="37" y="410" width="1" height="1" fill="#808080"/><rect x="39" y="410" width="1" height="1" fill="#808080"/><rect x="31" y="430" width="1" height="1" fill="#808080"/><rect x="33" y="430" width="1" height="1" fill="#808080"/><rect x="35" y="430" width="1" height="1" fill="#808080"/><rect x="37" y="430" width="1" height="1" fill="#808080"/><rect x="39" y="430" width="1" height="1" fill="#808080"/><rect x="31" y="450" width="1" height="1" fill="#808080"/><rect x="33" y="450" width="1" height="1" fill="#808080"/><rect x="35" y="450" width="1" height="1" fill="#808080"/><rect x="37" y="450" width="1" height="1" fill="#808080"/><rect x="39" y="450" width="1" height="1" fill="#808080"/><rect x="31" y="470" width="1" height="1" fill="#808080"/><rect x="33" y="470" width="1" height="1" fill="#808080"/><rect x="35" y="470" width="1" height="1" fill="#808080"/><rect x="37" y="470" width="1" height="1" fill="#808080"/><rect x="39" y="470" width="1" height="1" fill="#808080"/><rect x="31" y="490" width="1" height="1" fill="#808080"/><rect x="33" y="490" width="1" height="1" fill="#808080"/><rect x="35" y="490" width="1" height="1" fill="#808080"/><rect x="37" y="490" width="1" height="1" fill="#808080"/><rect x="39" y="490" width="1" height="1" fill="#808080"/></svg><svg style="left:52px;top:289px" width="9" height="9" viewBox="0 0 9 9"><rect x="0.5" y="0.5" width="8" height="8" fill="#fff" stroke="#8c8c8c"/><path d="M2 4.5h5" stroke="#000"/><path d="M4.5 2v5" stroke="#000"/></svg><svg style="left:67px;top:285px" width="16" height="16" viewBox="0 0 16 16"><circle cx="7.5" cy="7.5" r="7" fill="#e8eef8" stroke="#5a6a80" stroke-width="1.2"/><path d="M7.5 3 V7.5 H11" stroke="#000" stroke-width="1.3" fill="none"/></svg><svg style="left:83px;top:285px" width="17" height="16" viewBox="0 0 17 16"><rect x="3.5" y="0.5" width="12" height="11" fill="#e0e8ff" stroke="#4050a0"/><rect x="0.5" y="3.5" width="12" height="11" fill="#f8f8ff" stroke="#4050a0"/><rect x="7" y="10" width="5" height="4" fill="none" stroke="#4050a0"/></svg><svg style="left:99px;top:284px" width="32" height="28"><path fill="#000" d="M23 4h2v1h-2zM3 4h10v1h-10zM16 4h1v2h-1zM19 5h4v1h-4zM6 5h1v1h-1zM6 6h5v1h-5zM18 6h2v1h-2zM3 5h1v3h-1zM22 6h1v2h-1zM15 6h1v2h-1zM17 7h1v1h-1zM19 7h1v1h-1zM9 7h1v1h-1zM5 7h2v1h-2zM19 8h6v1h-6zM14 8h3v1h-3zM7 8h2v1h-2zM3 8h2v1h-2zM12 5h1v5h-1zM3 9h1v1h-1zM6 9h1v1h-1zM9 9h1v1h-1zM16 9h1v1h-1zM7 10h1v1h-1zM15 10h1v1h-1zM3 10h3v1h-3zM10 10h3v1h-3zM19 9h1v3h-1zM22 9h1v3h-1zM14 11h4v1h-4zM8 11h1v1h-1zM24 11h1v2h-1zM7 12h1v1h-1zM21 12h2v1h-2zM18 12h2v1h-2zM12 11h1v3h-1zM3 11h1v3h-1zM8 13h1v1h-1zM16 13h2v1h-2zM23 13h2v1h-2zM19 13h2v1h-2zM14 14h2v1h-2zM3 14h10v1h-10zM24 14h1v1h-1zM19 14h1v1h-1z"/></svg><svg style="left:52px;top:309px" width="9" height="9" viewBox="0 0 9 9"><rect x="0.5" y="0.5" width="8" height="8" fill="#fff" stroke="#8c8c8c"/><path d="M2 4.5h5" stroke="#000"/><path d="M4.5 2v5" stroke="#000"/></svg><svg style="left:67px;top:306px" width="17" height="15" viewBox="0 0 17 15"><path d="M0.5 3.5 H6 L7.5 5 H13.5 V13.5 H0.5z" fill="#e8b830" stroke="#a07818"/><path d="M0.5 13.5 L3 7 H16 L13.5 13.5z" fill="#ffd860" stroke="#a07818"/></svg><svg style="left:76px;top:305px" width="8" height="4" viewBox="0 0 8 4"><path d="M0 0.5h7M0 2.5h7" stroke="#2030c0"/></svg><svg style="left:84px;top:304px" width="68" height="28"><path fill="#000" d="M58 4h1v1h-1zM19 4h1v1h-1zM39 4h1v1h-1zM31 4h1v1h-1zM3 4h9v1h-9zM20 5h1v1h-1zM27 5h9v1h-9zM59 5h1v1h-1zM45 4h1v3h-1zM56 4h1v3h-1zM11 5h1v2h-1zM7 5h1v2h-1zM40 5h1v2h-1zM3 5h1v2h-1zM31 6h1v1h-1zM16 6h8v1h-8zM28 7h7v1h-7zM3 7h9v1h-9zM50 7h11v1h-11zM42 7h7v1h-7zM23 7h1v2h-1zM16 7h1v2h-1zM31 8h1v1h-1zM38 8h3v1h-3zM11 8h1v2h-1zM7 8h1v2h-1zM45 8h1v2h-1zM3 8h1v2h-1zM26 9h11v1h-11zM51 9h4v1h-4zM16 9h8v1h-8zM56 8h1v3h-1zM44 10h1v1h-1zM35 10h1v1h-1zM30 10h1v1h-1zM46 10h1v1h-1zM3 10h9v1h-9zM32 10h1v2h-1zM47 11h1v1h-1zM29 11h1v1h-1zM34 11h1v1h-1zM43 11h1v1h-1zM40 9h1v4h-1zM53 10h1v3h-1zM16 10h1v3h-1zM57 11h1v2h-1zM3 11h1v2h-1zM33 12h1v1h-1zM48 12h1v1h-1zM28 12h2v1h-2zM42 12h1v1h-1zM11 11h1v3h-1zM60 12h1v2h-1zM58 13h1v1h-1zM29 13h1v1h-1zM34 13h1v1h-1zM41 13h1v1h-1zM31 13h1v1h-1zM15 13h1v1h-1zM39 13h1v1h-1zM53 13h2v1h-2zM26 13h2v1h-2zM7 11h1v4h-1zM2 13h1v2h-1zM38 14h1v1h-1zM14 14h1v1h-1zM50 14h3v1h-3zM59 14h2v1h-2zM29 14h2v1h-2zM35 14h2v1h-2zM42 14h7v1h-7zM10 14h2v1h-2z"/></svg><svg style="left:52px;top:329px" width="9" height="9" viewBox="0 0 9 9"><rect x="0.5" y="0.5" width="8" height="8" fill="#fff" stroke="#8c8c8c"/><path d="M2 4.5h5" stroke="#000"/><path d="M4.5 2v5" stroke="#000"/></svg><svg style="left:67px;top:326px" width="17" height="15" viewBox="0 0 17 15"><path d="M0.5 3.5 H6 L7.5 5 H13.5 V13.5 H0.5z" fill="#e8b830" stroke="#a07818"/><path d="M0.5 13.5 L3 7 H16 L13.5 13.5z" fill="#ffd860" stroke="#a07818"/></svg><svg style="left:84px;top:324px" width="20" height="28"><path fill="#000" d="M4 4h1v2h-1zM7 5h5v1h-5zM3 6h1v2h-1zM7 6h1v2h-1zM11 6h1v2h-1zM5 7h1v1h-1zM2 8h3v1h-3zM7 8h5v1h-5zM4 9h1v1h-1zM11 9h1v2h-1zM7 9h1v2h-1zM3 10h1v1h-1zM2 11h4v1h-4zM7 11h5v1h-5zM11 12h1v2h-1zM7 12h1v2h-1zM4 13h2v1h-2zM6 14h7v1h-7zM2 14h2v1h-2z"/></svg><svg style="left:52px;top:349px" width="9" height="9" viewBox="0 0 9 9"><rect x="0.5" y="0.5" width="8" height="8" fill="#fff" stroke="#8c8c8c"/><path d="M2 4.5h5" stroke="#000"/></svg><svg style="left:67px;top:346px" width="17" height="15" viewBox="0 0 17 15"><path d="M0.5 3.5 H6 L7.5 5 H13.5 V13.5 H0.5z" fill="#e8b830" stroke="#a07818"/><path d="M0.5 13.5 L3 7 H16 L13.5 13.5z" fill="#ffd860" stroke="#a07818"/></svg><svg style="left:84px;top:344px" width="80" height="28"><path fill="#000" d="M8 4h1v1h-1zM10 4h1v1h-1zM51 4h1v1h-1zM28 4h9v1h-9zM64 4h7v1h-7zM15 4h6v1h-6zM43 4h1v2h-1zM4 4h1v2h-1zM52 5h1v1h-1zM70 5h1v1h-1zM55 5h5v1h-5zM6 5h7v1h-7zM18 5h1v2h-1zM21 5h1v2h-1zM16 5h1v2h-1zM2 6h4v1h-4zM8 6h1v1h-1zM10 6h1v1h-1zM64 6h7v1h-7zM39 6h9v1h-9zM32 6h1v2h-1zM70 7h1v1h-1zM14 7h8v1h-8zM7 7h5v1h-5zM4 7h1v1h-1zM59 6h1v3h-1zM47 7h1v2h-1zM43 7h1v2h-1zM39 7h1v2h-1zM11 8h1v1h-1zM7 8h1v1h-1zM30 8h7v1h-7zM4 8h2v1h-2zM50 8h3v1h-3zM62 8h11v1h-11zM21 8h1v1h-1zM23 4h1v6h-1zM18 8h1v2h-1zM16 8h1v2h-1zM64 9h1v1h-1zM55 9h5v1h-5zM71 9h1v1h-1zM6 9h6v1h-6zM39 9h9v1h-9zM67 9h1v1h-1zM32 9h1v2h-1zM3 9h2v2h-2zM11 10h1v1h-1zM22 10h2v1h-2zM7 10h1v1h-1zM40 10h1v1h-1zM65 10h1v1h-1zM15 10h1v1h-1zM18 10h2v1h-2zM67 10h2v1h-2zM70 10h1v1h-1zM28 5h1v7h-1zM43 10h1v2h-1zM55 10h1v2h-1zM69 11h1v1h-1zM2 11h1v1h-1zM19 11h1v1h-1zM41 11h1v1h-1zM6 11h7v1h-7zM66 11h2v1h-2zM52 9h1v4h-1zM31 11h1v2h-1zM16 12h7v1h-7zM70 12h1v1h-1zM42 12h1v1h-1zM54 12h2v1h-2zM9 12h1v1h-1zM64 12h2v1h-2zM36 9h1v5h-1zM27 12h1v2h-1zM60 12h1v2h-1zM67 12h1v2h-1zM19 13h1v1h-1zM8 13h1v1h-1zM30 13h1v1h-1zM10 13h1v1h-1zM41 13h1v1h-1zM55 13h1v1h-1zM71 13h2v1h-2zM62 13h2v1h-2zM52 13h2v1h-2zM43 13h2v1h-2zM4 11h1v4h-1zM45 14h4v1h-4zM6 14h2v1h-2zM52 14h1v1h-1zM26 14h1v1h-1zM29 14h1v1h-1zM38 14h3v1h-3zM11 14h2v1h-2zM66 14h2v1h-2zM34 14h2v1h-2zM56 14h5v1h-5zM14 14h11v1h-11z"/></svg><div style="left:118px;top:363px;width:82px;height:20px;background:#3a92ee;border:1px dotted #e0a040;box-sizing:border-box"></div><svg style="left:88px;top:367px" width="13" height="13" viewBox="0 0 13 13"><rect x="0.5" y="0.5" width="12" height="12" fill="#fff" stroke="#000"/><path d="M2.5 6 L5 9.5 L10.5 2.5" stroke="#10b030" stroke-width="2.4" fill="none"/></svg><svg style="left:102px;top:365px" width="17" height="17" viewBox="0 0 17 17"><path d="M1 12 L8 9 L16 11 L16 15 L9 18 L1 16z" fill="#3868e0"/><path d="M1 12 L8 9 L16 11 L9 14z" fill="#c8e0ff"/><path d="M8 3 L12 2 L12 11 L8 12z" fill="#5080f0"/><path d="M9 4 L11 3.5 L11 10 L9 10.5z" fill="#a8d0ff"/><path d="M9.5 1.5 H15.5 M10 0 V3 M15 0 V3" stroke="#000" stroke-width="1.1"/><path d="M8 4 V9 H10" stroke="#000" stroke-width="1.1" fill="none"/><circle cx="5" cy="5" r="3.8" fill="none" stroke="#e00808" stroke-width="1.7"/><path d="M2.5 7.5 L7.5 2.5" stroke="#e00808" stroke-width="1.7"/></svg><svg style="left:119px;top:364px" width="44" height="28"><path fill="#fff" d="M34 4h1v1h-1zM24 4h1v1h-1zM4 4h1v2h-1zM8 4h1v2h-1zM23 5h1v2h-1zM35 5h1v2h-1zM5 6h7v1h-7zM26 6h3v1h-3zM3 6h1v2h-1zM8 7h1v1h-1zM7 8h3v1h-3zM2 8h2v1h-2zM6 9h1v1h-1zM10 9h1v1h-1zM3 9h1v2h-1zM11 10h1v1h-1zM5 10h1v1h-1zM22 7h1v5h-1zM36 7h1v5h-1zM8 9h1v3h-1zM12 11h1v1h-1zM3 11h2v1h-2zM29 7h1v6h-1zM25 7h1v6h-1zM6 12h5v1h-5zM23 12h1v2h-1zM35 12h1v2h-1zM26 13h3v1h-3zM3 12h1v3h-1zM8 13h1v2h-1zM34 14h1v1h-1zM24 14h1v1h-1z"/></svg><svg style="left:88px;top:387px" width="13" height="13" viewBox="0 0 13 13"><rect x="0.5" y="0.5" width="12" height="12" fill="#fff" stroke="#000"/><path d="M2.5 6 L5 9.5 L10.5 2.5" stroke="#10b030" stroke-width="2.4" fill="none"/></svg><svg style="left:102px;top:385px" width="17" height="17" viewBox="0 0 17 17"><path d="M1 12 L8 9 L16 11 L16 15 L9 18 L1 16z" fill="#3868e0"/><path d="M1 12 L8 9 L16 11 L9 14z" fill="#c8e0ff"/><path d="M8 3 L12 2 L12 11 L8 12z" fill="#5080f0"/><path d="M9 4 L11 3.5 L11 10 L9 10.5z" fill="#a8d0ff"/><path d="M9.5 1.5 H15.5 M10 0 V3 M15 0 V3" stroke="#000" stroke-width="1.1"/><path d="M8 4 V9 H10" stroke="#000" stroke-width="1.1" fill="none"/><circle cx="5" cy="5" r="3.8" fill="none" stroke="#e00808" stroke-width="1.7"/><path d="M2.5 7.5 L7.5 2.5" stroke="#e00808" stroke-width="1.7"/></svg><svg style="left:119px;top:384px" width="44" height="28"><path fill="#000" d="M34 4h1v1h-1zM24 4h1v1h-1zM4 4h1v2h-1zM8 4h1v2h-1zM23 5h1v2h-1zM35 5h1v2h-1zM25 6h3v1h-3zM5 6h7v1h-7zM3 6h1v2h-1zM8 7h1v1h-1zM7 8h3v1h-3zM2 8h2v1h-2zM6 9h1v1h-1zM10 9h1v1h-1zM3 9h1v2h-1zM11 10h1v1h-1zM5 10h1v1h-1zM36 7h1v5h-1zM22 7h1v5h-1zM8 9h1v3h-1zM12 11h1v1h-1zM3 11h2v1h-2zM27 7h1v6h-1zM6 12h5v1h-5zM23 12h1v2h-1zM35 12h1v2h-1zM25 13h5v1h-5zM3 12h1v3h-1zM8 13h1v2h-1zM34 14h1v1h-1zM24 14h1v1h-1z"/></svg><svg style="left:88px;top:407px" width="13" height="13" viewBox="0 0 13 13"><rect x="0.5" y="0.5" width="12" height="12" fill="#fff" stroke="#000"/><path d="M2.5 6 L5 9.5 L10.5 2.5" stroke="#10b030" stroke-width="2.4" fill="none"/></svg><svg style="left:102px;top:405px" width="17" height="17" viewBox="0 0 17 17"><path d="M1 12 L8 9 L16 11 L16 15 L9 18 L1 16z" fill="#3868e0"/><path d="M1 12 L8 9 L16 11 L9 14z" fill="#c8e0ff"/><path d="M8 3 L12 2 L12 11 L8 12z" fill="#5080f0"/><path d="M9 4 L11 3.5 L11 10 L9 10.5z" fill="#a8d0ff"/><path d="M9.5 1.5 H15.5 M10 0 V3 M15 0 V3" stroke="#000" stroke-width="1.1"/><path d="M8 4 V9 H10" stroke="#000" stroke-width="1.1" fill="none"/><circle cx="5" cy="5" r="3.8" fill="none" stroke="#e00808" stroke-width="1.7"/><path d="M2.5 7.5 L7.5 2.5" stroke="#e00808" stroke-width="1.7"/></svg><svg style="left:119px;top:404px" width="44" height="28"><path fill="#000" d="M34 4h1v1h-1zM24 4h1v1h-1zM4 4h1v2h-1zM8 4h1v2h-1zM23 5h1v2h-1zM35 5h1v2h-1zM5 6h7v1h-7zM26 6h3v1h-3zM3 6h1v2h-1zM8 7h1v1h-1zM25 7h1v1h-1zM7 8h3v1h-3zM2 8h2v1h-2zM29 7h1v3h-1zM6 9h1v1h-1zM10 9h1v1h-1zM3 9h1v2h-1zM11 10h1v1h-1zM28 10h1v1h-1zM5 10h1v1h-1zM22 7h1v5h-1zM36 7h1v5h-1zM8 9h1v3h-1zM12 11h1v1h-1zM27 11h1v1h-1zM3 11h2v1h-2zM26 12h1v1h-1zM6 12h5v1h-5zM23 12h1v2h-1zM35 12h1v2h-1zM25 13h5v1h-5zM3 12h1v3h-1zM8 13h1v2h-1zM34 14h1v1h-1zM24 14h1v1h-1z"/></svg><svg style="left:88px;top:427px" width="13" height="13" viewBox="0 0 13 13"><rect x="0.5" y="0.5" width="12" height="12" fill="#fff" stroke="#000"/><path d="M2.5 6 L5 9.5 L10.5 2.5" stroke="#10b030" stroke-width="2.4" fill="none"/></svg><svg style="left:102px;top:425px" width="17" height="17" viewBox="0 0 17 17"><path d="M1 12 L8 9 L16 11 L16 15 L9 18 L1 16z" fill="#3868e0"/><path d="M1 12 L8 9 L16 11 L9 14z" fill="#c8e0ff"/><path d="M8 3 L12 2 L12 11 L8 12z" fill="#5080f0"/><path d="M9 4 L11 3.5 L11 10 L9 10.5z" fill="#a8d0ff"/><path d="M9.5 1.5 H15.5 M10 0 V3 M15 0 V3" stroke="#000" stroke-width="1.1"/><path d="M8 4 V9 H10" stroke="#000" stroke-width="1.1" fill="none"/><circle cx="5" cy="5" r="3.8" fill="none" stroke="#e00808" stroke-width="1.7"/><path d="M2.5 7.5 L7.5 2.5" stroke="#e00808" stroke-width="1.7"/></svg><svg style="left:119px;top:424px" width="44" height="28"><path fill="#000" d="M34 4h1v1h-1zM24 4h1v1h-1zM4 4h1v2h-1zM8 4h1v2h-1zM23 5h1v2h-1zM35 5h1v2h-1zM5 6h7v1h-7zM25 6h4v1h-4zM3 6h1v2h-1zM8 7h1v1h-1zM29 7h1v2h-1zM7 8h3v1h-3zM2 8h2v1h-2zM6 9h1v1h-1zM10 9h1v1h-1zM26 9h3v1h-3zM3 9h1v2h-1zM11 10h1v1h-1zM5 10h1v1h-1zM36 7h1v5h-1zM22 7h1v5h-1zM8 9h1v3h-1zM12 11h1v1h-1zM3 11h2v1h-2zM29 10h1v3h-1zM6 12h5v1h-5zM23 12h1v2h-1zM35 12h1v2h-1zM25 13h4v1h-4zM3 12h1v3h-1zM8 13h1v2h-1zM34 14h1v1h-1zM24 14h1v1h-1z"/></svg><svg style="left:88px;top:447px" width="13" height="13" viewBox="0 0 13 13"><rect x="0.5" y="0.5" width="12" height="12" fill="#fff" stroke="#000"/><path d="M2.5 6 L5 9.5 L10.5 2.5" stroke="#10b030" stroke-width="2.4" fill="none"/></svg><svg style="left:102px;top:445px" width="17" height="17" viewBox="0 0 17 17"><path d="M1 12 L8 9 L16 11 L16 15 L9 18 L1 16z" fill="#3868e0"/><path d="M1 12 L8 9 L16 11 L9 14z" fill="#c8e0ff"/><path d="M8 3 L12 2 L12 11 L8 12z" fill="#5080f0"/><path d="M9 4 L11 3.5 L11 10 L9 10.5z" fill="#a8d0ff"/><path d="M9.5 1.5 H15.5 M10 0 V3 M15 0 V3" stroke="#000" stroke-width="1.1"/><path d="M8 4 V9 H10" stroke="#000" stroke-width="1.1" fill="none"/><circle cx="5" cy="5" r="3.8" fill="none" stroke="#e00808" stroke-width="1.7"/><path d="M2.5 7.5 L7.5 2.5" stroke="#e00808" stroke-width="1.7"/></svg><svg style="left:119px;top:444px" width="44" height="28"><path fill="#000" d="M34 4h1v1h-1zM24 4h1v1h-1zM4 4h1v2h-1zM8 4h1v2h-1zM23 5h1v2h-1zM35 5h1v2h-1zM5 6h7v1h-7zM28 6h2v1h-2zM3 6h1v2h-1zM27 7h1v1h-1zM8 7h1v1h-1zM7 8h3v1h-3zM2 8h2v1h-2zM26 8h1v2h-1zM6 9h1v1h-1zM10 9h1v1h-1zM29 7h1v4h-1zM3 9h1v2h-1zM11 10h1v1h-1zM5 10h1v1h-1zM25 10h1v1h-1zM22 7h1v5h-1zM36 7h1v5h-1zM8 9h1v3h-1zM12 11h1v1h-1zM25 11h6v1h-6zM3 11h2v1h-2zM6 12h5v1h-5zM23 12h1v2h-1zM29 12h1v2h-1zM35 12h1v2h-1zM3 12h1v3h-1zM8 13h1v2h-1zM34 14h1v1h-1zM24 14h1v1h-1z"/></svg><svg style="left:88px;top:467px" width="13" height="13" viewBox="0 0 13 13"><rect x="0.5" y="0.5" width="12" height="12" fill="#fff" stroke="#000"/><path d="M2.5 6 L5 9.5 L10.5 2.5" stroke="#10b030" stroke-width="2.4" fill="none"/></svg><svg style="left:102px;top:465px" width="17" height="17" viewBox="0 0 17 17"><path d="M1 12 L8 9 L16 11 L16 15 L9 18 L1 16z" fill="#3868e0"/><path d="M1 12 L8 9 L16 11 L9 14z" fill="#c8e0ff"/><path d="M8 3 L12 2 L12 11 L8 12z" fill="#5080f0"/><path d="M9 4 L11 3.5 L11 10 L9 10.5z" fill="#a8d0ff"/><path d="M9.5 1.5 H15.5 M10 0 V3 M15 0 V3" stroke="#000" stroke-width="1.1"/><path d="M8 4 V9 H10" stroke="#000" stroke-width="1.1" fill="none"/><circle cx="5" cy="5" r="3.8" fill="none" stroke="#e00808" stroke-width="1.7"/><path d="M2.5 7.5 L7.5 2.5" stroke="#e00808" stroke-width="1.7"/></svg><svg style="left:119px;top:464px" width="44" height="28"><path fill="#000" d="M34 4h1v1h-1zM24 4h1v1h-1zM4 4h1v2h-1zM8 4h1v2h-1zM23 5h1v2h-1zM35 5h1v2h-1zM5 6h7v1h-7zM25 6h4v1h-4zM3 6h1v2h-1zM8 7h1v1h-1zM25 7h1v2h-1zM7 8h3v1h-3zM2 8h2v1h-2zM6 9h1v1h-1zM10 9h1v1h-1zM25 9h4v1h-4zM3 9h1v2h-1zM11 10h1v1h-1zM5 10h1v1h-1zM36 7h1v5h-1zM22 7h1v5h-1zM8 9h1v3h-1zM12 11h1v1h-1zM3 11h2v1h-2zM29 10h1v3h-1zM6 12h5v1h-5zM23 12h1v2h-1zM35 12h1v2h-1zM25 13h4v1h-4zM3 12h1v3h-1zM8 13h1v2h-1zM34 14h1v1h-1zM24 14h1v1h-1z"/></svg><svg style="left:88px;top:487px" width="13" height="13" viewBox="0 0 13 13"><rect x="0.5" y="0.5" width="12" height="12" fill="#fff" stroke="#000"/><path d="M2.5 6 L5 9.5 L10.5 2.5" stroke="#10b030" stroke-width="2.4" fill="none"/></svg><svg style="left:102px;top:485px" width="17" height="17" viewBox="0 0 17 17"><path d="M1 12 L8 9 L16 11 L16 15 L9 18 L1 16z" fill="#3868e0"/><path d="M1 12 L8 9 L16 11 L9 14z" fill="#c8e0ff"/><path d="M8 3 L12 2 L12 11 L8 12z" fill="#5080f0"/><path d="M9 4 L11 3.5 L11 10 L9 10.5z" fill="#a8d0ff"/><path d="M9.5 1.5 H15.5 M10 0 V3 M15 0 V3" stroke="#000" stroke-width="1.1"/><path d="M8 4 V9 H10" stroke="#000" stroke-width="1.1" fill="none"/><circle cx="5" cy="5" r="3.8" fill="none" stroke="#e00808" stroke-width="1.7"/><path d="M2.5 7.5 L7.5 2.5" stroke="#e00808" stroke-width="1.7"/></svg><svg style="left:119px;top:484px" width="44" height="28"><path fill="#000" d="M34 4h1v1h-1zM24 4h1v1h-1zM4 4h1v2h-1zM8 4h1v2h-1zM23 5h1v2h-1zM35 5h1v2h-1zM5 6h7v1h-7zM26 6h3v1h-3zM3 6h1v2h-1zM8 7h1v1h-1zM25 7h1v2h-1zM7 8h3v1h-3zM2 8h2v1h-2zM6 9h1v1h-1zM10 9h1v1h-1zM25 9h4v1h-4zM3 9h1v2h-1zM11 10h1v1h-1zM5 10h1v1h-1zM36 7h1v5h-1zM22 7h1v5h-1zM8 9h1v3h-1zM12 11h1v1h-1zM3 11h2v1h-2zM29 10h1v3h-1zM25 10h1v3h-1zM6 12h5v1h-5zM23 12h1v2h-1zM35 12h1v2h-1zM26 13h3v1h-3zM3 12h1v3h-1zM8 13h1v2h-1zM34 14h1v1h-1zM24 14h1v1h-1z"/></svg><svg style="left:88px;top:507px" width="13" height="13" viewBox="0 0 13 13"><rect x="0.5" y="0.5" width="12" height="12" fill="#fff" stroke="#000"/><path d="M2.5 6 L5 9.5 L10.5 2.5" stroke="#10b030" stroke-width="2.4" fill="none"/></svg><svg style="left:102px;top:505px" width="17" height="17" viewBox="0 0 17 17"><path d="M1 12 L8 9 L16 11 L16 15 L9 18 L1 16z" fill="#3868e0"/><path d="M1 12 L8 9 L16 11 L9 14z" fill="#c8e0ff"/><path d="M8 3 L12 2 L12 11 L8 12z" fill="#5080f0"/><path d="M9 4 L11 3.5 L11 10 L9 10.5z" fill="#a8d0ff"/><path d="M9.5 1.5 H15.5 M10 0 V3 M15 0 V3" stroke="#000" stroke-width="1.1"/><path d="M8 4 V9 H10" stroke="#000" stroke-width="1.1" fill="none"/><circle cx="5" cy="5" r="3.8" fill="none" stroke="#e00808" stroke-width="1.7"/><path d="M2.5 7.5 L7.5 2.5" stroke="#e00808" stroke-width="1.7"/></svg><svg style="left:119px;top:504px" width="44" height="28"><path fill="#000" d="M34 4h1v1h-1zM24 4h1v1h-1zM4 4h1v2h-1zM8 4h1v2h-1zM23 5h1v2h-1zM35 5h1v2h-1zM5 6h7v1h-7zM25 6h5v1h-5zM3 6h1v2h-1zM8 7h1v1h-1zM29 7h1v2h-1zM7 8h3v1h-3zM2 8h2v1h-2zM6 9h1v1h-1zM10 9h1v1h-1zM28 9h1v2h-1zM3 9h1v2h-1zM11 10h1v1h-1zM5 10h1v1h-1zM36 7h1v5h-1zM22 7h1v5h-1zM8 9h1v3h-1zM12 11h1v1h-1zM3 11h2v1h-2zM6 12h5v1h-5zM27 11h1v3h-1zM23 12h1v2h-1zM35 12h1v2h-1zM3 12h1v3h-1zM8 13h1v2h-1zM34 14h1v1h-1zM24 14h1v1h-1z"/></svg><svg style="left:88px;top:527px" width="13" height="13" viewBox="0 0 13 13"><rect x="0.5" y="0.5" width="12" height="12" fill="#fff" stroke="#000"/><path d="M2.5 6 L5 9.5 L10.5 2.5" stroke="#10b030" stroke-width="2.4" fill="none"/></svg><svg style="left:102px;top:525px" width="17" height="17" viewBox="0 0 17 17"><path d="M1 12 L8 9 L16 11 L16 15 L9 18 L1 16z" fill="#3868e0"/><path d="M1 12 L8 9 L16 11 L9 14z" fill="#c8e0ff"/><path d="M8 3 L12 2 L12 11 L8 12z" fill="#5080f0"/><path d="M9 4 L11 3.5 L11 10 L9 10.5z" fill="#a8d0ff"/><path d="M9.5 1.5 H15.5 M10 0 V3 M15 0 V3" stroke="#000" stroke-width="1.1"/><path d="M8 4 V9 H10" stroke="#000" stroke-width="1.1" fill="none"/><circle cx="5" cy="5" r="3.8" fill="none" stroke="#e00808" stroke-width="1.7"/><path d="M2.5 7.5 L7.5 2.5" stroke="#e00808" stroke-width="1.7"/></svg><svg style="left:119px;top:524px" width="44" height="28"><path fill="#000" d="M34 4h1v1h-1zM24 4h1v1h-1zM4 4h1v2h-1zM8 4h1v2h-1zM23 5h1v2h-1zM35 5h1v2h-1zM5 6h7v1h-7zM26 6h3v1h-3zM3 6h1v2h-1zM8 7h1v1h-1zM29 7h1v2h-1zM25 7h1v2h-1zM7 8h3v1h-3zM2 8h2v1h-2zM6 9h1v1h-1zM10 9h1v1h-1zM26 9h3v1h-3zM3 9h1v2h-1zM11 10h1v1h-1zM5 10h1v1h-1zM22 7h1v5h-1zM36 7h1v5h-1zM8 9h1v3h-1zM12 11h1v1h-1zM3 11h2v1h-2zM29 10h1v3h-1zM25 10h1v3h-1zM6 12h5v1h-5zM23 12h1v2h-1zM35 12h1v2h-1zM26 13h3v1h-3zM3 12h1v3h-1zM8 13h1v2h-1zM34 14h1v1h-1zM24 14h1v1h-1z"/></svg><svg style="left:88px;top:547px" width="13" height="13" viewBox="0 0 13 13"><rect x="0.5" y="0.5" width="12" height="12" fill="#fff" stroke="#000"/><path d="M2.5 6 L5 9.5 L10.5 2.5" stroke="#10b030" stroke-width="2.4" fill="none"/></svg><svg style="left:102px;top:545px" width="17" height="17" viewBox="0 0 17 17"><path d="M1 12 L8 9 L16 11 L16 15 L9 18 L1 16z" fill="#3868e0"/><path d="M1 12 L8 9 L16 11 L9 14z" fill="#c8e0ff"/><path d="M8 3 L12 2 L12 11 L8 12z" fill="#5080f0"/><path d="M9 4 L11 3.5 L11 10 L9 10.5z" fill="#a8d0ff"/><path d="M9.5 1.5 H15.5 M10 0 V3 M15 0 V3" stroke="#000" stroke-width="1.1"/><path d="M8 4 V9 H10" stroke="#000" stroke-width="1.1" fill="none"/><circle cx="5" cy="5" r="3.8" fill="none" stroke="#e00808" stroke-width="1.7"/><path d="M2.5 7.5 L7.5 2.5" stroke="#e00808" stroke-width="1.7"/></svg><svg style="left:119px;top:544px" width="44" height="28"><path fill="#000" d="M34 4h1v1h-1zM24 4h1v1h-1zM4 4h1v2h-1zM8 4h1v2h-1zM23 5h1v2h-1zM35 5h1v2h-1zM5 6h7v1h-7zM26 6h3v1h-3zM3 6h1v2h-1zM8 7h1v1h-1zM7 8h3v1h-3zM2 8h2v1h-2zM29 7h1v3h-1zM25 7h1v3h-1zM6 9h1v1h-1zM10 9h1v1h-1zM3 9h1v2h-1zM11 10h1v1h-1zM26 10h4v1h-4zM5 10h1v1h-1zM22 7h1v5h-1zM36 7h1v5h-1zM8 9h1v3h-1zM12 11h1v1h-1zM3 11h2v1h-2zM29 11h1v2h-1zM6 12h5v1h-5zM25 12h1v1h-1zM23 12h1v2h-1zM35 12h1v2h-1zM26 13h3v1h-3zM3 12h1v3h-1zM8 13h1v2h-1zM34 14h1v1h-1zM24 14h1v1h-1z"/></svg><svg style="left:88px;top:567px" width="13" height="13" viewBox="0 0 13 13"><rect x="0.5" y="0.5" width="12" height="12" fill="#fff" stroke="#000"/><path d="M2.5 6 L5 9.5 L10.5 2.5" stroke="#10b030" stroke-width="2.4" fill="none"/></svg><svg style="left:102px;top:565px" width="17" height="17" viewBox="0 0 17 17"><path d="M1 6 Q6 1 14 3 L15 11 Q8 15 2 12z" fill="#fff" stroke="#f08080"/><path d="M3 7 L9 5 L15 7 L15 12 L9 14 L3 12z" fill="#70a0e8"/><path d="M3 7 L9 5 L15 7 L9 9z" fill="#c0d8ff"/></svg><svg style="left:119px;top:564px" width="74" height="28"><path fill="#000" d="M64 4h1v1h-1zM48 4h1v1h-1zM27 4h10v1h-10zM15 4h9v1h-9zM9 4h1v1h-1zM23 5h1v1h-1zM18 5h1v1h-1zM20 5h1v1h-1zM15 5h1v1h-1zM31 5h1v1h-1zM6 5h7v1h-7zM47 5h1v2h-1zM65 5h1v2h-1zM12 6h1v1h-1zM30 6h1v1h-1zM6 6h1v1h-1zM49 6h3v1h-3zM56 6h3v1h-3zM15 6h9v1h-9zM4 4h1v4h-1zM19 7h1v1h-1zM6 7h7v1h-7zM27 7h10v1h-10zM33 8h1v1h-1zM30 8h1v1h-1zM6 8h1v1h-1zM3 8h2v1h-2zM14 8h11v1h-11zM30 9h4v1h-4zM2 9h1v1h-1zM22 9h1v1h-1zM6 9h7v1h-7zM16 9h1v1h-1zM16 10h7v1h-7zM33 10h1v1h-1zM12 10h1v1h-1zM8 10h1v1h-1zM6 10h1v1h-1zM30 10h1v1h-1zM10 10h1v1h-1zM66 7h1v5h-1zM46 7h1v5h-1zM30 11h4v1h-4zM22 11h1v1h-1zM6 11h7v1h-7zM16 11h1v1h-1zM55 7h1v6h-1zM51 7h1v6h-1zM59 7h1v6h-1zM27 8h1v5h-1zM36 8h1v5h-1zM4 9h1v4h-1zM16 12h7v1h-7zM33 12h1v1h-1zM6 12h1v1h-1zM30 12h1v1h-1zM47 12h1v2h-1zM12 12h1v2h-1zM8 12h1v2h-1zM10 12h1v2h-1zM65 12h1v2h-1zM4 13h3v1h-3zM22 13h1v1h-1zM56 13h3v1h-3zM27 13h10v1h-10zM49 13h5v1h-5zM16 13h1v1h-1zM64 14h1v1h-1zM48 14h1v1h-1zM27 14h1v1h-1zM6 14h1v1h-1zM36 14h1v1h-1zM11 14h2v1h-2zM4 14h1v1h-1zM14 14h11v1h-11z"/></svg><svg style="left:88px;top:587px" width="13" height="13" viewBox="0 0 13 13"><rect x="0.5" y="0.5" width="12" height="12" fill="#fff" stroke="#000"/><path d="M2.5 6 L5 9.5 L10.5 2.5" stroke="#10b030" stroke-width="2.4" fill="none"/></svg><svg style="left:102px;top:585px" width="17" height="17" viewBox="0 0 17 17"><path d="M1 4 L7 1 L15 3 L15 12 L9 15 L1 13z" fill="#5068d8"/><path d="M1 4 L7 1 L15 3 L9 6z" fill="#d0d8ff"/><path d="M1 4 L9 6 L9 15 L1 13z" fill="#98a8f0"/></svg><svg style="left:119px;top:584px" width="50" height="28"><path fill="#000" d="M40 4h1v1h-1zM24 4h1v1h-1zM9 4h1v2h-1zM4 4h1v3h-1zM23 5h1v2h-1zM41 5h1v2h-1zM25 6h3v1h-3zM31 6h3v1h-3zM7 6h5v1h-5zM2 7h5v1h-5zM11 7h1v3h-1zM9 7h1v3h-1zM4 8h1v3h-1zM6 10h7v1h-7zM22 7h1v5h-1zM42 7h1v5h-1zM4 11h2v1h-2zM9 11h1v1h-1zM33 7h1v6h-1zM27 7h1v6h-1zM8 12h1v1h-1zM10 12h1v1h-1zM2 12h2v1h-2zM23 12h1v2h-1zM41 12h1v2h-1zM11 13h1v1h-1zM31 13h5v1h-5zM7 13h1v1h-1zM25 13h5v1h-5zM12 14h1v1h-1zM40 14h1v1h-1zM24 14h1v1h-1zM5 14h2v1h-2z"/></svg><svg style="left:88px;top:607px" width="13" height="13" viewBox="0 0 13 13"><rect x="0.5" y="0.5" width="12" height="12" fill="#fff" stroke="#000"/><path d="M2.5 6 L5 9.5 L10.5 2.5" stroke="#10b030" stroke-width="2.4" fill="none"/></svg><svg style="left:102px;top:605px" width="17" height="17" viewBox="0 0 17 17"><path d="M1 4 L7 1 L15 3 L15 12 L9 15 L1 13z" fill="#5068d8"/><path d="M1 4 L7 1 L15 3 L9 6z" fill="#d0d8ff"/><path d="M1 4 L9 6 L9 15 L1 13z" fill="#98a8f0"/></svg><svg style="left:119px;top:604px" width="50" height="28"><path fill="#000" d="M40 4h1v1h-1zM24 4h1v1h-1zM9 4h1v2h-1zM4 4h1v3h-1zM23 5h1v2h-1zM41 5h1v2h-1zM25 6h3v1h-3zM32 6h3v1h-3zM7 6h5v1h-5zM31 7h1v1h-1zM2 7h5v1h-5zM11 7h1v3h-1zM35 7h1v3h-1zM9 7h1v3h-1zM4 8h1v3h-1zM34 10h1v1h-1zM6 10h7v1h-7zM22 7h1v5h-1zM42 7h1v5h-1zM33 11h1v1h-1zM4 11h2v1h-2zM9 11h1v1h-1zM27 7h1v6h-1zM32 12h1v1h-1zM8 12h1v1h-1zM10 12h1v1h-1zM2 12h2v1h-2zM23 12h1v2h-1zM41 12h1v2h-1zM11 13h1v1h-1zM31 13h5v1h-5zM7 13h1v1h-1zM25 13h5v1h-5zM12 14h1v1h-1zM40 14h1v1h-1zM24 14h1v1h-1zM5 14h2v1h-2z"/></svg><svg style="left:88px;top:627px" width="13" height="13" viewBox="0 0 13 13"><rect x="0.5" y="0.5" width="12" height="12" fill="#fff" stroke="#000"/><path d="M2.5 6 L5 9.5 L10.5 2.5" stroke="#10b030" stroke-width="2.4" fill="none"/></svg><svg style="left:102px;top:625px" width="17" height="17" viewBox="0 0 17 17"><path d="M1 4 L7 1 L15 3 L15 12 L9 15 L1 13z" fill="#5068d8"/><path d="M1 4 L7 1 L15 3 L9 6z" fill="#d0d8ff"/><path d="M1 4 L9 6 L9 15 L1 13z" fill="#98a8f0"/></svg><svg style="left:119px;top:624px" width="50" height="28"><path fill="#000" d="M40 4h1v1h-1zM24 4h1v1h-1zM9 4h1v2h-1zM4 4h1v3h-1zM23 5h1v2h-1zM41 5h1v2h-1zM25 6h3v1h-3zM31 6h4v1h-4zM7 6h5v1h-5zM2 7h5v1h-5zM35 7h1v2h-1zM11 7h1v3h-1zM9 7h1v3h-1zM32 9h3v1h-3zM4 8h1v3h-1zM6 10h7v1h-7zM22 7h1v5h-1zM42 7h1v5h-1zM4 11h2v1h-2zM9 11h1v1h-1zM27 7h1v6h-1zM35 10h1v3h-1zM8 12h1v1h-1zM10 12h1v1h-1zM2 12h2v1h-2zM23 12h1v2h-1zM41 12h1v2h-1zM11 13h1v1h-1zM7 13h1v1h-1zM31 13h4v1h-4zM25 13h5v1h-5zM12 14h1v1h-1zM40 14h1v1h-1zM24 14h1v1h-1zM5 14h2v1h-2z"/></svg><svg style="left:88px;top:647px" width="13" height="13" viewBox="0 0 13 13"><rect x="0.5" y="0.5" width="12" height="12" fill="#fff" stroke="#000"/><path d="M2.5 6 L5 9.5 L10.5 2.5" stroke="#10b030" stroke-width="2.4" fill="none"/></svg><svg style="left:102px;top:645px" width="17" height="17" viewBox="0 0 17 17"><path d="M1 3h5" stroke="#e02020" stroke-width="1.5"/><rect x="2" y="7" width="9" height="9" fill="#20a080" stroke="#000" stroke-width="0.8"/><circle cx="11" cy="7" r="4.5" fill="none" stroke="#000" stroke-width="1.3"/></svg><svg style="left:119px;top:644px" width="62" height="28"><path fill="#000" d="M52 4h1v1h-1zM17 4h1v1h-1zM22 4h1v1h-1zM36 4h1v1h-1zM10 4h1v1h-1zM7 4h1v2h-1zM11 5h1v1h-1zM18 5h1v1h-1zM21 5h1v1h-1zM35 5h1v2h-1zM53 5h1v2h-1zM37 6h3v1h-3zM46 6h2v1h-2zM2 6h11v1h-11zM14 6h11v1h-11zM45 7h1v1h-1zM19 7h1v1h-1zM10 8h1v1h-1zM15 8h9v1h-9zM4 8h1v1h-1zM7 7h1v3h-1zM44 8h1v2h-1zM18 9h1v1h-1zM5 9h1v1h-1zM9 9h1v1h-1zM47 7h1v4h-1zM43 10h1v1h-1zM6 10h3v1h-3zM14 10h11v1h-11zM34 7h1v5h-1zM54 7h1v5h-1zM17 11h1v1h-1zM5 11h1v1h-1zM43 11h6v1h-6zM9 11h1v1h-1zM39 7h1v6h-1zM10 12h1v1h-1zM18 12h5v1h-5zM4 12h1v1h-1zM16 12h1v1h-1zM7 11h1v3h-1zM47 12h1v2h-1zM53 12h1v2h-1zM35 12h1v2h-1zM20 13h1v1h-1zM15 13h1v1h-1zM11 13h2v1h-2zM37 13h5v1h-5zM2 13h2v1h-2zM52 14h1v1h-1zM6 14h2v1h-2zM14 14h1v1h-1zM36 14h1v1h-1zM16 14h9v1h-9z"/></svg><svg style="left:88px;top:667px" width="13" height="13" viewBox="0 0 13 13"><rect x="0.5" y="0.5" width="12" height="12" fill="#fff" stroke="#000"/><path d="M2.5 6 L5 9.5 L10.5 2.5" stroke="#10b030" stroke-width="2.4" fill="none"/></svg><svg style="left:102px;top:665px" width="17" height="17" viewBox="0 0 17 17"><path d="M1 3h5" stroke="#e02020" stroke-width="1.5"/><rect x="2" y="7" width="9" height="9" fill="#20a080" stroke="#000" stroke-width="0.8"/><circle cx="11" cy="7" r="4.5" fill="none" stroke="#000" stroke-width="1.3"/></svg><svg style="left:119px;top:664px" width="62" height="28"><path fill="#000" d="M52 4h1v1h-1zM17 4h1v1h-1zM22 4h1v1h-1zM36 4h1v1h-1zM10 4h1v1h-1zM7 4h1v2h-1zM11 5h1v1h-1zM18 5h1v1h-1zM21 5h1v1h-1zM35 5h1v2h-1zM53 5h1v2h-1zM37 6h3v1h-3zM43 6h4v1h-4zM2 6h11v1h-11zM14 6h11v1h-11zM19 7h1v1h-1zM43 7h1v2h-1zM10 8h1v1h-1zM15 8h9v1h-9zM4 8h1v1h-1zM7 7h1v3h-1zM18 9h1v1h-1zM43 9h4v1h-4zM5 9h1v1h-1zM9 9h1v1h-1zM6 10h3v1h-3zM14 10h11v1h-11zM34 7h1v5h-1zM54 7h1v5h-1zM17 11h1v1h-1zM5 11h1v1h-1zM9 11h1v1h-1zM39 7h1v6h-1zM47 10h1v3h-1zM10 12h1v1h-1zM18 12h5v1h-5zM4 12h1v1h-1zM16 12h1v1h-1zM7 11h1v3h-1zM53 12h1v2h-1zM35 12h1v2h-1zM20 13h1v1h-1zM15 13h1v1h-1zM43 13h4v1h-4zM11 13h2v1h-2zM37 13h5v1h-5zM2 13h2v1h-2zM52 14h1v1h-1zM6 14h2v1h-2zM14 14h1v1h-1zM36 14h1v1h-1zM16 14h9v1h-9z"/></svg><svg style="left:88px;top:687px" width="13" height="13" viewBox="0 0 13 13"><rect x="0.5" y="0.5" width="12" height="12" fill="#fff" stroke="#000"/><path d="M2.5 6 L5 9.5 L10.5 2.5" stroke="#10b030" stroke-width="2.4" fill="none"/></svg><svg style="left:102px;top:685px" width="17" height="17" viewBox="0 0 17 17"><rect x="3" y="2" width="11" height="13" rx="2" fill="#7890e8"/><ellipse cx="8.5" cy="3" rx="5.5" ry="2" fill="#d0dcff"/><rect x="5" y="4" width="3" height="10" fill="#a8b8ff"/></svg><svg style="left:119px;top:684px" width="62" height="28"><path fill="#000" d="M52 4h1v1h-1zM36 4h1v1h-1zM20 4h1v1h-1zM2 4h11v1h-11zM16 4h1v2h-1zM21 5h1v1h-1zM53 5h1v2h-1zM35 5h1v2h-1zM5 6h5v1h-5zM37 6h3v1h-3zM44 6h3v1h-3zM14 6h11v1h-11zM5 7h1v1h-1zM9 7h1v1h-1zM16 7h1v1h-1zM43 7h1v2h-1zM15 8h3v1h-3zM4 8h7v1h-7zM21 7h1v3h-1zM18 9h1v1h-1zM43 9h4v1h-4zM15 9h2v1h-2zM19 10h5v1h-5zM34 7h1v5h-1zM54 7h1v5h-1zM10 9h1v3h-1zM4 9h1v3h-1zM7 10h1v2h-1zM14 10h1v2h-1zM39 7h1v6h-1zM47 10h1v3h-1zM43 10h1v3h-1zM8 12h1v1h-1zM6 12h1v1h-1zM12 5h1v9h-1zM2 5h1v9h-1zM21 11h1v3h-1zM53 12h1v2h-1zM35 12h1v2h-1zM44 13h3v1h-3zM5 13h1v1h-1zM37 13h5v1h-5zM9 13h1v1h-1zM16 10h1v5h-1zM52 14h1v1h-1zM18 14h7v1h-7zM36 14h1v1h-1zM2 14h11v1h-11z"/></svg><svg style="left:88px;top:707px" width="13" height="13" viewBox="0 0 13 13"><rect x="0.5" y="0.5" width="12" height="12" fill="#fff" stroke="#000"/><path d="M2.5 6 L5 9.5 L10.5 2.5" stroke="#10b030" stroke-width="2.4" fill="none"/></svg><svg style="left:102px;top:705px" width="17" height="17" viewBox="0 0 17 17"><rect x="3" y="2" width="11" height="13" rx="2" fill="#7890e8"/><ellipse cx="8.5" cy="3" rx="5.5" ry="2" fill="#d0dcff"/><rect x="5" y="4" width="3" height="10" fill="#a8b8ff"/></svg><svg style="left:119px;top:704px" width="62" height="28"><path fill="#000" d="M52 4h1v1h-1zM36 4h1v1h-1zM20 4h1v1h-1zM2 4h11v1h-11zM16 4h1v2h-1zM21 5h1v1h-1zM53 5h1v2h-1zM35 5h1v2h-1zM5 6h5v1h-5zM43 6h5v1h-5zM37 6h3v1h-3zM14 6h11v1h-11zM5 7h1v1h-1zM9 7h1v1h-1zM16 7h1v1h-1zM47 7h1v2h-1zM15 8h3v1h-3zM4 8h7v1h-7zM21 7h1v3h-1zM18 9h1v1h-1zM15 9h2v1h-2zM46 9h1v2h-1zM19 10h5v1h-5zM34 7h1v5h-1zM54 7h1v5h-1zM10 9h1v3h-1zM4 9h1v3h-1zM7 10h1v2h-1zM14 10h1v2h-1zM39 7h1v6h-1zM8 12h1v1h-1zM6 12h1v1h-1zM12 5h1v9h-1zM2 5h1v9h-1zM45 11h1v3h-1zM21 11h1v3h-1zM35 12h1v2h-1zM53 12h1v2h-1zM5 13h1v1h-1zM37 13h5v1h-5zM9 13h1v1h-1zM16 10h1v5h-1zM52 14h1v1h-1zM18 14h7v1h-7zM36 14h1v1h-1zM2 14h11v1h-11z"/></svg><svg style="left:88px;top:727px" width="13" height="13" viewBox="0 0 13 13"><rect x="0.5" y="0.5" width="12" height="12" fill="#fff" stroke="#000"/><path d="M2.5 6 L5 9.5 L10.5 2.5" stroke="#10b030" stroke-width="2.4" fill="none"/></svg><svg style="left:102px;top:725px" width="17" height="17" viewBox="0 0 17 17"><path d="M1 3h5M3.5 0.5v5" stroke="#e02020" stroke-width="1.4"/><rect x="2" y="7" width="9" height="9" fill="#20a080" stroke="#000" stroke-width="0.8"/><circle cx="11" cy="7" r="4.5" fill="none" stroke="#000" stroke-width="1.3"/></svg><svg style="left:119px;top:724px" width="62" height="28"><path fill="#000" d="M52 4h1v1h-1zM36 4h1v1h-1zM10 4h1v1h-1zM18 4h2v1h-2zM7 4h1v2h-1zM11 5h1v1h-1zM15 5h3v1h-3zM53 5h1v2h-1zM35 5h1v2h-1zM17 6h1v1h-1zM37 6h3v1h-3zM44 6h3v1h-3zM21 6h4v1h-4zM2 6h11v1h-11zM14 7h6v1h-6zM47 7h1v2h-1zM43 7h1v2h-1zM17 8h1v1h-1zM10 8h1v1h-1zM4 8h1v1h-1zM7 7h1v3h-1zM16 9h3v1h-3zM44 9h3v1h-3zM5 9h1v1h-1zM9 9h1v1h-1zM16 10h2v1h-2zM6 10h3v1h-3zM34 7h1v5h-1zM54 7h1v5h-1zM19 10h1v2h-1zM15 11h1v1h-1zM5 11h1v1h-1zM9 11h1v1h-1zM24 7h1v6h-1zM39 7h1v6h-1zM21 7h1v6h-1zM47 10h1v3h-1zM43 10h1v3h-1zM14 12h1v1h-1zM10 12h1v1h-1zM4 12h1v1h-1zM7 11h1v3h-1zM53 12h1v2h-1zM35 12h1v2h-1zM44 13h3v1h-3zM11 13h2v1h-2zM37 13h5v1h-5zM2 13h2v1h-2zM21 13h4v1h-4zM17 11h1v4h-1zM52 14h1v1h-1zM6 14h2v1h-2zM36 14h1v1h-1z"/></svg><svg style="left:88px;top:747px" width="13" height="13" viewBox="0 0 13 13"><rect x="0.5" y="0.5" width="12" height="12" fill="#fff" stroke="#000"/><path d="M2.5 6 L5 9.5 L10.5 2.5" stroke="#10b030" stroke-width="2.4" fill="none"/></svg><svg style="left:102px;top:745px" width="17" height="17" viewBox="0 0 17 17"><rect x="3" y="2" width="11" height="13" rx="2" fill="#7890e8"/><ellipse cx="8.5" cy="3" rx="5.5" ry="2" fill="#d0dcff"/><rect x="5" y="4" width="3" height="10" fill="#a8b8ff"/></svg><svg style="left:119px;top:744px" width="62" height="28"><path fill="#000" d="M52 4h1v1h-1zM36 4h1v1h-1zM20 4h1v1h-1zM2 4h11v1h-11zM16 4h1v2h-1zM21 5h1v1h-1zM53 5h1v2h-1zM35 5h1v2h-1zM5 6h5v1h-5zM37 6h3v1h-3zM44 6h3v1h-3zM14 6h11v1h-11zM5 7h1v1h-1zM9 7h1v1h-1zM16 7h1v1h-1zM15 8h3v1h-3zM4 8h7v1h-7zM47 7h1v3h-1zM43 7h1v3h-1zM21 7h1v3h-1zM18 9h1v1h-1zM15 9h2v1h-2zM19 10h5v1h-5zM44 10h4v1h-4zM34 7h1v5h-1zM54 7h1v5h-1zM10 9h1v3h-1zM4 9h1v3h-1zM7 10h1v2h-1zM14 10h1v2h-1zM39 7h1v6h-1zM47 11h1v2h-1zM8 12h1v1h-1zM43 12h1v1h-1zM6 12h1v1h-1zM12 5h1v9h-1zM2 5h1v9h-1zM21 11h1v3h-1zM53 12h1v2h-1zM35 12h1v2h-1zM44 13h3v1h-3zM5 13h1v1h-1zM37 13h5v1h-5zM9 13h1v1h-1zM16 10h1v5h-1zM52 14h1v1h-1zM18 14h7v1h-7zM36 14h1v1h-1zM2 14h11v1h-11z"/></svg><svg style="left:88px;top:767px" width="13" height="13" viewBox="0 0 13 13"><rect x="0.5" y="0.5" width="12" height="12" fill="#fff" stroke="#000"/><path d="M2.5 6 L5 9.5 L10.5 2.5" stroke="#10b030" stroke-width="2.4" fill="none"/></svg><svg style="left:102px;top:765px" width="17" height="17" viewBox="0 0 17 17"><rect x="3" y="2" width="11" height="13" rx="2" fill="#7890e8"/><ellipse cx="8.5" cy="3" rx="5.5" ry="2" fill="#d0dcff"/><rect x="5" y="4" width="3" height="10" fill="#a8b8ff"/></svg><svg style="left:119px;top:764px" width="62" height="28"><path fill="#000" d="M52 4h1v1h-1zM36 4h1v1h-1zM20 4h1v1h-1zM2 4h11v1h-11zM16 4h1v2h-1zM21 5h1v1h-1zM53 5h1v2h-1zM35 5h1v2h-1zM5 6h5v1h-5zM38 6h3v1h-3zM44 6h3v1h-3zM14 6h11v1h-11zM5 7h1v1h-1zM9 7h1v1h-1zM37 7h1v1h-1zM16 7h1v1h-1zM15 8h3v1h-3zM4 8h7v1h-7zM41 7h1v3h-1zM21 7h1v3h-1zM18 9h1v1h-1zM15 9h2v1h-2zM40 10h1v1h-1zM19 10h5v1h-5zM34 7h1v5h-1zM54 7h1v5h-1zM10 9h1v3h-1zM4 9h1v3h-1zM7 10h1v2h-1zM14 10h1v2h-1zM39 11h1v1h-1zM47 7h1v6h-1zM43 7h1v6h-1zM38 12h1v1h-1zM8 12h1v1h-1zM6 12h1v1h-1zM12 5h1v9h-1zM2 5h1v9h-1zM21 11h1v3h-1zM53 12h1v2h-1zM35 12h1v2h-1zM44 13h3v1h-3zM5 13h1v1h-1zM37 13h5v1h-5zM9 13h1v1h-1zM16 10h1v5h-1zM52 14h1v1h-1zM18 14h7v1h-7zM36 14h1v1h-1zM2 14h11v1h-11z"/></svg><div style="left:200px;top:283px;width:17px;height:506px;background:#efefef"></div><svg style="left:203px;top:289px" width="10" height="6" viewBox="0 0 10 6"><path d="M1 5 L5 1 L9 5z" fill="#000"/></svg><div style="left:201px;top:302px;width:14px;height:16px;background:linear-gradient(90deg,#f8f8f8,#c8c8c8);border:1px solid #a0a0a0;border-radius:2px;box-sizing:border-box"></div><svg style="left:203px;top:775px" width="10" height="6" viewBox="0 0 10 6"><path d="M1 1 L5 5 L9 1z" fill="#000"/></svg><div style="left:47px;top:789px;width:170px;height:15px;background:#efefef"></div><svg style="left:52px;top:792px" width="6" height="10" viewBox="0 0 6 10"><path d="M5 1 L1 5 L5 9z" fill="#000"/></svg><svg style="left:187px;top:792px" width="6" height="10" viewBox="0 0 6 10"><path d="M1 1 L5 5 L1 9z" fill="#000"/></svg><div style="left:66px;top:789px;width:57px;height:14px;background:linear-gradient(#fafafa,#c8c8c8);border:1px solid #a0a0a0;border-radius:3px;box-sizing:border-box"></div><svg style="left:88px;top:792px" width="12" height="8" viewBox="0 0 12 8"><path d="M2 1v6M5 1v6M8 1v6" stroke="#404040"/></svg><div style="left:50px;top:811px;width:66px;height:1px;background:#a8a8a8"></div><div style="left:150px;top:811px;width:66px;height:1px;background:#a8a8a8"></div><div style="left:120px;top:808px;width:26px;height:6px;background:#c8c8c8;border:1px solid #999;box-sizing:border-box"></div>
<div style="left:229px;top:234px;width:955px;height:589px;background:#000"></div>
<svg style="left:229px;top:234px" width="955" height="589" viewBox="229 234 955 589"><g><polygon points="464.0,630.6 735.0,784.6 949.5,661.5 678.5,507.5" fill="#ffffff" stroke="#000" stroke-width="1.8" stroke-linejoin="round" /><polygon points="464.0,630.6 735.0,784.6 735.0,814.1 464.0,660.1" fill="#a8a8ac" stroke="#000" stroke-width="1.8" stroke-linejoin="round" /><polygon points="735.0,784.6 949.5,661.5 949.5,691.0 735.0,814.1" fill="#c8c6cc" stroke="#000" stroke-width="1.8" stroke-linejoin="round" /><polygon points="708.0,682.0 923.0,558.7 923.0,645.7 708.0,769.0" fill="#c9c7cc" stroke="#000" stroke-width="1.8" stroke-linejoin="round" /><polygon points="708.0,605.0 923.0,481.7 923.0,558.7 708.0,682.0" fill="#cc6c6c" stroke="#000" stroke-width="1.8" stroke-linejoin="round" /><polygon points="708.0,537.6 923.0,414.3 923.0,481.7 708.0,605.0" fill="#6898ca" stroke="#000" stroke-width="1.8" stroke-linejoin="round" /><polygon points="708.0,537.6 492.0,413.7 492.0,481.1 708.0,605.0" fill="#627ea4" stroke="#000" stroke-width="1.8" stroke-linejoin="round" /><polygon points="708.0,605.0 492.0,481.1 492.0,558.1 708.0,682.0" fill="#b46a70" stroke="#000" stroke-width="1.8" stroke-linejoin="round" /><polygon points="666.0,657.9 708.0,682.0 708.0,769.0 666.0,744.9" fill="#a8a8ac" stroke="#000" stroke-width="1.8" stroke-linejoin="round" /><polygon points="492.0,558.1 532.5,581.4 532.5,668.4 492.0,645.1" fill="#a8a8ac" stroke="#000" stroke-width="1.8" stroke-linejoin="round" /><clipPath id="opc"><polygon points="532.5,581.4 666.0,657.9 666.0,744.9 532.5,668.4"/></clipPath><polygon points="532.5,581.4 666.0,657.9 666.0,744.9 532.5,668.4" fill="#d4d4d4" stroke="#000" stroke-width="1.8" stroke-linejoin="round" /><g clip-path="url(#opc)"><polygon points="535.0,621.0 666.0,696.1 726.0,661.7 595.0,586.6" fill="#ffffff" stroke="#000" stroke-width="1.2" stroke-linejoin="round" /><polygon points="535.0,621.0 666.0,696.1 666.0,715.1 535.0,640.0" fill="#a9aeb6" stroke="#000" stroke-width="1.2" stroke-linejoin="round" /><polygon points="535.0,640.0 666.0,715.1 666.0,742.1 535.0,667.0" fill="#bcaab8" stroke="#000" stroke-width="1.2" stroke-linejoin="round" /><polygon points="535.0,667.0 666.0,742.1 666.0,746.1 535.0,671.0" fill="#ffffff" stroke="#000" stroke-width="1" stroke-linejoin="round" /><rect x="570" y="600" width="18" height="16" fill="#d8d030" stroke="#000" stroke-width="1"/><ellipse cx="579" cy="616" rx="9" ry="4" fill="#c8c020" stroke="#000" stroke-width="1"/><rect x="660" y="660" width="6" height="14" fill="#d8d030"/><ellipse cx="561" cy="620" rx="5" ry="3.5" fill="#3040e0" stroke="#202060" stroke-width="0.8"/><ellipse cx="662" cy="682" rx="4" ry="3.5" fill="#3040e0"/></g><polygon points="532.5,581.4 666.0,657.9 666.0,744.9 532.5,668.4" fill="none" stroke="#000" stroke-width="1.8" stroke-linejoin="round" /><ellipse cx="599" cy="509.5" rx="5.5" ry="7.5" fill="#e8f4ff" stroke="#000" stroke-width="1.3"/><ellipse cx="599" cy="581.6" rx="5.5" ry="7.5" fill="#ffc8c8" stroke="#000" stroke-width="1.3"/><ellipse cx="799" cy="610" rx="6" ry="8.5" fill="#7c7c7c" stroke="#000" stroke-width="1.3"/><ellipse cx="831" cy="591" rx="6" ry="8.5" fill="#7c7c7c" stroke="#000" stroke-width="1.3"/><polygon points="465.0,365.5 734.0,520.0 734.0,552.5 465.0,398.0" fill="#a4a4a8" stroke="#000" stroke-width="1.8" stroke-linejoin="round" /><polygon points="734.0,520.0 950.0,396.5 950.0,429.0 734.0,552.5" fill="#c6c4ca" stroke="#000" stroke-width="1.8" stroke-linejoin="round" /><polygon points="465.0,365.5 734.0,520.0 950.0,396.5 681.0,242.0" fill="#ffffff" stroke="#000" stroke-width="1.8" stroke-linejoin="round" /><ellipse cx="664.4" cy="306.4" rx="16" ry="9.5" fill="#000"/><ellipse cx="664.4" cy="306.9" rx="12.5" ry="7.3" fill="#10f010"/><ellipse cx="664.4" cy="306.9" rx="9" ry="5.2" fill="#000"/><ellipse cx="665.4" cy="306.9" rx="6.5" ry="3.8" fill="#0a900a"/><rect x="662.4" y="301.4" width="1.5" height="9" fill="#000"/><ellipse cx="577.3" cy="356.4" rx="16" ry="9.5" fill="#000"/><ellipse cx="577.3" cy="356.9" rx="12.5" ry="7.3" fill="#10f010"/><ellipse cx="577.3" cy="356.9" rx="9" ry="5.2" fill="#000"/><ellipse cx="578.3" cy="356.9" rx="6.5" ry="3.8" fill="#0a900a"/><rect x="575.3" y="351.4" width="1.5" height="9" fill="#000"/><ellipse cx="837" cy="405.7" rx="16" ry="9.5" fill="#000"/><ellipse cx="837" cy="406.2" rx="12.5" ry="7.3" fill="#10f010"/><ellipse cx="837" cy="406.2" rx="9" ry="5.2" fill="#000"/><ellipse cx="838" cy="406.2" rx="6.5" ry="3.8" fill="#0a900a"/><rect x="835" y="400.7" width="1.5" height="9" fill="#000"/><ellipse cx="752" cy="456" rx="16" ry="9.5" fill="#000"/><ellipse cx="752" cy="456.5" rx="12.5" ry="7.3" fill="#10f010"/><ellipse cx="752" cy="456.5" rx="9" ry="5.2" fill="#000"/><ellipse cx="753" cy="456.5" rx="6.5" ry="3.8" fill="#0a900a"/><rect x="750" y="451" width="1.5" height="9" fill="#000"/><path d="M631.2 369.5 v12 A76.5 43.5 0 0 0 784.2 381.5 v-12 z" fill="#1d7d62" stroke="#000" stroke-width="1.6"/><ellipse cx="707.7" cy="369.5" rx="76.5" ry="43.5" fill="#22b99b" stroke="#000" stroke-width="1.6"/><path d="M636.7 375.5 A71 40 0 0 0 778.7 375.5" fill="none" stroke="#000" stroke-width="1"/><clipPath id="hole"><ellipse cx="707.8" cy="369" rx="55" ry="32"/></clipPath><ellipse cx="707.8" cy="369" rx="55" ry="32" fill="#1b6b57"/><g clip-path="url(#hole)"><ellipse cx="707.8" cy="389" rx="55" ry="32" fill="#ffffff" stroke="#000" stroke-width="1.2"/><ellipse cx="708" cy="400" rx="30" ry="14" fill="#a8cc40" stroke="#000" stroke-width="1"/></g><ellipse cx="707.8" cy="369" rx="55" ry="32" fill="none" stroke="#000" stroke-width="1.6"/><ellipse cx="661" cy="342" rx="7" ry="4.5" fill="#223a22" stroke="#000" stroke-width="1"/><ellipse cx="691" cy="388" rx="7" ry="4.5" fill="#223a22" stroke="#000" stroke-width="1"/><ellipse cx="753" cy="395" rx="7" ry="4.5" fill="#223a22" stroke="#000" stroke-width="1"/><path d="M707 462 L709 462 L708 479 z" fill="#3050c0" stroke="#3050c0" stroke-width="1"/><ellipse cx="707.5" cy="455" rx="13" ry="7" fill="#f4a050"/><ellipse cx="707.5" cy="455" rx="9" ry="3.5" fill="none" stroke="#ffe8d0" stroke-width="1"/><ellipse cx="707.5" cy="442" rx="13" ry="8" fill="#f4a050"/><ellipse cx="707.5" cy="441" rx="8" ry="3" fill="none" stroke="#ffe0c0" stroke-width="1"/><path d="M711 480 L736 463 L749 459 L739 468 z" fill="#b8e8b8" stroke="#70b070" stroke-width="0.6"/><path d="M711 484 L738 495 L748 505 L735 500 z" fill="#f0b0b8" stroke="#d08090" stroke-width="0.6"/><text x="711" y="435" font-family="Liberation Sans" font-size="12" fill="#2050ff">ZC</text><text x="732" y="455" font-family="Liberation Sans" font-size="11" fill="#30a030">YC</text><text x="731" y="518" font-family="Liberation Sans" font-size="12" fill="#e02020">XC</text><path d="M727 773 l10 6 l10 -6" fill="none" stroke="#606060" stroke-width="1.2"/><polygon points="294,745 309,753 309,770 294,778 280,770 280,753" fill="#bcb4bc" stroke="#d8d8d8" stroke-width="0.6"/><path d="M280 753 L294 761 L309 753 M294 761 V778" stroke="#d8c8d8" stroke-width="0.8" fill="none"/><path d="M279 768 V752" stroke="#1040ff" stroke-width="2.2"/><path d="M279 746 L276 753 H282z" fill="#1040ff"/><text x="275" y="745" font-family="Liberation Sans" font-size="10" font-weight="bold" fill="#1040ff">Z</text><path d="M281 771 L299 782" stroke="#e02020" stroke-width="2.2"/><path d="M303 784 L296 778 L294 783z" fill="#e02020"/><text x="302" y="792" font-family="Liberation Sans" font-size="10" fill="#e03030">X</text><ellipse cx="279" cy="770" rx="5" ry="4" fill="#ececec"/><path d="M309 753 l2 -3" stroke="#30c030" stroke-width="1.5"/></g></svg>
<div style="left:4px;top:823px;width:1180px;height:1px;background:#f0f0f0"></div>
<div style="left:4px;top:824px;width:1180px;height:68px;background:#d8d8d8"></div>
<div style="left:0px;top:892px;width:1190px;height:8px;background:#1a1a20"></div>
<div style="left:0px;top:892px;width:1190px;height:1px;background:#000"></div>
<div style="left:4px;top:824px;width:184px;height:33px;border-right:1px solid #b8b8b8;border-bottom:1px solid #b8b8b8;box-sizing:border-box"></div><svg style="left:8px;top:828px" width="4" height="26" viewBox="0 0 4 26"><rect x="1" y="0" width="2" height="2" fill="#a0a4a0"/><rect x="1" y="3" width="2" height="2" fill="#a0a4a0"/><rect x="1" y="6" width="2" height="2" fill="#a0a4a0"/><rect x="1" y="9" width="2" height="2" fill="#a0a4a0"/><rect x="1" y="12" width="2" height="2" fill="#a0a4a0"/><rect x="1" y="15" width="2" height="2" fill="#a0a4a0"/><rect x="1" y="18" width="2" height="2" fill="#a0a4a0"/><rect x="1" y="21" width="2" height="2" fill="#a0a4a0"/></svg><svg style="left:16px;top:832px" width="22" height="21" viewBox="0 0 22 21"><rect x="0.5" y="0.5" width="21" height="20" fill="#a8a8b0" stroke="#9090a0"/><path d="M5 15 L8 6 L12 12 L16 5" stroke="#c0b090" fill="none"/></svg><svg style="left:46px;top:828px" width="25" height="25" viewBox="0 0 25 25"><path d="M1 5.0 L7 2 L13 5.0 L7 8.0z" fill="#fff4a0" stroke="#c89010" stroke-width="0.6"/><path d="M1 5.0 L7 8.0 L7 14.0 L1 11.0z" fill="#f8d030" stroke="#c89010" stroke-width="0.6"/><path d="M7 8.0 L13 5.0 L13 11.0 L7 14.0z" fill="#f0a818" stroke="#c89010" stroke-width="0.6"/><path d="M1 14.0 L7 11 L13 14.0 L7 17.0z" fill="#fff4a0" stroke="#c89010" stroke-width="0.6"/><path d="M1 14.0 L7 17.0 L7 23.0 L1 20.0z" fill="#f8d030" stroke="#c89010" stroke-width="0.6"/><path d="M7 17.0 L13 14.0 L13 20.0 L7 23.0z" fill="#f0a818" stroke="#c89010" stroke-width="0.6"/><path d="M9 16.0 L15 13 L21 16.0 L15 19.0z" fill="#fff4a0" stroke="#c89010" stroke-width="0.6"/><path d="M9 16.0 L15 19.0 L15 25.0 L9 22.0z" fill="#f8d030" stroke="#c89010" stroke-width="0.6"/><path d="M15 19.0 L21 16.0 L21 22.0 L15 25.0z" fill="#f0a818" stroke="#c89010" stroke-width="0.6"/><path d="M15 6 H24 M19.5 1.5 V10.5" stroke="#2060e0" stroke-width="2.2"/></svg><svg style="left:77px;top:828px" width="25" height="25" viewBox="0 0 25 25"><path d="M6 9.25 L12.5 6 L19.0 9.25 L12.5 12.5z" fill="#fff4a0" stroke="#c89010" stroke-width="0.6"/><path d="M6 9.25 L12.5 12.5 L12.5 19.0 L6 15.75z" fill="#f8d030" stroke="#c89010" stroke-width="0.6"/><path d="M12.5 12.5 L19.0 9.25 L19.0 15.75 L12.5 19.0z" fill="#f0a818" stroke="#c89010" stroke-width="0.6"/><path d="M14 3 Q20 2 23 6 M2 22 Q4 25 10 23 M1 18 Q2 21 5 21 M17 1 Q21 1 22 3" stroke="#3070e0" stroke-width="1.6" fill="none"/></svg><svg style="left:108px;top:827px" width="24" height="27" viewBox="0 0 24 27"><path d="M2 1 L11 6 L2 11z M21 1 L12 6 L21 11z" fill="#1020d0"/><path d="M11.5 0 V26" stroke="#000" stroke-dasharray="2 1.5"/><rect x="1.5" y="14.5" width="8" height="9" fill="#f8f040" stroke="#806000"/><path d="M13 24 L13 14 L22 24z" fill="#e01010" stroke="#600000"/></svg><div style="left:139px;top:827px;width:1px;height:28px;background:#b4b4b8"></div><div style="left:140px;top:827px;width:1px;height:28px;background:#fbfbfb"></div><svg style="left:146px;top:829px" width="24" height="24" viewBox="0 0 24 24"><path d="M1 4.0 L7 1 L13 4.0 L7 7.0z" fill="#fff4a0" stroke="#c89010" stroke-width="0.6"/><path d="M1 4.0 L7 7.0 L7 13.0 L1 10.0z" fill="#f8d030" stroke="#c89010" stroke-width="0.6"/><path d="M7 7.0 L13 4.0 L13 10.0 L7 13.0z" fill="#f0a818" stroke="#c89010" stroke-width="0.6"/><path d="M1 13.0 L7 10 L13 13.0 L7 16.0z" fill="#fff4a0" stroke="#c89010" stroke-width="0.6"/><path d="M1 13.0 L7 16.0 L7 22.0 L1 19.0z" fill="#f8d030" stroke="#c89010" stroke-width="0.6"/><path d="M7 16.0 L13 13.0 L13 19.0 L7 22.0z" fill="#f0a818" stroke="#c89010" stroke-width="0.6"/><path d="M10 15.0 L16 12 L22 15.0 L16 18.0z" fill="#fff4a0" stroke="#c89010" stroke-width="0.6"/><path d="M10 15.0 L16 18.0 L16 24.0 L10 21.0z" fill="#f8d030" stroke="#c89010" stroke-width="0.6"/><path d="M16 18.0 L22 15.0 L22 21.0 L16 24.0z" fill="#f0a818" stroke="#c89010" stroke-width="0.6"/></svg><svg style="left:175px;top:847px" width="7" height="5" viewBox="0 0 7 5"><path d="M0.5 0.5h6l-3 3.5z" fill="#000"/></svg><div style="left:155px;top:857px;width:728px;height:35px;border-left:1px solid #fbfbfb;border-top:1px solid #fbfbfb;border-right:1px solid #b8b8b8;box-sizing:border-box"></div><svg style="left:159px;top:861px" width="4" height="26" viewBox="0 0 4 26"><rect x="1" y="0" width="2" height="2" fill="#a0a4a0"/><rect x="1" y="3" width="2" height="2" fill="#a0a4a0"/><rect x="1" y="6" width="2" height="2" fill="#a0a4a0"/><rect x="1" y="9" width="2" height="2" fill="#a0a4a0"/><rect x="1" y="12" width="2" height="2" fill="#a0a4a0"/><rect x="1" y="15" width="2" height="2" fill="#a0a4a0"/><rect x="1" y="18" width="2" height="2" fill="#a0a4a0"/><rect x="1" y="21" width="2" height="2" fill="#a0a4a0"/></svg><svg style="left:166px;top:860px" width="23" height="25" viewBox="0 0 23 25"><path d="M1 6 L16 3 L16 22 L1 24z" fill="#fff" stroke="#202020" stroke-width="1.3"/><rect x="4" y="11" width="4" height="4" fill="none" stroke="#202020"/><rect x="9" y="10" width="4" height="5" fill="none" stroke="#202020"/><rect x="4" y="16" width="9" height="4" fill="none" stroke="#202020"/><path d="M17 1 L19 6 L23 6 L20 9 L21 13 L17 10 L13 13 L14 9 L11 6 L15 6z" fill="#f8e020"/></svg><svg style="left:196px;top:861px" width="24" height="24" viewBox="0 0 24 24"><rect x="0" y="0" width="24" height="24" fill="#90a0a8"/><path d="M3 8 L10 4 L20 10 L14 20 L5 16z" fill="#c0b8b0" opacity="0.7"/></svg><svg style="left:222px;top:864px" width="56" height="28"><path fill="#9c9c9c" d="M33 4h1v1h-1zM7 4h1v1h-1zM29 4h1v1h-1zM22 4h1v1h-1zM39 4h10v1h-10zM20 4h1v2h-1zM26 5h11v1h-11zM23 5h1v1h-1zM3 5h10v1h-10zM42 5h1v1h-1zM33 6h1v1h-1zM12 6h1v1h-1zM29 6h1v1h-1zM3 6h1v1h-1zM15 6h10v1h-10zM42 6h5v1h-5zM39 5h1v3h-1zM11 7h1v1h-1zM5 7h5v1h-5zM28 7h7v1h-7zM2 7h1v1h-1zM45 7h1v1h-1zM41 7h2v1h-2zM15 7h1v2h-1zM28 8h1v1h-1zM39 8h2v1h-2zM34 8h1v1h-1zM43 8h2v1h-2zM48 5h1v5h-1zM28 9h7v1h-7zM45 9h1v1h-1zM15 9h4v1h-4zM39 9h1v1h-1zM3 9h10v1h-10zM42 9h1v1h-1zM23 9h1v2h-1zM28 10h1v1h-1zM34 10h1v1h-1zM43 10h1v1h-1zM6 10h1v1h-1zM46 10h3v1h-3zM39 10h3v1h-3zM20 7h1v5h-1zM44 11h1v1h-1zM28 11h7v1h-7zM22 11h1v1h-1zM18 10h1v3h-1zM5 11h1v2h-1zM43 12h1v1h-1zM31 12h1v1h-1zM21 12h1v1h-1zM8 10h1v4h-1zM15 10h1v4h-1zM48 11h1v3h-1zM39 11h1v3h-1zM12 12h1v2h-1zM24 12h1v2h-1zM44 13h1v1h-1zM17 13h1v1h-1zM26 13h11v1h-11zM22 13h1v1h-1zM20 13h1v1h-1zM4 13h1v1h-1zM19 14h1v1h-1zM3 14h1v1h-1zM14 14h1v1h-1zM31 14h1v1h-1zM23 14h2v1h-2zM39 14h10v1h-10zM9 14h4v1h-4z"/></svg><svg style="left:280px;top:862px" width="22" height="22" viewBox="0 0 22 22"><path d="M3 4 V14 Q3 19 7 19 Q10 19 10 14 V8 Q10 4 13 4 Q16 4 16 8 V14 Q16 19 19 19" stroke="#000" stroke-width="1.6" fill="none"/><circle cx="3" cy="14" r="2" fill="#e01010"/><circle cx="10" cy="14" r="2" fill="#e01010"/><circle cx="19" cy="14" r="2" fill="#e01010"/></svg><svg style="left:311px;top:862px" width="22" height="22" viewBox="0 0 22 22"><path d="M2 19 L19 3" stroke="#000" stroke-width="1.6"/><circle cx="2.5" cy="18.5" r="2.2" fill="#e01010"/><circle cx="19" cy="3" r="2.2" fill="#e01010"/></svg><svg style="left:342px;top:862px" width="22" height="22" viewBox="0 0 22 22"><path d="M3 3 Q16 3 19 18" stroke="#000" stroke-width="1.6" fill="none"/><circle cx="3" cy="3" r="2.2" fill="#e01010"/><circle cx="14" cy="7" r="2.2" fill="#e01010"/><circle cx="19" cy="18" r="2.2" fill="#e01010"/></svg><svg style="left:373px;top:862px" width="22" height="22" viewBox="0 0 22 22"><circle cx="11" cy="12" r="9.5" fill="none" stroke="#000" stroke-width="1.6"/></svg><svg style="left:405px;top:862px" width="20" height="22" viewBox="0 0 20 22"><path d="M1 2 H10 Q17 2 17 10 V20" stroke="#a08898" stroke-width="1.4" fill="none"/></svg><svg style="left:435px;top:862px" width="20" height="22" viewBox="0 0 20 22"><path d="M1 2 H10 L17 9 V20" stroke="#a08898" stroke-width="1.4" fill="none"/></svg><svg style="left:466px;top:864px" width="22" height="20" viewBox="0 0 22 20"><rect x="2" y="3" width="17" height="12" fill="none" stroke="#000" stroke-width="1.6"/><circle cx="2" cy="3" r="2" fill="#e01010"/><circle cx="19" cy="15" r="2" fill="#e01010"/></svg><svg style="left:497px;top:862px" width="23" height="22" viewBox="0 0 23 22"><path d="M2 10 L9 4 L14 15 L21 9" stroke="#000" stroke-width="1.5" fill="none"/><circle cx="9" cy="4" r="2" fill="#e01010"/><circle cx="14" cy="15" r="2" fill="#e01010"/><circle cx="2" cy="10" r="2" fill="#606060"/><circle cx="21" cy="9" r="2" fill="#606060"/></svg><svg style="left:530px;top:864px" width="20" height="20" viewBox="0 0 20 20"><path d="M10 1 V19 M1 10 H19" stroke="#000" stroke-width="1.6"/></svg><svg style="left:557px;top:862px" width="23" height="22" viewBox="0 0 23 22"><path d="M3 17 Q1 8 6 5 Q10 3 12 7 Q16 2 20 6 Q23 12 14 18 Q8 21 3 17z" fill="none" stroke="#a08898" stroke-width="1.4"/><path d="M6 12 Q12 8 14 11" stroke="#a08898" fill="none"/></svg><svg style="left:589px;top:869px" width="7" height="5" viewBox="0 0 7 5"><path d="M0.5 0.5h6l-3 3.5z" fill="#000"/></svg><div style="left:601px;top:860px;width:1px;height:30px;background:#b4b4b8"></div><div style="left:602px;top:860px;width:1px;height:30px;background:#fbfbfb"></div><svg style="left:609px;top:862px" width="18" height="22" viewBox="0 0 18 22"><path d="M1 5 L17 19 M6 20 L12 3" stroke="#a08898" stroke-width="1.4"/><path d="M12 7 L17 4 L18 8 L14 11z" fill="#a0a0a0"/></svg><svg style="left:636px;top:862px" width="24" height="22" viewBox="0 0 24 22"><path d="M2 5 L18 20 M10 18 L22 3" stroke="#a08898" stroke-width="1.4"/><path d="M16 6 L22 3 L23 8 L18 11z" fill="#a0a0a0"/></svg><div style="left:670px;top:860px;width:1px;height:30px;background:#b4b4b8"></div><div style="left:671px;top:860px;width:1px;height:30px;background:#fbfbfb"></div><svg style="left:675px;top:862px" width="26" height="22" viewBox="0 0 26 22"><path d="M2 8 V18 M24 8 V18 M2 13 H24" stroke="#a08898" stroke-width="1.4"/><path d="M2 13 L6 11 V15z M24 13 L20 11 V15z" fill="#a08898"/><path d="M12 12 L18 3" stroke="#a08898" stroke-width="1.2"/><path d="M15 7 L19 3 L21 6 L17 9z" fill="#a0a0a0"/></svg><svg style="left:706px;top:869px" width="7" height="5" viewBox="0 0 7 5"><path d="M0.5 0.5h6l-3 3.5z" fill="#000"/></svg><div style="left:718px;top:860px;width:1px;height:30px;background:#b4b4b8"></div><div style="left:719px;top:860px;width:1px;height:30px;background:#fbfbfb"></div><svg style="left:726px;top:862px" width="20" height="22" viewBox="0 0 20 22"><path d="M1 11 L9 3 M5 12 L13 4 M9 19 H19 M14 19 V10" stroke="#a08898" stroke-width="1.4"/></svg><svg style="left:757px;top:862px" width="20" height="22" viewBox="0 0 20 22"><path d="M2 20 L8 9 L19 4" stroke="#a08898" stroke-width="1.4" fill="none"/><circle cx="8" cy="9" r="2.5" fill="#a08898"/></svg><svg style="left:786px;top:869px" width="7" height="5" viewBox="0 0 7 5"><path d="M0.5 0.5h6l-3 3.5z" fill="#000"/></svg><svg style="left:801px;top:862px" width="24" height="22" viewBox="0 0 24 22"><path d="M1 14 L22 2" stroke="#a08898" stroke-width="1.4"/><circle cx="12" cy="13" r="7" fill="none" stroke="#a08898" stroke-width="1.4"/></svg><svg style="left:830px;top:862px" width="26" height="24" viewBox="0 0 26 24"><path d="M1 5 L7 9 L1 13z" fill="#80a080"/><path d="M9 11 L17 2 M13 12 L21 3 M12 14 V24" stroke="#a08898" stroke-width="1.4"/></svg><svg style="left:860px;top:869px" width="7" height="5" viewBox="0 0 7 5"><path d="M0.5 0.5h6l-3 3.5z" fill="#000"/></svg><svg style="left:870px;top:880px" width="7" height="5" viewBox="0 0 7 5"><path d="M0.5 0.5h6l-3 3.5z" fill="#000"/></svg><div style="left:833px;top:886px;width:40px;height:14px;background:#dde4ec;border:2px solid #2a8af0;border-bottom:none;box-sizing:border-box"></div>
</body></html>
